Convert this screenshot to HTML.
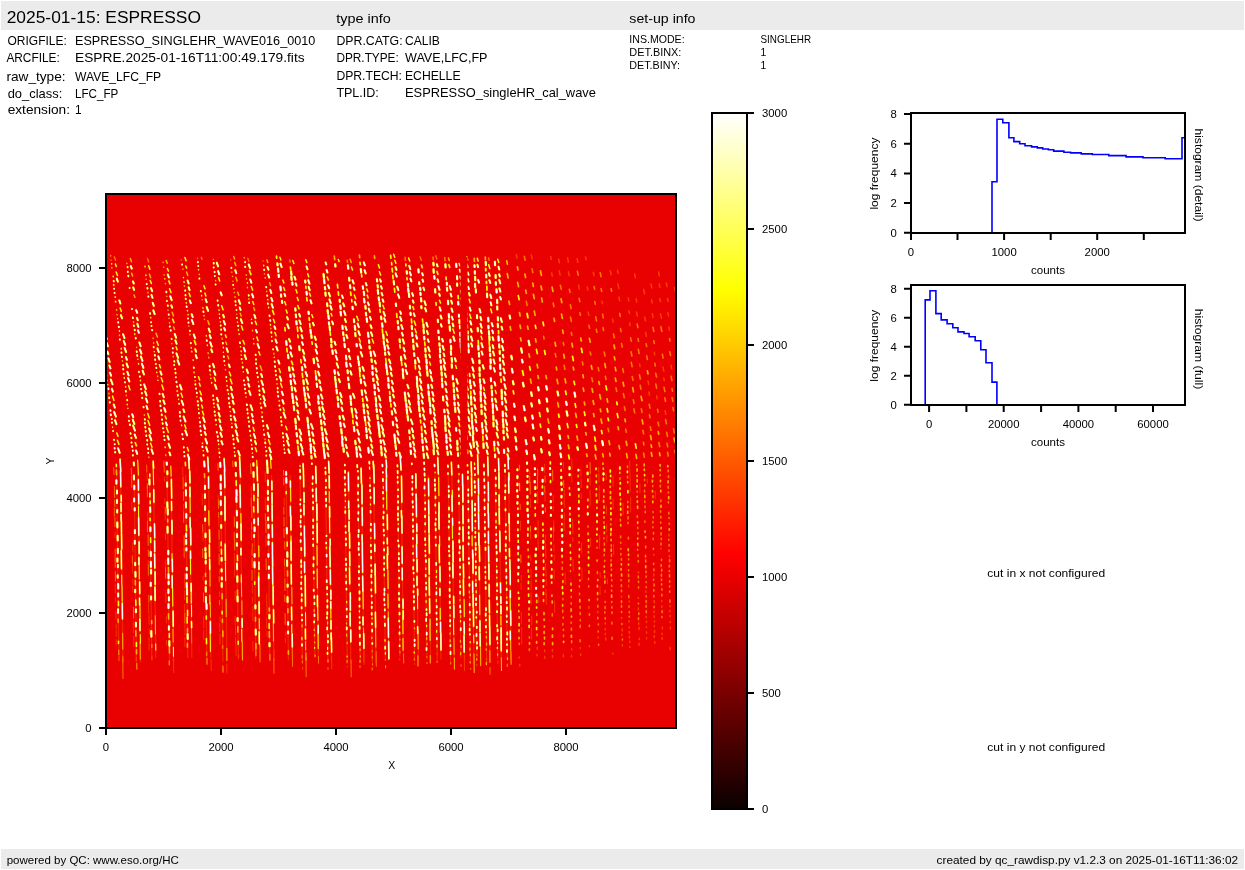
<!DOCTYPE html><html><head><meta charset="utf-8"><title>qc</title><style>html,body{margin:0;padding:0;background:#fff;width:1245px;height:870px;overflow:hidden}svg{display:block;will-change:transform}text{font-family:"Liberation Sans",sans-serif;fill:#000}</style></head><body><svg width="1245" height="870" viewBox="0 0 1245 870">
<defs><linearGradient id="hot" x1="0" y1="1" x2="0" y2="0"><stop offset="0" stop-color="rgb(11,0,0)"/><stop offset="0.365" stop-color="rgb(255,0,0)"/><stop offset="0.746" stop-color="rgb(255,255,0)"/><stop offset="1" stop-color="rgb(255,255,255)"/></linearGradient><clipPath id="clp"><rect x="106" y="194" width="570" height="534"/></clipPath></defs>
<rect x="1" y="1" width="1243" height="29" fill="#ebebeb"/>
<rect x="1" y="849" width="1243" height="20" fill="#ebebeb"/>
<g clip-path="url(#clp)">
<rect x="106" y="194" width="570" height="534" fill="#e90000"/>
<path d="M116.6 475L118.9 661.5M120.6 475L122.9 661.5M134.1 475L136.4 662.4M138.1 475L140.4 662.4M149.6 475L151.8 657.9M153.6 475L155.8 657.9M167.1 475L169.4 661.7M171.1 475L173.4 661.7M185.6 475L187.8 658.0M189.6 475L191.8 658.0M204.6 475L206.8 657.7M208.6 475L210.8 657.7M220.6 475L222.9 661.8M224.6 475L226.9 661.8M236.1 475L238.4 659.4M240.1 475L242.4 659.4M253.6 475L255.8 658.3M257.6 475L259.8 658.3M267.6 475L269.9 660.9M271.6 475L273.9 660.9M286.1 475L288.4 660.6M290.1 475L292.4 660.6M300.1 475L302.4 661.0M303.7 475L306.0 661.0M312.6 475L314.8 658.0M316.2 475L318.4 658.0M325.6 475L327.9 661.3M329.2 475L331.5 661.3M344.9 475L347.2 663.7M348.5 475L350.8 663.7M357.9 475L360.2 662.3M361.5 475L363.8 662.3M370.1 475L372.4 662.7M373.7 475L376.0 662.7M383.0 475L385.3 660.5M386.6 475L388.9 660.5M397.6 475L399.8 656.4M401.2 475L403.4 656.4M412.3 475L414.6 660.7M415.9 475L418.2 660.7M424.6 475L426.9 659.4M428.2 475L430.5 659.4M435.0 475L437.3 659.5M438.6 475L440.9 659.5M448.3 475L450.6 660.4M451.9 475L454.2 660.4M458.7 475L460.9 658.4M462.3 475L464.5 658.4M468.0 475L470.3 664.0M471.6 475L473.9 664.0M474.7 475L477.0 659.4M478.3 475L480.6 659.4M484.3 475L486.6 663.2M487.9 475L490.2 663.2M495.5 475L497.7 658.5M499.1 475L501.3 658.5M505.1 475L507.3 658.8M508.7 475L510.9 658.8" stroke="#ff5000" stroke-width="1.3" fill="none" opacity="0.45"/>
<path d="M277.4 263.4l0.2 1.9M278.0 268.5l0.4 3.3M278.6 274.7l0.2 2.2M280.4 286.6l0.4 3.7M281.0 294.5l0.2 2.2M282.0 300.9l0.2 2.0M286.2 341.2l0.4 3.7M288.0 354.8l0.4 3.3M289.1 367.2l0.4 3.5M290.3 374.6l0.3 2.4M290.7 380.6l0.4 3.9M291.7 387.0l0.4 3.4M292.2 393.7l0.5 4.7M293.1 400.2l0.3 3.0M293.8 406.3l0.4 3.8M295.2 418.9l0.5 4.5M295.8 425.7l0.4 3.3M296.6 433.1l0.4 3.3M297.4 440.5l0.3 2.8M298.6 451.4l0.3 3.8M291.1 271.4l0.4 3.6M291.3 276.7l0.4 3.1M292.3 282.5l0.2 2.1M295.3 308.4l0.2 2.2M295.8 314.5l0.3 2.6M296.3 321.2l0.3 3.1M299.2 346.3l0.4 3.9M302.0 367.1l0.4 3.2M303.4 380.3l0.4 3.9M303.9 387.6l0.4 3.3M304.6 392.9l0.4 3.2M305.4 398.1l0.3 3.0M305.9 404.1l0.4 3.4M307.4 417.8l0.5 4.6M308.0 424.2l0.5 4.2M308.8 431.1l0.5 4.3M309.8 438.5l0.3 2.8M310.6 444.3l0.3 2.5M310.7 448.3l0.4 4.6M311.4 455.9l0.2 2.6M305.2 280.6l0.2 1.9M306.5 291.9l0.3 2.7M308.5 311.7l0.3 2.3M310.4 329.7l0.4 3.5M311.3 335.0l0.3 3.0M313.6 358.9l0.5 4.3M316.0 376.0l0.4 3.7M316.7 383.5l0.4 3.5M318.2 396.0l0.3 2.8M318.3 401.2l0.3 2.5M319.4 407.2l0.3 2.8M319.9 413.0l0.4 3.9M321.0 420.2l0.4 3.9M321.6 427.2l0.3 2.9M322.4 432.6l0.4 3.3M322.7 437.5l0.4 3.8M323.2 443.6l0.4 3.4M323.8 448.8l0.5 4.8M324.5 454.4l0.3 3.7M323.5 274.1l0.4 3.7M324.1 279.6l0.4 3.7M324.9 287.0l0.3 2.3M325.4 292.6l0.3 3.1M327.1 303.4l0.3 2.8M327.6 310.2l0.4 3.4M328.4 315.4l0.4 3.4M328.9 322.4l0.3 2.3M329.6 326.7l0.4 3.7M331.1 338.8l0.4 3.6M331.3 344.8l0.3 2.3M332.4 350.3l0.4 3.5M334.5 370.4l0.4 3.3M335.0 376.9l0.5 4.0M335.7 382.5l0.5 4.7M336.5 389.6l0.4 3.9M337.6 396.9l0.4 3.3M338.0 403.4l0.4 3.4M339.6 416.2l0.3 2.7M340.3 422.6l0.4 3.8M341.2 429.2l0.5 4.4M342.1 436.3l0.4 3.6M342.1 441.1l0.6 5.0M343.5 448.3l0.3 3.5M335.2 264.2l0.3 2.3M339.6 299.7l0.2 2.2M340.3 305.5l0.4 3.3M340.6 311.7l0.4 3.8M342.4 325.9l0.3 3.0M343.1 332.2l0.3 2.8M343.9 337.6l0.3 3.0M344.5 343.9l0.4 3.3M346.0 355.8l0.4 3.7M346.2 362.5l0.5 4.1M347.5 370.3l0.3 2.8M348.1 377.6l0.3 2.6M348.8 383.7l0.5 4.4M350.4 396.0l0.4 3.7M350.8 401.4l0.4 3.6M351.6 408.3l0.4 3.9M353.9 426.9l0.5 4.3M355.2 440.9l0.4 3.3M356.3 447.1l0.3 3.0M356.7 452.1l0.4 4.6M347.9 265.3l0.4 3.3M349.1 277.8l0.3 2.8M350.0 285.2l0.3 2.9M352.5 306.9l0.3 2.2M353.9 319.4l0.3 2.7M354.8 325.8l0.5 4.1M355.2 333.0l0.4 3.2M356.6 344.1l0.2 2.2M357.9 356.6l0.3 2.6M358.6 361.0l0.5 4.3M359.6 367.8l0.4 3.5M360.7 379.3l0.4 3.8M361.7 390.3l0.5 4.6M363.4 404.0l0.3 3.0M363.8 409.3l0.5 4.2M364.7 416.7l0.4 3.8M366.1 427.9l0.5 4.1M366.6 434.8l0.4 3.3M368.3 447.9l0.5 4.8M360.8 269.0l0.4 3.6M362.8 286.3l0.3 2.4M363.8 291.7l0.4 3.5M364.1 298.8l0.4 3.7M365.3 305.8l0.3 2.8M365.9 312.9l0.3 2.5M366.7 318.4l0.4 3.4M368.0 332.7l0.5 4.1M369.0 340.3l0.3 2.6M369.5 346.3l0.2 2.2M370.6 351.7l0.5 4.4M371.5 359.4l0.3 2.5M372.3 365.8l0.3 3.0M372.4 372.0l0.3 2.7M373.2 378.6l0.3 2.4M374.3 384.6l0.4 3.8M374.7 391.8l0.3 2.9M375.7 397.6l0.4 4.0M376.0 403.5l0.4 3.2M376.6 409.1l0.3 2.9M377.3 415.0l0.5 4.0M378.2 422.0l0.5 4.4M378.8 427.4l0.5 4.0M379.3 432.2l0.5 4.7M380.6 440.3l0.3 2.5M381.0 446.2l0.4 3.7M381.5 451.9l0.3 3.4M376.9 279.2l0.3 2.2M377.6 285.0l0.3 2.4M377.8 290.1l0.4 3.7M378.7 297.3l0.3 3.1M379.6 302.6l0.4 3.7M381.1 316.6l0.3 2.5M382.1 323.4l0.4 3.4M383.2 334.7l0.5 4.3M383.7 341.2l0.4 3.5M384.6 346.0l0.4 4.0M385.0 352.5l0.3 2.3M386.1 363.9l0.5 4.5M386.9 370.1l0.5 4.4M388.1 377.9l0.4 3.4M388.4 384.1l0.4 3.9M389.9 396.7l0.5 4.7M391.8 411.2l0.4 3.2M392.8 421.9l0.4 3.2M394.4 434.5l0.4 3.8M394.9 439.6l0.4 3.6M395.5 444.9l0.5 4.3M396.2 452.7l0.3 3.0M393.7 281.0l0.4 3.5M395.9 303.5l0.2 2.4M397.7 321.0l0.2 2.4M398.3 326.8l0.2 2.3M399.6 339.3l0.3 2.9M401.0 356.9l0.4 3.8M402.7 369.2l0.3 2.8M402.9 373.6l0.5 4.5M404.8 392.6l0.3 2.8M405.3 396.7l0.5 4.8M406.2 403.3l0.4 4.1M406.7 409.0l0.5 4.8M407.6 415.9l0.5 4.6M409.2 430.3l0.3 2.9M410.2 443.2l0.4 3.4M410.7 450.5l0.3 3.4M406.7 271.3l0.2 2.3M407.9 283.9l0.2 2.5M408.2 288.5l0.3 3.4M408.9 293.6l0.3 3.4M409.9 305.9l0.2 2.6M410.5 312.9l0.2 2.1M411.7 325.7l0.3 3.4M412.1 332.8l0.3 3.2M413.0 339.5l0.3 2.8M413.4 345.4l0.4 4.0M414.1 353.2l0.3 2.8M415.1 360.2l0.3 3.4M416.8 376.9l0.4 4.4M417.0 382.7l0.4 4.7M417.8 388.6l0.3 3.5M418.3 395.1l0.4 4.0M418.5 401.2l0.4 4.0M419.1 407.1l0.4 4.1M419.9 413.8l0.3 2.8M421.8 433.5l0.3 3.5M422.3 439.4l0.3 3.5M422.9 446.6l0.3 4.0M423.7 453.8l0.3 4.1M418.4 269.4l0.3 3.0M419.2 282.3l0.2 1.9M420.2 287.8l0.2 2.2M420.4 292.9l0.2 2.1M421.0 298.1l0.3 3.3M421.3 306.1l0.2 2.0M423.4 324.3l0.3 3.7M423.6 329.9l0.3 3.4M424.2 336.8l0.2 2.7M425.3 348.4l0.3 3.2M425.6 354.6l0.2 2.5M426.3 359.3l0.4 4.4M426.6 365.9l0.3 3.5M427.2 371.3l0.4 4.4M428.1 384.8l0.3 3.7M428.5 391.3l0.4 4.3M429.3 397.5l0.3 3.8M430.0 402.6l0.3 3.7M430.2 408.9l0.4 4.6M431.5 421.2l0.2 2.8M431.8 427.4l0.3 4.0M432.3 432.5l0.4 4.8M433.0 438.3l0.4 4.4M433.5 443.3l0.4 4.9M433.6 449.7l0.3 4.6M433.4 262.9l0.2 2.5M433.5 269.2l0.3 3.6M434.3 276.1l0.2 2.6M435.1 289.2l0.2 3.3M437.8 319.7l0.2 2.3M438.3 330.6l0.2 2.3M438.9 337.0l0.2 2.4M439.4 343.4l0.2 2.3M439.9 348.3l0.3 4.0M439.9 354.9l0.2 2.6M440.6 360.3l0.2 2.7M441.1 366.4l0.3 3.5M441.6 372.3l0.2 3.3M441.9 378.3l0.2 3.2M442.2 383.5l0.3 3.7M443.0 396.5l0.3 3.9M444.3 409.7l0.2 2.6M445.0 415.9l0.3 3.6M445.1 420.5l0.3 4.4M445.4 426.9l0.3 4.2M446.2 434.5l0.3 3.9M446.4 440.2l0.2 2.5M446.8 446.4l0.2 2.7M447.6 451.7l0.2 3.2M445.4 264.2l0.2 3.2M446.8 282.7l0.1 2.1M447.0 287.8l0.2 2.8M448.0 300.7l0.2 3.5M448.8 314.1l0.2 3.6M448.8 320.0l0.2 3.1M449.7 326.4l0.3 4.2M450.4 339.9l0.2 2.4M451.0 345.7l0.2 3.4M450.9 351.2l0.2 3.4M451.7 358.1l0.3 3.9M451.7 364.3l0.2 3.4M452.7 375.9l0.2 3.5M453.5 383.1l0.2 3.7M453.8 389.4l0.2 2.7M454.2 394.9l0.3 4.6M454.5 402.6l0.2 2.6M455.1 407.6l0.3 4.3M456.1 428.1l0.2 2.6M457.2 440.9l0.3 3.9M457.4 447.3l0.2 2.9M458.0 453.3l0.1 2.7M456.2 263.9l0.2 3.0M457.0 276.2l0.2 2.9M457.1 283.5l0.1 2.3M458.2 301.9l0.2 2.6M458.9 314.7l0.1 2.1M459.4 319.9l0.2 3.4M459.9 325.6l0.2 2.7M460.2 332.7l0.2 3.3M460.3 338.8l0.2 3.3M460.7 343.8l0.2 4.1M461.3 349.3l0.2 3.3M461.8 356.3l0.2 3.3M462.2 362.8l0.3 4.4M462.3 369.2l0.2 3.5M462.9 374.9l0.3 4.4M462.9 381.7l0.2 3.3M463.4 387.5l0.2 3.1M463.7 392.3l0.3 4.3M463.9 397.8l0.2 3.3M464.3 403.4l0.2 3.3M465.0 410.1l0.2 3.3M465.4 417.0l0.2 4.0M465.9 429.6l0.2 4.1M466.5 436.3l0.2 3.0M467.2 450.3l0.1 2.8M464.2 264.6l0.1 2.2M464.6 275.8l0.1 2.1M465.6 299.4l0.1 2.6M465.8 304.8l0.2 3.5M466.3 312.7l0.1 2.2M467.7 331.4l0.1 2.1M467.9 336.1l0.2 3.6M468.3 343.8l0.2 3.2M468.5 349.4l0.2 3.0M470.0 380.3l0.2 3.2M470.7 385.4l0.2 2.9M471.0 396.3l0.2 3.1M471.2 401.1l0.2 3.6M471.8 408.3l0.2 3.1M471.7 414.3l0.2 3.8M472.0 420.1l0.2 4.0M472.5 425.7l0.2 3.2M473.1 430.6l0.2 3.7M472.9 435.9l0.3 4.7M473.6 442.2l0.3 4.8M474.5 265.2l0.1 1.8M474.8 271.3l0.1 2.3M475.1 276.9l0.2 3.3M475.0 283.7l0.2 3.4M475.8 289.3l0.2 3.2M477.0 315.3l0.1 2.8M477.7 328.1l0.2 3.2M478.3 345.5l0.2 4.1M478.9 352.8l0.2 3.8M479.4 360.4l0.1 2.8M479.5 367.6l0.2 3.3M479.6 373.3l0.1 2.8M479.9 379.2l0.2 3.6M480.6 384.9l0.2 4.2M480.6 391.4l0.2 4.6M480.7 397.5l0.2 3.9M481.4 404.5l0.1 2.6M481.5 410.2l0.2 4.0M482.0 423.1l0.2 4.0M482.7 429.4l0.2 4.0M483.4 443.4l0.2 4.5M485.7 261.9l0.2 3.3M485.7 268.6l0.1 2.1M486.2 274.8l0.1 2.6M486.4 281.5l0.1 1.9M487.0 293.6l0.2 3.5M488.2 317.9l0.2 3.5M488.4 325.8l0.1 2.7M488.9 331.0l0.2 3.6M489.3 336.3l0.2 3.8M489.7 347.1l0.2 4.2M490.2 353.7l0.1 2.5M490.5 359.4l0.2 3.7M490.4 365.6l0.2 3.1M490.9 378.2l0.1 2.9M491.5 385.7l0.1 2.8M491.9 390.9l0.2 4.5M492.1 398.6l0.1 2.9M492.7 403.8l0.2 4.3M492.9 410.1l0.2 3.2M493.3 415.5l0.2 4.7M493.4 422.6l0.2 3.8M494.2 441.8l0.2 3.9M495.1 454.5l0.1 2.7M494.9 261.8l0.2 3.5M495.6 275.1l0.1 2.9M495.8 282.2l0.1 2.6M496.5 289.4l0.2 3.1M497.1 299.9l0.2 3.3M497.2 306.5l0.1 2.9M497.8 317.2l0.2 3.2M497.8 323.8l0.2 3.3M498.5 336.4l0.2 4.3M499.2 344.3l0.2 3.3M499.7 350.9l0.1 2.9M499.9 358.1l0.1 2.6M500.1 364.6l0.2 4.4M500.4 372.7l0.1 2.6M501.6 389.8l0.2 4.6M501.7 395.5l0.2 3.8M502.2 401.8l0.1 2.6M502.7 411.6l0.2 4.8M502.9 419.2l0.2 3.1M503.3 423.8l0.2 3.8M503.4 430.3l0.2 3.0M503.9 437.0l0.1 2.5M504.1 449.7l0.1 3.2M509.6 315.5l0.6 3.0M511.3 355.8l0.7 3.6M511.9 368.9l0.7 3.7M512.9 381.2l0.6 3.2M514.0 403.8l0.6 3.0M514.4 416.6l0.7 3.5M515.0 428.4l0.7 3.6M515.4 437.1l0.9 4.3M516.0 446.6l0.6 3.0M517.4 469.4l0.0 0.8M517.4 476.1l0.0 2.0M517.4 483.6l0.0 1.7M517.1 490.2l0.0 1.2M517.7 495.8l0.0 1.4M517.4 502.3l0.0 1.3M518.0 514.5l0.0 1.5M518.0 521.6l0.0 1.4M518.0 535.0l0.0 1.4M518.3 546.6l0.0 2.1M518.5 559.4l0.0 1.1M518.5 566.9l0.0 1.1M518.2 573.4l0.0 1.1M519.0 597.8l0.0 1.1M521.1 348.3l0.9 4.3M522.0 359.7l0.6 2.8M522.5 370.8l0.9 4.4M522.9 382.7l0.8 3.8M523.8 406.1l0.8 4.2M525.0 417.5l0.7 3.6M525.7 440.0l0.8 4.2M526.4 450.6l0.6 3.4M527.0 462.5l0.0 1.3M527.4 469.7l0.0 1.4M527.5 476.0l0.0 0.8M527.4 481.3l0.0 1.5M527.3 488.8l0.0 1.2M527.4 496.1l0.0 1.7M527.6 502.4l0.0 1.7M527.5 508.9l0.0 2.0M528.1 514.7l0.0 2.1M528.1 520.8l0.0 1.9M527.9 541.9l0.0 0.9M528.6 563.5l0.0 1.6M529.2 601.3l0.0 1.1M527.1 313.5l0.8 4.2M528.6 340.9l0.9 4.4M531.2 392.4l0.7 3.6M531.3 403.2l0.7 3.3M532.2 415.5l0.6 3.2M532.6 424.6l0.8 3.9M533.3 437.5l0.6 2.9M534.0 455.1l0.8 4.3M534.9 468.3l0.0 0.9M534.9 473.9l0.0 1.0M534.7 481.1l0.0 1.4M535.3 486.9l0.0 2.1M535.4 494.2l0.0 1.8M535.2 501.0l0.0 1.2M535.5 528.2l0.0 1.1M535.7 535.0l0.0 2.1M536.0 548.6l0.0 1.2M535.6 554.5l0.0 1.7M536.0 561.3l0.0 1.4M536.1 567.3l0.0 1.9M536.1 574.5l0.0 1.4M536.1 587.7l0.0 1.1M536.3 594.7l0.0 1.5M538.1 387.2l0.6 3.2M539.0 400.1l0.6 3.2M541.0 437.0l0.5 2.7M541.1 449.1l0.7 3.4M542.3 468.0l0.1 2.1M542.6 479.8l0.0 2.0M542.4 492.7l0.0 1.5M542.7 505.2l0.0 1.2M542.9 511.6l0.0 1.5M543.3 540.9l0.0 1.9M543.1 546.7l0.0 2.0M543.4 580.0l0.0 1.2M546.2 386.0l0.7 3.6M546.6 398.6l0.6 3.0M547.2 408.6l0.6 2.9M548.2 429.1l0.7 3.5M548.9 440.2l0.6 3.2M549.2 452.2l0.6 2.9M550.1 468.1l0.0 0.8M550.2 474.0l0.0 1.2M550.7 493.7l0.0 1.0M550.8 501.1l0.0 1.0M551.0 507.3l0.0 1.0M550.9 514.8l0.0 0.9M551.1 528.6l0.0 0.8M551.1 542.7l0.0 1.0M551.3 561.4l0.0 1.4M551.5 575.6l0.0 2.1M557.5 391.6l0.8 3.9M558.6 414.4l0.5 2.7M559.1 425.7l0.7 3.4M559.5 435.3l0.7 3.7M559.8 445.0l0.7 3.7M560.5 453.6l0.7 3.6M560.9 463.5l0.0 0.8M561.3 476.8l0.0 1.3M561.4 482.6l0.0 2.2M561.8 489.1l0.0 1.1M561.5 495.8l0.0 1.7M562.0 509.8l0.0 1.2M561.8 515.6l0.0 2.0M561.8 529.3l0.0 1.3M562.2 535.0l0.0 1.4M562.3 541.8l0.0 1.2M562.0 548.8l0.0 1.9M566.1 401.8l0.6 3.1M566.6 411.4l0.9 4.3M569.5 467.1l0.1 2.1M569.6 474.1l0.0 1.2M569.9 507.8l0.0 1.0M570.0 519.0l0.0 2.0M574.5 392.6l0.8 4.1M577.4 447.2l0.5 2.7M578.4 469.7l0.0 0.8M578.3 482.8l0.0 1.2M578.7 488.9l0.0 1.0M578.7 508.2l0.0 1.1M585.0 422.8l0.5 2.6M586.1 443.8l0.8 4.1M587.6 472.6l0.0 1.7M587.4 486.3l0.0 1.2M587.8 513.2l0.0 1.4M593.8 425.8l0.9 4.3M595.1 445.7l0.8 4.2M596.9 500.4l0.0 2.0M597.1 514.4l0.0 1.0M602.2 441.0l0.8 4.2M603.5 473.2l0.0 1.4M619.9 467.1l0.0 2.0" stroke="#ff6000" stroke-width="2.7" stroke-linecap="round" fill="none" opacity="0.45"/>
<path d="M116.4 480.2l0.0 3.6M117.0 490.6l0.0 3.0M117.0 500.1l0.0 2.9M117.2 510.1l0.0 2.3M117.3 522.4l0.1 5.1M117.6 535.7l0.1 4.8M117.8 548.7l0.1 4.5M117.4 558.4l0.0 3.3M117.9 564.9l0.0 2.3M117.7 575.3l0.0 2.4M118.2 583.9l0.1 4.6M118.2 593.4l0.0 3.0M118.1 609.2l0.0 3.7M133.8 462.6l0.2 2.8M133.9 475.4l0.1 4.0M134.3 485.7l0.0 3.6M134.2 498.5l0.0 2.9M134.7 508.2l0.0 2.2M134.9 530.1l0.0 3.1M134.8 540.8l0.0 3.0M135.2 562.7l0.0 2.5M135.4 571.9l0.1 4.8M135.2 589.7l0.0 2.5M135.9 609.3l0.0 3.0M135.9 622.7l0.0 3.9M149.4 479.3l0.1 5.1M150.2 507.3l0.1 4.8M150.4 527.3l0.0 4.0M150.7 551.8l0.1 4.5M150.8 561.7l0.1 5.3M151.1 569.8l0.0 3.8M150.7 582.7l0.0 3.2M151.1 596.4l0.0 3.1M151.3 631.0l0.1 5.8M166.7 462.5l0.1 2.3M167.3 471.2l0.1 3.0M167.1 482.4l0.1 4.4M167.3 502.3l0.1 5.5M167.7 508.9l0.1 5.6M167.5 526.8l0.1 5.9M168.3 550.8l0.0 3.5M168.2 558.6l0.1 5.4M168.5 574.0l0.1 4.6M168.6 581.4l0.0 2.8M168.4 589.5l0.0 3.6M168.9 597.2l0.0 3.4M168.5 604.1l0.0 4.0M168.9 626.2l0.0 3.5M169.3 641.0l0.1 4.9M185.8 483.3l0.0 2.5M185.9 490.2l0.1 5.4M185.9 502.6l0.1 4.8M186.3 513.9l0.0 3.8M186.2 533.6l0.0 3.2M186.2 539.9l0.0 4.1M186.4 548.3l0.0 2.1M186.7 567.7l0.0 2.3M186.6 574.3l0.1 4.3M186.7 583.1l0.1 4.7M187.0 589.1l0.1 5.7M187.6 634.0l0.1 5.0M204.2 461.6l0.3 4.8M205.0 485.7l0.0 3.4M205.0 494.3l0.0 3.6M205.1 506.2l0.0 3.7M205.2 518.4l0.0 2.5M205.5 533.5l0.0 3.7M205.4 548.0l0.0 2.8M205.6 552.9l0.1 5.5M205.7 561.0l0.0 2.6M205.8 581.2l0.0 2.5M205.7 587.0l0.1 4.8M205.9 597.0l0.1 5.9M206.5 603.9l0.1 5.1M220.2 462.7l0.2 4.3M220.7 475.4l0.1 4.9M220.6 483.9l0.1 5.1M220.9 492.0l0.0 2.8M220.7 500.9l0.1 4.3M221.3 512.0l0.0 2.2M221.2 525.1l0.0 2.8M221.6 557.8l0.0 2.9M221.6 569.3l0.0 2.2M221.8 577.4l0.0 2.1M221.7 583.1l0.0 3.9M235.6 462.4l0.2 3.6M235.8 473.0l0.1 2.9M236.5 490.1l0.1 5.9M236.4 496.9l0.1 5.1M236.8 510.8l0.1 4.6M237.0 522.3l0.1 5.3M237.0 533.9l0.0 3.3M236.9 543.2l0.0 2.6M237.0 563.6l0.1 5.7M237.3 576.3l0.1 5.4M237.5 596.2l0.1 5.3M237.6 618.1l0.0 3.0M253.4 463.2l0.1 2.4M253.5 472.1l0.1 4.8M253.9 484.3l0.1 5.7M254.2 519.4l0.0 3.8M254.6 527.3l0.0 3.9M254.1 534.9l0.0 2.2M254.6 554.0l0.0 2.8M254.5 561.9l0.1 5.7M255.4 605.2l0.0 3.4M255.7 629.6l0.1 5.1M267.0 460.6l0.3 5.5M267.4 467.2l0.2 5.8M267.9 480.4l0.1 4.8M267.9 490.9l0.0 3.0M268.0 497.5l0.0 2.4M267.8 505.8l0.1 5.2M268.1 517.5l0.0 2.8M268.4 524.8l0.0 3.2M268.6 534.4l0.0 3.8M268.5 541.4l0.0 3.2M268.4 554.0l0.0 2.8M268.9 566.5l0.0 2.2M268.8 574.7l0.0 3.6M269.4 614.8l0.0 3.6M269.5 643.0l0.0 3.3M286.1 471.9l0.1 2.8M286.3 477.9l0.1 4.9M286.8 528.1l0.1 5.4M287.3 552.2l0.1 4.7M287.1 560.3l0.1 5.8M287.6 584.6l0.0 2.2M287.5 597.1l0.1 5.0M288.1 622.0l0.0 2.7M288.1 631.4l0.0 2.0" stroke="#ff6000" stroke-width="2.6" stroke-linecap="round" fill="none" opacity="0.45"/>
<path d="M105.4 335.4l1.4 3.8M106.6 342.7l1.3 3.6M107.3 351.5l1.0 2.7M108.4 358.3l1.3 3.7M109.4 365.5l1.1 2.9M110.0 372.7l1.1 3.1M110.8 379.5l1.8 4.8M111.9 388.8l1.0 2.8M113.7 404.4l1.2 3.3M114.1 411.8l1.8 4.9M115.0 420.1l1.5 4.1M118.1 448.2l1.6 4.7M116.8 278.6l1.1 3.0M119.3 300.4l1.1 3.1M120.9 315.1l1.2 3.2M123.1 334.2l1.4 3.9M123.8 341.0l1.4 3.9M124.6 347.9l1.5 4.2M125.9 357.1l1.0 2.7M126.6 363.5l1.4 3.8M127.3 371.8l1.3 3.5M128.1 378.0l1.3 3.5M132.2 414.2l1.1 3.0M132.8 419.6l1.6 4.4M133.1 425.5l1.9 5.2M134.7 434.5l1.3 3.5M135.3 442.7l1.1 3.0M136.0 450.4l1.2 3.5M130.8 266.1l1.0 2.6M133.0 281.4l0.8 2.2M133.2 287.4l0.9 2.6M136.2 310.1l1.0 2.7M137.0 317.9l0.8 2.3M137.3 323.8l1.1 3.1M138.0 330.3l0.9 2.5M139.3 342.4l1.4 3.8M140.0 349.6l1.5 4.1M140.9 356.4l1.6 4.5M141.9 363.7l1.5 4.2M142.6 370.7l1.4 3.8M144.1 384.3l1.8 4.9M145.1 391.4l1.5 4.0M145.9 398.4l1.5 4.1M146.5 406.0l1.1 3.1M149.1 428.4l1.8 4.9M149.5 435.2l1.9 5.1M151.5 449.3l1.6 4.5M151.1 288.1l1.1 3.1M151.5 295.0l1.0 2.8M152.7 302.8l1.1 3.1M153.3 310.3l1.4 3.8M157.4 348.3l1.4 3.8M158.3 356.3l1.1 3.2M160.4 371.5l1.2 3.2M162.6 393.9l1.2 3.4M163.4 400.4l1.3 3.5M164.2 408.0l1.4 3.8M165.9 422.4l1.0 2.9M167.5 436.1l1.3 3.4M168.6 443.7l1.5 4.2M169.4 452.4l1.0 2.9M167.8 274.5l1.1 3.0M168.9 280.9l1.0 2.8M170.2 296.2l1.5 4.0M171.3 305.3l0.9 2.4M172.7 319.2l1.2 3.4M174.7 333.9l1.4 3.9M175.4 340.4l1.2 3.4M176.4 353.3l1.7 4.6M177.6 360.1l1.7 4.6M180.0 384.9l1.7 4.7M181.7 400.7l1.6 4.5M183.4 409.3l1.0 2.8M183.6 416.5l1.9 5.1M185.3 430.4l1.8 4.9M187.8 454.6l1.5 4.6M187.6 280.5l1.1 3.0M188.6 287.3l1.0 2.8M189.8 300.5l1.0 2.7M191.7 314.2l1.1 2.9M191.9 320.0l1.5 4.1M193.8 334.5l1.3 3.7M194.4 340.7l1.4 3.9M195.2 349.2l0.9 2.6M195.7 355.1l1.1 3.1M200.6 397.8l1.1 3.1M203.1 417.3l1.7 4.7M203.9 425.3l1.3 3.6M204.7 431.9l1.1 3.0M205.4 438.8l1.7 4.8M206.1 447.1l1.6 4.6M205.6 299.2l1.1 3.0M206.7 307.0l1.4 3.9M208.7 328.6l1.3 3.5M209.7 335.2l1.1 3.0M210.2 342.2l1.6 4.5M211.2 349.3l1.1 2.9M212.9 363.9l1.3 3.5M214.0 371.1l1.4 3.8M215.0 384.7l1.5 4.1M216.9 397.8l1.3 3.6M217.5 404.4l1.7 4.8M218.5 412.9l1.3 3.6M219.2 419.2l1.1 3.0M219.9 425.6l1.7 4.7M220.4 432.8l1.5 4.1M221.4 441.1l1.2 3.3M216.8 262.7l1.3 3.7M218.1 271.1l1.2 3.2M220.6 292.3l1.1 3.0M223.1 314.9l0.9 2.4M223.8 321.0l1.3 3.6M224.2 328.0l0.9 2.5M226.6 348.3l1.3 3.7M228.8 364.5l1.0 2.6M230.7 386.8l1.2 3.3M231.5 393.7l1.5 4.2M232.6 400.8l1.1 3.1M233.2 409.0l1.3 3.5M234.0 416.4l1.6 4.3M235.4 424.0l1.3 3.7M235.7 430.5l1.8 5.1M237.0 437.9l1.3 3.6M238.2 451.0l1.6 4.6M235.2 270.2l1.1 2.9M238.8 300.1l1.4 3.7M239.7 307.5l0.9 2.4M240.8 319.1l1.5 4.0M243.8 347.8l1.3 3.7M244.7 355.1l1.4 4.0M246.7 369.4l1.3 3.7M247.3 377.3l1.1 3.1M248.3 383.8l1.1 2.9M249.1 390.9l1.5 4.0M250.6 405.2l1.8 5.0M251.7 413.9l1.0 2.8M252.5 419.8l1.2 3.4M253.8 434.0l1.5 4.2M255.0 441.1l1.1 3.1M248.7 264.4l1.3 3.6M249.5 270.7l1.4 3.8M250.2 279.5l1.2 3.2M252.1 294.1l1.2 3.3M254.3 314.9l1.2 3.3M256.0 330.0l0.9 2.4M257.6 344.0l1.5 4.0M261.1 374.0l1.1 3.1M261.4 380.7l1.6 4.4M262.8 388.3l1.5 4.1M263.2 395.9l1.6 4.4M264.0 402.1l1.5 4.1M266.9 425.1l1.3 3.6M267.7 432.8l1.6 4.3M269.2 447.6l1.6 4.7M270.0 454.7l1.4 4.3M267.5 267.0l1.0 2.7M268.1 274.6l1.1 3.0M270.2 289.8l1.2 3.3M271.3 298.0l1.2 3.2M271.6 304.1l1.3 3.7M272.6 310.6l1.3 3.7M274.4 326.3l1.0 2.7M275.5 339.5l1.2 3.3M276.3 346.7l1.4 3.8M278.2 360.4l1.2 3.3M279.7 376.4l1.6 4.5M281.8 391.7l1.2 3.4M282.4 400.1l1.3 3.6M283.6 412.7l1.9 5.1M286.3 434.0l1.9 5.1M287.1 440.7l1.8 4.9M288.3 449.3l1.3 3.7M280.4 263.6l1.3 3.5M284.5 293.9l0.8 2.3M287.1 317.0l0.9 2.5M287.3 324.3l1.5 4.0M289.1 339.0l1.0 2.7M290.2 345.7l1.0 2.8M290.5 352.3l1.6 4.3M291.5 361.2l1.2 3.2M292.3 367.5l1.0 2.7M293.2 373.7l1.1 3.0M293.8 379.4l1.6 4.4M294.5 387.8l1.3 3.5M295.8 396.3l1.2 3.4M296.5 402.5l1.3 3.5M297.3 410.4l1.1 3.0M297.8 416.1l1.3 3.6M299.4 429.4l1.8 4.9M299.8 436.2l1.6 4.5M300.6 443.9l1.8 4.9M301.9 450.3l1.5 4.3M294.4 276.7l1.1 3.0M295.7 283.3l0.9 2.3M299.2 314.0l0.9 2.6M299.4 320.4l1.3 3.6M300.3 327.3l1.5 4.1M301.5 335.1l1.1 3.1M302.0 342.2l1.0 2.7M302.7 349.8l1.5 4.1M303.6 356.4l1.6 4.4M304.4 364.2l1.2 3.2M305.6 371.9l1.6 4.3M306.2 379.2l1.7 4.8M307.1 387.1l1.0 2.8M307.6 393.6l1.5 4.2M308.8 401.7l1.1 3.1M309.4 409.4l1.5 4.2M311.1 424.0l1.7 4.8M312.1 432.3l1.3 3.6M312.9 439.6l1.5 4.0M313.5 446.9l1.6 4.5M314.4 453.4l1.2 3.7M306.5 266.5l1.0 2.8M308.2 280.1l1.3 3.6M308.6 286.8l1.2 3.4M310.4 300.1l1.2 3.3M312.9 322.8l0.9 2.6M314.7 336.6l1.2 3.3M315.6 343.9l1.2 3.3M315.7 349.6l1.5 4.1M316.6 357.7l1.3 3.5M317.8 364.0l1.1 3.1M318.1 371.6l1.4 4.0M319.2 380.2l1.0 2.9M320.1 386.6l1.4 3.9M321.0 394.5l1.5 4.1M321.7 401.7l1.0 2.8M322.3 407.1l1.8 4.8M323.0 414.1l1.8 4.9M323.9 421.8l1.1 2.9M324.8 429.1l1.9 5.2M326.0 437.4l1.7 4.7M326.8 445.0l1.5 4.3M327.5 453.1l1.1 3.2M325.6 262.5l0.7 2.0M326.6 269.9l0.9 2.6M328.0 285.2l1.2 3.2M328.8 292.9l1.3 3.5M329.4 299.3l1.4 3.8M330.3 305.6l1.5 4.1M332.1 321.5l1.0 2.8M334.5 341.7l1.1 3.1M335.3 350.1l1.1 2.9M335.8 355.8l1.5 4.2M336.7 363.2l1.6 4.5M337.8 372.2l1.1 2.9M338.8 379.0l1.2 3.2M340.1 392.9l1.5 4.2M340.4 399.2l1.7 4.7M341.5 407.6l1.2 3.3M342.7 415.7l1.5 4.0M343.7 423.6l1.2 3.3M345.2 437.2l1.1 3.0M345.7 444.8l1.2 3.3M347.0 452.5l1.3 3.9M342.0 295.5l0.9 2.5M343.2 303.3l1.1 3.0M344.0 311.1l1.5 4.0M344.9 319.0l1.1 3.1M345.4 326.5l1.2 3.4M346.3 334.9l1.2 3.2M348.3 348.9l0.9 2.5M349.2 356.1l1.1 3.1M350.0 363.7l0.9 2.6M350.4 371.2l1.2 3.4M353.0 393.7l1.5 4.2M355.1 408.9l1.4 3.9M355.9 415.5l1.1 3.0M356.3 422.3l1.1 3.0M357.3 429.7l1.8 5.0M358.4 438.3l1.5 4.2M359.1 446.4l1.4 4.0M360.0 454.0l1.0 3.0M352.5 280.2l1.2 3.3M353.7 287.5l0.9 2.4M354.8 301.8l1.1 3.0M357.6 323.6l1.3 3.6M358.4 331.2l1.5 4.0M359.8 344.1l1.5 4.0M360.7 352.0l1.6 4.5M362.5 367.0l1.4 3.8M363.2 375.4l1.1 3.0M364.3 381.7l1.4 4.0M364.8 390.3l1.1 3.0M365.9 396.5l1.5 4.1M366.8 404.7l1.1 3.0M367.4 411.0l1.0 2.9M368.1 416.3l1.6 4.3M368.4 422.5l1.5 4.2M369.1 429.0l1.6 4.5M370.0 437.1l1.6 4.4M371.2 444.6l1.2 3.2M371.3 450.2l1.7 4.9M363.8 262.3l1.1 3.0M364.5 270.1l1.2 3.3M365.8 283.1l0.8 2.3M367.9 302.5l1.0 2.7M368.7 308.6l1.2 3.3M369.9 316.9l1.0 2.8M370.5 325.2l1.1 3.0M371.0 332.3l1.3 3.7M373.6 351.4l1.7 4.6M374.9 360.8l1.0 2.7M375.5 368.2l1.3 3.5M376.1 374.7l1.8 4.9M377.0 381.6l1.2 3.4M377.9 388.1l1.1 2.9M378.7 395.8l1.6 4.5M379.6 403.9l1.2 3.4M379.9 409.8l1.3 3.7M381.3 417.9l1.2 3.3M381.3 425.1l1.9 5.2M382.6 431.9l1.6 4.5M383.2 440.2l1.5 4.3M384.6 447.8l1.4 3.9M384.7 453.9l1.2 3.7M380.0 279.3l0.9 2.4M381.0 286.2l0.9 2.5M381.6 293.0l0.9 2.4M382.6 299.4l0.9 2.5M383.5 311.8l1.5 4.0M384.2 318.2l1.3 3.7M386.7 339.5l1.0 2.8M387.3 345.2l1.3 3.5M388.3 351.8l1.1 2.9M389.0 359.4l1.4 3.9M390.0 366.0l1.4 4.0M390.8 372.8l1.2 3.2M391.7 380.7l1.1 3.1M391.8 387.1l1.7 4.6M393.0 394.7l1.0 2.8M394.1 402.5l1.3 3.5M394.2 408.5l1.6 4.5M395.6 417.4l1.3 3.5M396.5 424.5l1.1 3.2M397.2 431.1l1.3 3.7M397.5 438.2l1.8 4.8M399.3 452.6l1.6 4.9M395.5 267.1l1.0 2.8M395.6 273.3l1.2 3.4M397.2 286.7l1.2 3.5M398.0 294.4l1.3 3.6M400.2 311.5l0.8 2.3M400.1 317.0l1.4 3.9M401.3 325.0l1.4 4.0M401.9 332.8l1.0 2.9M402.7 339.3l1.5 4.3M403.5 347.8l1.3 3.6M404.2 354.8l1.4 3.9M405.0 363.5l1.1 3.0M405.7 369.9l1.5 4.2M407.4 384.8l1.2 3.4M408.0 393.1l1.2 3.4M408.7 400.5l1.4 4.1M409.3 407.0l1.8 5.2M410.9 419.5l1.7 4.7M411.8 428.3l1.3 3.8M412.7 435.0l1.2 3.4M413.0 441.8l1.1 3.2M413.7 447.3l1.5 4.4M414.4 453.8l1.1 3.4M409.2 265.8l1.2 3.4M409.8 272.1l1.1 3.2M410.4 278.6l1.0 2.8M412.1 293.1l1.0 2.8M412.8 300.4l0.8 2.3M412.9 306.7l0.9 2.7M413.8 313.4l0.9 2.7M416.0 335.3l1.1 3.3M416.5 343.4l1.1 3.1M417.7 357.7l1.6 4.5M418.9 365.8l1.1 3.2M419.2 371.6l1.3 3.9M419.9 378.7l1.4 4.2M420.3 385.6l1.6 4.7M421.3 393.3l1.5 4.4M421.7 400.6l1.1 3.1M422.5 407.7l1.4 4.1M423.1 414.6l1.7 5.0M423.8 423.5l1.3 3.7M424.9 430.7l1.0 2.8M425.1 438.0l1.4 4.1M426.4 446.3l1.1 3.3M426.8 453.3l1.5 4.7M421.4 265.1l0.8 2.5M422.2 273.2l0.7 2.2M422.5 279.6l0.7 2.1M423.4 287.6l0.9 2.6M424.5 301.2l1.3 3.9M425.1 308.1l1.1 3.3M426.4 322.8l1.3 3.9M426.9 330.9l1.1 3.3M427.8 339.3l0.9 2.5M428.1 346.9l1.5 4.4M429.2 354.7l0.9 2.6M429.9 370.0l1.2 3.4M430.8 376.2l1.6 4.8M431.3 384.8l1.0 3.1M432.2 391.9l1.3 3.8M432.7 398.5l1.0 2.9M432.7 405.0l1.7 5.0M433.8 412.2l1.2 3.5M434.2 417.8l1.5 4.6M434.7 424.7l1.0 3.0M435.3 431.8l1.5 4.3M436.2 438.7l1.1 3.2M436.5 444.2l1.4 4.3M437.2 450.7l1.2 3.7M436.9 264.2l0.7 2.2M437.0 271.5l0.9 2.8M437.5 279.3l0.9 2.7M438.4 286.2l1.2 3.7M439.1 293.6l0.7 2.3M439.6 307.2l1.1 3.4M440.6 315.6l1.0 3.0M440.9 324.2l0.8 2.4M442.1 338.9l0.9 2.7M442.5 345.8l1.4 4.2M443.6 353.5l0.9 2.7M443.5 359.0l1.5 4.7M443.8 365.4l1.5 4.5M444.9 373.5l1.2 3.6M445.3 381.7l1.0 3.0M445.6 388.9l1.1 3.4M446.2 395.7l1.2 3.8M446.5 402.0l1.3 3.9M447.2 409.4l1.4 4.2M447.9 416.0l1.7 5.2M448.5 423.0l1.2 3.7M448.7 430.3l1.7 5.2M449.6 437.9l1.0 3.1M450.1 444.8l1.0 2.9M450.3 451.3l1.0 3.2M448.9 264.8l0.8 2.6M449.7 286.0l1.2 3.8M450.6 293.7l0.9 2.8M451.2 300.7l0.9 3.0M451.5 308.5l1.1 3.3M451.8 316.7l1.0 3.0M452.6 323.5l0.9 2.9M453.3 336.6l1.4 4.3M454.9 358.2l1.0 3.2M456.3 379.0l1.5 4.7M456.6 388.1l1.0 3.2M457.5 394.9l0.9 2.9M457.9 402.6l0.9 3.0M457.9 407.6l1.6 5.0M458.5 416.5l1.0 3.2M458.9 423.1l1.0 3.3M459.4 430.0l1.4 4.4M460.2 438.3l1.1 3.4M460.8 446.4l1.3 4.2M461.2 453.0l1.0 3.4M459.7 269.6l0.7 2.3M460.3 276.6l0.7 2.2M460.7 283.1l0.7 2.4M460.8 290.8l0.9 3.1M461.3 298.5l0.7 2.4M461.4 305.3l1.2 4.0M462.4 313.8l0.8 2.6M463.0 321.1l0.8 2.6M462.7 326.7l1.3 4.1M463.9 343.1l0.9 3.0M464.8 356.4l1.2 3.8M465.5 364.1l0.8 2.7M465.5 371.7l1.2 3.8M466.1 377.9l1.2 3.9M466.8 386.4l1.1 3.5M466.9 393.1l1.5 4.9M467.0 401.5l1.5 4.8M468.1 409.3l1.3 4.2M468.1 416.9l1.3 4.3M468.8 425.2l1.1 3.6M469.2 431.3l1.3 4.1M469.9 443.5l1.5 4.8M470.3 451.2l1.4 4.8M467.0 264.8l0.7 2.4M467.8 272.5l0.7 2.3M467.8 278.9l0.8 2.7M468.2 286.8l0.7 2.3M468.9 293.0l0.8 2.6M469.7 307.5l1.0 3.2M470.3 321.2l1.0 3.4M470.9 329.0l0.9 2.9M471.1 336.4l1.3 4.3M471.2 343.4l1.0 3.3M472.1 358.7l1.3 4.3M472.3 367.1l1.3 4.2M473.1 374.1l1.1 3.5M473.6 381.9l1.2 3.9M473.7 390.5l1.1 3.7M474.1 397.3l1.0 3.4M474.5 405.0l1.2 4.0M474.7 412.6l1.5 4.9M475.4 419.6l0.9 2.9M476.0 428.0l0.9 2.9M476.5 441.7l1.4 4.6M477.0 448.0l1.5 5.0M477.4 264.8l0.7 2.3M478.2 279.9l0.8 2.8M479.5 309.0l1.0 3.5M480.4 316.9l1.0 3.3M480.5 323.7l1.2 4.0M480.8 330.3l0.9 3.0M481.4 343.1l1.3 4.2M481.6 351.4l1.0 3.2M482.7 365.1l1.1 3.6M483.4 379.1l1.2 3.9M484.0 392.9l1.5 5.1M484.5 400.3l1.1 3.8M484.5 406.4l1.1 3.7M484.6 413.4l1.4 4.6M485.0 420.1l1.4 4.6M485.5 426.6l1.5 5.1M486.0 435.1l1.2 4.0M486.4 442.8l1.5 5.2M486.7 450.5l1.1 3.7M488.9 273.4l0.8 2.6M489.4 280.2l0.9 2.8M490.3 294.7l1.0 3.4M490.6 302.3l0.9 3.1M491.7 323.1l1.0 3.2M492.3 330.4l0.8 2.8M492.6 337.2l0.9 3.1M492.6 345.2l0.9 3.1M493.0 351.4l1.2 4.1M493.5 359.5l1.2 4.2M493.8 368.0l1.1 3.7M494.4 382.0l1.0 3.5M495.2 398.7l1.0 3.4M495.8 405.1l1.5 4.8M496.1 420.1l1.3 4.4M496.5 426.3l1.2 4.1M496.6 432.9l1.4 4.8M497.7 442.1l0.9 3.1M497.4 448.1l1.5 5.2M498.5 266.7l0.8 2.8M499.2 274.3l0.6 2.2M499.3 280.0l1.0 3.4M499.4 288.4l1.0 3.2M500.2 297.0l0.7 2.5M500.8 318.2l1.1 3.8M501.5 326.7l0.9 2.9M501.9 338.6l1.1 3.7M502.0 345.9l1.4 4.5M502.7 354.8l0.8 2.7M502.8 360.7l1.2 4.1M503.4 368.6l1.4 4.8M503.6 377.0l1.0 3.3M504.4 384.1l1.4 4.7M504.7 392.0l0.9 2.9M504.8 397.9l1.4 4.7M505.4 406.1l1.2 3.9M505.6 413.1l1.0 3.3M505.6 419.8l1.5 5.2M506.6 427.7l0.9 3.1M506.9 433.5l1.2 4.2M507.7 448.4l0.9 3.1M507.4 454.2l1.4 4.8" stroke="#ff6000" stroke-width="2.5" stroke-linecap="round" fill="none" opacity="0.45"/>
<path d="M104.1 354.0l0.0 0.3M105.2 361.9l0.1 0.7M105.9 366.4l0.1 0.8M106.0 371.1l0.1 0.8M108.4 388.4l0.1 0.7M109.2 397.4l0.1 0.8M109.8 402.1l0.0 0.4M110.4 410.2l0.1 0.6M110.8 414.4l0.1 0.9M111.8 418.9l0.0 0.2M112.0 422.5l0.0 0.3M113.1 430.8l0.0 0.2M114.0 439.6l0.0 0.3M114.7 444.1l0.0 0.2M114.6 448.0l0.1 0.5M115.1 451.9l0.1 0.6M113.7 280.9l0.1 0.5M113.7 284.7l0.1 0.5M114.1 288.6l0.0 0.2M114.6 292.8l0.0 0.2M115.6 301.5l0.0 0.4M118.2 322.1l0.1 0.5M118.8 326.7l0.1 0.5M119.9 339.3l0.0 0.4M121.4 352.4l0.1 0.5M121.9 356.6l0.0 0.4M123.1 365.1l0.1 0.6M123.2 369.0l0.1 0.5M123.7 373.6l0.0 0.4M125.0 382.1l0.0 0.3M125.8 390.9l0.1 0.8M127.2 399.8l0.1 0.6M128.8 416.2l0.1 0.5M129.0 420.6l0.1 0.4M129.9 424.4l0.1 0.7M130.5 433.1l0.1 0.7M131.4 437.7l0.1 0.5M131.5 442.3l0.0 0.4M132.1 446.2l0.1 0.7M132.8 450.5l0.0 0.3M132.9 455.1l0.0 0.5M127.6 266.9l0.0 0.4M127.8 271.7l0.0 0.4M128.3 275.7l0.1 0.6M129.6 287.8l0.0 0.3M132.0 308.9l0.0 0.2M132.8 317.5l0.1 0.7M133.8 325.4l0.1 0.7M134.7 329.7l0.1 0.6M135.7 337.8l0.1 0.7M136.7 351.3l0.1 0.7M137.2 355.2l0.1 0.8M138.9 371.7l0.1 0.5M139.9 376.5l0.0 0.2M140.7 384.8l0.0 0.3M141.1 389.0l0.0 0.3M141.9 393.0l0.0 0.4M142.2 397.7l0.1 0.5M143.5 406.9l0.1 0.5M144.8 419.1l0.1 0.6M144.8 422.8l0.1 0.8M145.3 426.8l0.1 0.9M145.7 430.9l0.1 0.7M146.3 435.4l0.1 0.6M147.2 440.0l0.1 0.6M147.2 444.3l0.0 0.3M148.1 448.3l0.1 0.8M148.3 452.7l0.0 0.3M146.7 283.8l0.0 0.4M147.4 287.9l0.1 0.6M148.4 296.3l0.1 0.4M150.0 313.2l0.1 0.7M151.1 322.1l0.0 0.2M151.5 325.8l0.0 0.2M152.1 329.9l0.1 0.5M153.6 346.8l0.1 0.5M154.8 354.9l0.1 0.7M155.1 359.4l0.1 0.6M155.9 363.8l0.0 0.2M156.3 367.6l0.1 0.5M159.5 393.7l0.1 0.5M160.1 401.0l0.1 0.6M160.4 405.5l0.1 0.7M161.1 410.2l0.1 0.8M161.7 414.5l0.1 0.8M162.0 419.3l0.1 0.6M162.6 423.2l0.1 0.7M163.1 428.2l0.0 0.2M163.7 432.0l0.0 0.3M164.2 435.9l0.0 0.3M164.5 439.6l0.1 0.5M166.3 291.7l0.1 0.6M166.9 300.8l0.0 0.2M167.8 305.4l0.1 0.5M168.7 314.5l0.0 0.2M169.8 326.3l0.0 0.4M170.7 330.2l0.1 0.5M171.6 338.8l0.0 0.3M172.8 348.1l0.0 0.3M172.8 352.4l0.0 0.3M174.3 361.1l0.1 0.6M174.2 364.9l0.0 0.2M175.2 368.9l0.0 0.3M175.5 372.6l0.1 0.7M175.9 377.1l0.0 0.2M176.4 381.6l0.1 0.8M177.1 386.3l0.1 0.5M177.2 390.8l0.0 0.4M177.8 394.8l0.1 0.9M179.1 403.6l0.0 0.2M179.8 412.0l0.1 0.8M180.0 416.0l0.1 0.6M180.5 420.4l0.0 0.3M182.3 433.9l0.1 0.7M182.9 438.7l0.1 0.5M183.8 447.2l0.0 0.4M184.1 451.9l0.0 0.3M184.5 455.8l0.0 0.6M182.1 264.4l0.0 0.3M185.2 290.3l0.0 0.4M185.5 295.0l0.0 0.4M185.7 298.6l0.1 0.6M186.6 306.5l0.1 0.5M188.0 318.4l0.0 0.2M188.5 322.3l0.0 0.4M189.9 330.6l0.0 0.4M190.8 342.9l0.0 0.4M193.8 367.4l0.1 0.6M194.9 376.9l0.0 0.2M195.4 384.2l0.0 0.3M196.0 388.3l0.0 0.4M196.8 392.6l0.1 0.6M197.7 401.1l0.1 0.6M198.1 404.8l0.1 0.8M198.9 413.0l0.0 0.4M200.0 422.0l0.1 0.6M200.3 426.1l0.0 0.3M200.6 430.5l0.1 0.9M201.3 434.7l0.0 0.3M202.5 443.1l0.0 0.3M202.4 446.5l0.1 0.7M203.5 455.0l0.1 0.7M197.9 262.0l0.0 0.3M198.3 265.8l0.0 0.2M199.4 278.4l0.0 0.3M200.8 290.9l0.1 0.5M203.4 311.4l0.1 0.7M206.7 340.2l0.1 0.7M209.6 365.8l0.1 0.7M209.9 370.0l0.1 0.7M213.1 395.5l0.0 0.3M213.5 399.6l0.0 0.3M213.8 403.4l0.0 0.2M214.6 411.4l0.1 0.6M215.2 415.1l0.1 0.6M215.7 419.7l0.1 0.7M216.8 431.8l0.1 0.9M217.7 436.2l0.1 0.8M218.2 440.4l0.1 0.5M219.4 452.4l0.1 0.7M213.7 263.0l0.1 0.6M213.7 267.3l0.0 0.3M214.6 271.8l0.0 0.4M214.8 275.9l0.0 0.2M215.6 284.3l0.0 0.3M217.6 300.4l0.0 0.4M218.2 305.0l0.1 0.6M220.7 325.4l0.0 0.3M221.1 329.4l0.0 0.4M221.2 334.1l0.1 0.5M222.8 343.0l0.1 0.5M223.8 356.4l0.1 0.6M224.3 360.8l0.0 0.3M226.3 376.9l0.0 0.4M227.6 389.9l0.1 0.5M228.7 397.9l0.1 0.8M229.2 402.8l0.1 0.7M229.7 406.6l0.1 0.5M230.7 415.6l0.0 0.3M231.0 419.2l0.1 0.7M231.9 427.0l0.0 0.4M232.8 435.5l0.1 0.5M233.5 439.1l0.0 0.4M233.6 443.7l0.1 0.6M234.5 447.8l0.0 0.2M235.0 455.5l0.0 0.5M231.4 267.7l0.0 0.4M233.2 284.8l0.0 0.2M235.4 301.2l0.1 0.6M235.7 305.1l0.0 0.2M236.5 309.9l0.0 0.2M236.9 317.8l0.0 0.2M238.2 325.6l0.0 0.4M239.9 342.4l0.1 0.7M241.6 358.9l0.0 0.3M242.7 367.0l0.1 0.5M243.9 380.3l0.0 0.3M244.6 384.6l0.1 0.5M245.0 388.7l0.1 0.5M245.6 392.9l0.0 0.3M246.8 404.4l0.1 0.8M247.3 409.2l0.1 0.8M247.7 413.2l0.0 0.3M248.3 417.5l0.0 0.4M249.0 421.5l0.0 0.3M249.1 426.0l0.1 0.6M249.9 430.7l0.1 0.5M251.0 439.9l0.1 0.7M252.0 448.4l0.1 0.7M252.7 456.7l0.0 0.5M245.1 262.0l0.0 0.3M245.1 266.6l0.1 0.5M248.7 295.1l0.1 0.6M249.2 302.5l0.0 0.4M251.8 322.8l0.1 0.5M255.6 354.6l0.1 0.5M256.0 359.2l0.0 0.4M256.0 363.2l0.1 0.8M256.7 367.9l0.1 0.7M257.1 372.7l0.0 0.3M257.8 376.9l0.1 0.5M258.9 386.0l0.1 0.5M259.4 390.3l0.1 0.6M259.5 394.3l0.1 0.8M260.5 403.3l0.0 0.2M261.3 407.5l0.1 0.5M262.1 416.7l0.1 0.5M262.8 420.7l0.1 0.7M263.4 425.7l0.0 0.3M264.2 434.3l0.1 0.8M265.2 442.5l0.1 0.8M266.4 451.0l0.0 0.4M266.3 455.5l0.0 0.3M264.2 269.6l0.0 0.4M266.2 286.9l0.1 0.5M267.1 295.3l0.1 0.5M267.8 303.3l0.1 0.6M269.5 315.5l0.1 0.6M270.2 320.1l0.1 0.7M271.3 332.2l0.1 0.6M272.0 340.9l0.0 0.2M273.1 349.2l0.0 0.2M274.7 361.4l0.1 0.7M275.0 366.1l0.1 0.8M275.6 370.6l0.1 0.7M276.0 375.0l0.0 0.3M276.8 379.1l0.0 0.3M277.6 388.0l0.1 0.5M277.7 391.6l0.1 0.7M278.2 395.9l0.1 0.8M279.2 400.8l0.0 0.3M279.4 405.4l0.0 0.3M280.3 409.4l0.1 0.5M280.9 417.1l0.0 0.4M281.3 421.2l0.1 0.6M281.7 424.9l0.0 0.4M282.8 433.1l0.1 0.5M283.2 436.9l0.1 0.7M283.8 444.9l0.1 0.6M284.7 452.7l0.0 0.4" stroke="#ff6000" stroke-width="2.4" stroke-linecap="round" fill="none" opacity="0.45"/>
<path d="M300.0 469.7l0.1 2.4M300.3 476.4l0.0 2.3M300.5 499.3l0.0 0.8M300.3 503.9l0.0 0.7M300.7 509.7l0.0 1.6M300.8 515.6l0.0 1.9M300.5 520.7l0.0 2.0M300.7 525.6l0.0 1.2M301.0 533.2l0.0 1.9M300.6 540.1l0.0 1.8M301.3 547.8l0.0 2.3M301.2 560.2l0.0 2.5M301.3 565.0l0.0 2.1M301.5 576.5l0.0 0.9M301.2 582.3l0.0 1.9M301.3 588.1l0.0 1.0M301.8 594.0l0.0 1.9M301.6 599.1l0.0 2.2M301.6 607.1l0.0 1.3M302.0 614.6l0.0 0.8M302.1 619.7l0.0 0.7M302.0 644.0l0.0 1.8M311.9 463.3l0.0 0.8M312.7 476.4l0.0 2.3M312.5 483.3l0.0 0.8M312.6 489.3l0.0 1.6M312.9 495.3l0.0 1.4M313.2 501.9l0.0 1.2M313.0 507.2l0.0 2.2M313.2 519.4l0.0 1.5M313.2 525.6l0.0 2.2M313.1 531.8l0.0 1.7M313.2 538.6l0.0 0.6M313.2 544.3l0.0 1.9M313.6 557.0l0.0 2.3M313.4 564.0l0.0 2.3M313.7 571.4l0.0 1.7M313.7 589.6l0.0 1.3M314.4 596.0l0.0 2.0M314.5 602.7l0.0 1.5M314.5 614.3l0.0 1.9M314.2 621.3l0.0 1.2M325.4 467.5l0.0 0.8M325.5 471.7l0.1 2.5M326.0 479.7l0.0 1.5M325.9 487.1l0.0 0.8M325.8 491.8l0.0 2.4M326.1 498.6l0.0 2.4M326.2 504.8l0.0 1.8M326.5 535.5l0.0 0.7M326.2 542.7l0.0 0.7M326.4 547.2l0.0 1.4M326.6 554.5l0.0 2.1M326.5 566.5l0.0 0.7M326.7 580.2l0.0 2.0M327.1 586.8l0.0 2.1M327.2 593.9l0.0 0.6M327.4 600.0l0.0 1.7M327.4 605.6l0.0 2.1M327.3 612.0l0.0 2.4M327.0 617.2l0.0 1.2M327.2 627.3l0.0 2.1M327.9 635.1l0.0 1.8M327.9 640.7l0.0 1.9M327.5 652.7l0.0 1.3M344.8 464.7l0.0 0.8M345.0 470.7l0.1 2.3M344.7 476.8l0.0 1.8M345.2 483.6l0.0 1.1M345.0 489.2l0.0 1.9M345.4 494.4l0.0 1.2M345.3 511.0l0.0 1.9M345.5 525.8l0.0 0.9M345.7 532.0l0.0 1.0M345.9 538.4l0.0 1.3M346.0 543.5l0.0 2.0M345.8 558.5l0.0 1.5M346.2 563.7l0.0 1.5M346.0 568.4l0.0 2.0M346.2 581.5l0.0 2.1M346.5 588.6l0.0 1.0M346.7 608.6l0.0 1.1M346.8 615.9l0.0 1.3M346.7 627.3l0.0 2.1M357.2 464.8l0.1 2.5M357.9 470.9l0.0 0.7M358.3 477.2l0.0 1.7M358.2 484.7l0.0 1.7M358.0 492.2l0.0 1.9M358.1 499.4l0.0 0.9M358.5 505.2l0.0 1.6M358.4 512.0l0.0 1.7M358.2 518.4l0.0 2.0M358.7 529.9l0.0 2.1M358.4 534.7l0.0 2.3M358.8 542.7l0.0 2.1M358.6 547.7l0.0 2.3M359.1 554.1l0.0 0.7M359.1 566.1l0.0 0.7M358.9 570.8l0.0 1.6M359.0 577.9l0.0 1.2M359.1 584.4l0.0 0.9M359.5 591.2l0.0 2.4M359.5 598.0l0.0 2.0M359.5 605.5l0.0 1.2M359.5 617.0l0.0 0.7M359.7 622.0l0.0 1.1M359.6 626.8l0.0 2.1M359.8 634.7l0.0 2.2M359.9 642.6l0.0 2.2M369.3 461.6l0.1 2.1M370.0 485.2l0.0 0.9M370.1 489.8l0.0 1.4M370.6 497.1l0.0 0.9M370.6 510.8l0.0 1.9M370.9 523.6l0.0 1.6M370.7 529.2l0.0 1.7M370.8 544.9l0.0 1.0M371.1 550.6l0.0 1.7M371.2 556.6l0.0 1.9M371.1 565.1l0.0 0.7M371.6 570.0l0.0 2.1M371.3 574.8l0.0 2.4M371.6 582.0l0.0 1.0M371.3 589.2l0.0 1.3M371.6 595.5l0.0 1.0M371.8 602.1l0.0 1.2M371.7 606.5l0.0 1.6M371.7 612.9l0.0 1.9M372.0 623.3l0.0 1.0M372.2 629.5l0.0 2.1M372.3 643.0l0.0 0.9M382.4 464.6l0.1 1.9M382.9 472.0l0.0 0.7M382.9 478.8l0.0 2.4M383.0 491.8l0.0 1.5M383.4 498.2l0.0 0.8M383.7 511.8l0.0 1.1M383.3 516.5l0.0 2.1M383.4 523.9l0.0 1.3M383.7 529.5l0.0 1.7M384.1 534.9l0.0 0.6M383.7 542.2l0.0 1.3M384.1 549.0l0.0 1.6M384.1 556.7l0.0 1.8M384.2 563.0l0.0 0.9M384.1 568.7l0.0 1.3M384.5 588.5l0.0 2.3M384.4 593.0l0.0 2.2M384.3 598.7l0.0 1.7M384.6 604.3l0.0 0.9M384.8 609.2l0.0 1.4M384.6 616.1l0.0 1.5M384.9 623.5l0.0 2.5M385.0 639.6l0.0 1.4M385.2 646.5l0.0 2.3M397.4 465.2l0.1 1.4M397.6 470.8l0.1 2.5M397.6 476.9l0.0 0.9M397.7 481.5l0.0 1.3M398.1 489.3l0.0 0.9M398.0 495.9l0.0 1.0M398.1 501.2l0.0 1.5M398.0 506.9l0.0 2.5M398.0 513.3l0.0 2.5M398.0 518.5l0.0 1.6M398.2 528.3l0.0 2.4M398.1 540.4l0.0 0.8M398.7 545.2l0.0 1.5M398.8 553.0l0.0 1.4M398.9 557.8l0.0 1.5M398.8 562.9l0.0 2.2M398.9 570.4l0.0 0.7M399.2 577.5l0.0 0.9M399.2 584.5l0.0 2.4M398.9 592.7l0.0 1.6M399.2 598.2l0.0 1.8M399.2 604.7l0.0 2.2M399.5 612.7l0.0 1.8M399.2 620.5l0.0 1.0M399.5 632.4l0.0 1.6M399.6 645.3l0.0 0.9M411.8 463.3l0.1 1.0M412.4 475.9l0.0 2.4M412.4 481.7l0.0 0.7M412.3 488.2l0.0 1.5M412.5 493.7l0.0 1.4M412.6 501.0l0.0 1.7M413.0 506.3l0.0 1.2M412.7 513.6l0.0 1.5M413.0 519.2l0.0 1.4M412.9 525.6l0.0 1.5M413.3 530.0l0.0 2.0M412.9 537.8l0.0 1.1M413.0 553.0l0.0 0.7M413.6 559.7l0.0 1.0M413.2 566.9l0.0 2.3M413.6 572.7l0.0 0.7M413.9 585.4l0.0 1.4M413.5 591.1l0.0 1.2M414.1 595.9l0.0 1.8M413.9 600.9l0.0 1.6M414.2 607.3l0.0 2.1M414.4 620.9l0.0 1.0M414.6 639.6l0.0 1.3M414.6 644.1l0.0 2.0M424.1 462.3l0.1 1.9M424.4 468.3l0.1 1.9M424.5 473.3l0.1 2.3M424.9 478.8l0.0 2.3M424.5 486.4l0.0 2.3M424.9 495.0l0.0 0.7M425.2 502.4l0.0 1.0M425.2 508.3l0.0 1.5M425.1 515.5l0.0 1.8M425.2 523.0l0.0 1.4M425.1 538.2l0.0 2.1M425.4 544.3l0.0 0.7M425.3 550.7l0.0 0.6M425.5 555.1l0.0 1.1M426.0 560.1l0.0 2.0M425.7 574.8l0.0 1.6M426.1 582.6l0.0 1.0M426.3 586.9l0.0 2.5M426.5 609.0l0.0 1.2M426.6 613.2l0.0 2.2M426.2 618.6l0.0 2.4M426.7 632.5l0.0 2.3M426.5 647.8l0.0 2.3M434.5 464.5l0.1 2.0M434.8 479.4l0.0 1.6M434.9 484.0l0.0 1.8M435.2 488.3l0.0 2.4M435.5 496.4l0.0 1.9M435.3 504.3l0.0 1.4M435.8 518.8l0.0 0.9M435.4 523.1l0.0 2.4M435.7 528.4l0.0 2.2M435.6 536.7l0.0 1.0M435.9 544.5l0.0 1.3M436.2 562.8l0.0 2.2M436.3 582.6l0.0 1.4M436.4 592.0l0.0 2.4M436.7 605.9l0.0 1.6M436.5 612.6l0.0 1.1M436.7 618.6l0.0 1.2M436.8 623.7l0.0 1.2M436.8 637.9l0.0 1.4M447.9 465.3l0.1 1.8M448.0 473.2l0.0 0.9M448.7 486.2l0.0 0.7M448.8 490.4l0.0 1.3M448.8 495.0l0.0 2.2M449.0 507.4l0.0 2.2M449.1 514.5l0.0 2.4M449.2 520.8l0.0 1.2M448.7 526.3l0.0 1.4M449.2 537.5l0.0 2.2M449.1 545.7l0.0 1.3M449.0 550.6l0.0 0.9M449.4 555.1l0.0 1.1M449.3 562.5l0.0 1.8M449.7 567.4l0.0 2.4M449.7 581.9l0.0 0.9M449.6 588.8l0.0 2.1M449.7 595.0l0.0 2.1M449.7 601.5l0.0 1.8M450.1 607.1l0.0 1.0M450.2 619.9l0.0 1.7M450.2 625.3l0.0 0.8M450.4 645.1l0.0 1.1M450.5 651.7l0.0 2.5M458.4 465.3l0.1 2.2M458.5 480.4l0.0 1.5M458.7 488.2l0.0 1.5M458.9 495.4l0.0 0.9M459.1 502.7l0.0 1.3M459.3 522.2l0.0 0.6M459.6 527.4l0.0 2.1M459.2 533.3l0.0 0.9M459.3 540.1l0.0 2.4M459.9 546.2l0.0 2.5M459.4 552.0l0.0 1.3M460.0 558.5l0.0 2.2M460.1 566.7l0.0 1.1M460.1 573.9l0.0 0.8M460.3 585.7l0.0 1.5M460.1 591.6l0.0 2.1M460.2 605.5l0.0 2.1M460.5 610.7l0.0 1.9M460.7 628.1l0.0 2.2M467.5 464.9l0.0 0.9M467.9 471.3l0.0 1.6M467.8 476.6l0.0 2.3M468.3 489.3l0.0 1.2M468.3 494.1l0.0 1.7M468.4 500.7l0.0 1.6M468.3 508.5l0.0 1.1M468.5 519.5l0.0 2.1M468.8 526.7l0.0 1.4M468.6 532.0l0.0 1.8M468.9 536.8l0.0 1.6M468.6 543.3l0.0 1.3M468.8 558.0l0.0 1.0M469.0 562.3l0.0 1.5M469.3 577.0l0.0 0.8M469.4 584.2l0.0 1.7M469.7 603.9l0.0 1.4M469.8 611.5l0.0 1.2M469.9 619.0l0.0 0.8M469.6 628.7l0.0 1.9M469.9 634.0l0.0 0.6M474.7 467.8l0.0 1.3M475.0 474.2l0.0 0.9M474.6 481.1l0.0 1.6M475.0 485.5l0.0 2.4M474.9 491.6l0.0 0.8M475.1 503.6l0.0 1.6M474.9 508.2l0.0 2.4M475.2 514.4l0.0 1.1M475.4 520.8l0.0 0.7M475.4 531.8l0.0 1.4M475.2 536.7l0.0 0.8M475.7 542.9l0.0 2.5M475.7 547.6l0.0 2.5M475.8 561.1l0.0 0.8M475.7 566.6l0.0 1.3M475.9 572.0l0.0 2.4M475.9 583.6l0.0 2.5M476.1 598.2l0.0 1.9M476.0 603.5l0.0 1.7M476.7 611.6l0.0 1.1M476.3 617.0l0.0 0.7M476.8 626.6l0.0 1.5M476.5 633.8l0.0 2.4M477.0 642.1l0.0 1.6M477.0 647.1l0.0 1.6M483.8 464.4l0.1 2.2M484.1 472.2l0.0 2.5M484.3 479.1l0.0 2.0M484.5 485.9l0.0 2.1M484.6 492.1l0.0 0.8M484.5 499.4l0.0 1.4M484.6 506.8l0.0 2.4M484.8 513.8l0.0 1.5M484.8 521.7l0.0 0.8M485.0 527.3l0.0 1.8M484.8 534.1l0.0 2.3M485.4 541.5l0.0 1.0M485.5 547.6l0.0 2.4M485.3 566.9l0.0 0.9M485.4 571.7l0.0 0.7M485.5 576.5l0.0 2.1M485.6 581.8l0.0 1.4M485.7 587.1l0.0 1.8M486.0 608.1l0.0 2.2M485.7 613.4l0.0 2.4M486.1 619.5l0.0 0.9M485.9 625.9l0.0 1.5M495.2 469.7l0.0 1.5M495.8 477.3l0.0 1.6M495.7 484.6l0.0 1.7M495.9 492.7l0.0 1.5M495.8 500.2l0.0 1.1M496.0 513.2l0.0 1.9M496.1 526.8l0.0 1.1M496.3 534.0l0.0 1.1M496.4 540.2l0.0 0.7M496.4 545.7l0.0 2.3M496.7 551.7l0.0 2.0M496.8 558.8l0.0 2.3M496.8 570.3l0.0 2.3M497.1 583.3l0.0 2.4M497.1 590.4l0.0 0.7M496.8 597.0l0.0 2.3M497.4 603.5l0.0 1.2M497.0 611.1l0.0 1.1M497.1 624.9l0.0 1.6M497.6 629.3l0.0 2.0M497.2 637.1l0.0 2.3M504.9 464.7l0.0 1.6M505.0 469.5l0.1 2.4M505.4 485.1l0.0 1.2M505.3 490.3l0.0 2.2M505.1 496.8l0.0 2.4M505.5 509.0l0.0 1.6M505.9 524.0l0.0 1.6M505.6 531.3l0.0 0.7M506.0 536.7l0.0 2.1M505.7 544.2l0.0 2.3M505.8 549.5l0.0 1.5M505.9 556.7l0.0 2.0M506.3 562.6l0.0 1.1M506.3 569.2l0.0 2.2M506.4 576.3l0.0 2.0M506.7 588.7l0.0 1.5M506.7 601.7l0.0 1.5M507.0 607.3l0.0 2.5M506.7 615.4l0.0 1.3M506.8 621.3l0.0 0.8M507.3 632.2l0.0 2.4M506.9 638.5l0.0 1.2M507.0 644.2l0.0 0.7M507.0 650.0l0.0 2.0" stroke="#ff6000" stroke-width="2.3" stroke-linecap="round" fill="none" opacity="0.45"/>
<path d="M120.1 459.0l0.7 12.4M120.5 470.6l0.3 16.3M121.2 495.2l0.1 6.1M121.0 502.9l0.1 8.8M121.1 514.4l0.1 6.8M121.4 520.9l0.1 11.5M121.5 532.7l0.2 16.5M121.3 550.1l0.2 19.0M122.3 602.9l0.2 16.0M138.4 479.4l0.1 10.9M138.6 493.7l0.1 10.4M138.6 517.3l0.2 18.1M139.1 541.6l0.1 12.2M138.9 557.3l0.1 7.8M139.6 581.7l0.1 12.1M139.5 598.1l0.1 7.0M139.9 618.7l0.1 12.0M153.2 461.1l0.4 7.1M153.7 489.6l0.2 12.8M154.5 523.8l0.2 14.1M154.6 540.4l0.1 11.4M154.6 553.8l0.2 14.4M155.0 571.5l0.2 13.3M155.0 586.8l0.2 13.8M171.4 479.2l0.1 7.8M171.5 485.8l0.2 12.5M171.5 501.4l0.1 9.0M171.9 520.2l0.2 13.8M172.3 559.1l0.2 12.7M172.2 575.6l0.1 12.3M173.1 611.1l0.2 15.3M188.6 457.8l0.7 11.1M189.7 470.8l0.3 12.3M189.9 486.9l0.1 9.9M190.1 517.6l0.1 9.9M190.6 527.8l0.2 17.3M190.5 551.1l0.1 7.6M191.1 583.2l0.1 8.4M191.2 592.1l0.1 11.0M191.5 621.5l0.1 6.3M207.7 457.0l0.8 14.8M208.5 476.7l0.1 11.6M209.5 529.8l0.2 13.0M209.4 544.7l0.1 12.2M209.6 559.1l0.1 10.4M210.4 621.3l0.1 12.1M224.1 458.5l0.7 12.6M224.5 469.6l0.3 18.2M224.9 496.5l0.1 8.0M224.9 503.4l0.2 17.3M225.2 544.0l0.2 16.8M239.5 456.9l1.0 20.0M240.0 485.0l0.1 8.0M240.2 488.9l0.2 18.7M241.0 523.7l0.2 16.7M240.9 548.2l0.1 6.7M242.1 618.5l0.1 8.9M257.1 466.8l0.4 14.3M257.9 483.6l0.2 13.1M257.7 498.4l0.2 14.2M258.2 517.9l0.1 7.1M258.9 562.1l0.1 7.5M258.6 576.7l0.2 19.5M259.1 601.6l0.1 12.2M259.2 631.6l0.1 12.3M271.8 480.9l0.1 9.1M272.0 492.8l0.1 10.9M272.1 504.4l0.2 16.7M272.3 524.6l0.2 12.9M272.4 542.6l0.1 9.8M272.4 552.1l0.2 14.8M272.5 566.8l0.2 17.7M273.1 585.7l0.2 19.1M273.5 609.5l0.2 13.4M290.4 480.9l0.1 6.5M290.4 506.2l0.1 10.1M290.8 515.7l0.2 14.6M291.0 541.0l0.2 19.6M291.2 564.4l0.2 19.8M291.5 606.9l0.2 13.2M292.2 633.7l0.2 13.3M303.1 463.6l0.3 6.9M303.4 468.5l0.3 18.5M304.0 492.5l0.1 10.2M303.9 504.4l0.1 10.7M304.4 526.0l0.1 12.5M304.5 536.9l0.2 19.3M304.5 561.7l0.1 10.9M305.2 575.5l0.1 11.7M305.3 587.1l0.2 19.1M305.4 628.9l0.1 10.3M315.7 466.2l0.5 17.2M316.2 488.3l0.2 13.4M316.8 503.8l0.2 17.0M317.1 522.9l0.2 19.8M317.4 595.6l0.1 11.2M318.2 625.3l0.1 8.0M328.6 461.2l0.6 12.1M329.2 475.6l0.2 12.7M329.5 506.4l0.1 11.0M329.5 517.0l0.2 15.8M330.1 538.9l0.1 6.9M329.8 546.5l0.1 7.8M330.0 553.3l0.2 13.7M330.3 569.4l0.2 15.0M330.8 590.1l0.1 9.1M330.7 601.4l0.1 6.9M330.9 620.3l0.1 8.8M331.1 632.8l0.1 7.2M331.4 637.2l0.2 15.1M348.4 472.2l0.2 18.9M348.6 500.9l0.1 7.3M349.1 509.9l0.1 9.3M349.0 521.5l0.1 10.2M349.5 532.8l0.2 15.5M349.6 551.8l0.2 14.1M349.5 567.7l0.2 16.4M350.3 592.8l0.1 6.7M350.3 600.1l0.1 10.4M350.1 612.8l0.2 13.1M350.7 629.7l0.1 12.4M361.1 468.0l0.4 15.9M361.9 484.2l0.2 19.8M362.2 507.3l0.2 18.2M362.1 534.7l0.1 6.2M362.3 541.2l0.1 12.3M362.4 552.6l0.2 19.8M362.6 576.1l0.2 15.1M363.0 616.8l0.1 8.1M363.7 633.4l0.2 15.2M373.2 461.3l0.4 7.4M373.7 464.6l0.6 18.5M374.1 487.5l0.2 16.2M374.5 523.4l0.2 15.4M374.7 544.3l0.1 7.2M375.1 563.9l0.1 11.8M375.3 576.0l0.2 16.9M375.4 612.1l0.2 15.4M386.2 460.1l0.4 7.6M386.2 468.3l0.3 9.3M386.4 478.7l0.1 12.4M387.3 514.5l0.2 15.1M387.3 537.9l0.1 6.1M387.6 547.1l0.1 7.9M387.3 553.5l0.2 15.6M388.3 617.9l0.2 19.7M388.6 641.3l0.2 17.8M400.2 455.4l0.9 14.8M401.5 476.0l0.1 9.8M401.6 483.0l0.2 19.6M401.4 510.5l0.1 7.4M401.8 515.3l0.2 18.0M402.0 546.5l0.2 17.1M402.2 567.9l0.1 12.2M403.0 599.1l0.1 9.3M403.1 610.6l0.1 8.7M415.8 473.7l0.2 14.6M416.1 494.0l0.1 6.6M416.3 497.3l0.2 19.4M416.7 523.8l0.1 8.0M416.7 534.2l0.1 9.9M416.5 544.8l0.2 12.7M417.0 559.2l0.2 12.7M417.0 576.2l0.1 9.3M417.6 589.0l0.1 6.2M417.6 626.8l0.1 6.7M428.5 478.6l0.2 17.4M428.6 500.0l0.2 14.5M428.8 515.6l0.2 17.5M429.2 534.6l0.2 19.0M429.1 558.6l0.2 15.9M429.2 577.0l0.2 18.4M429.5 598.6l0.2 14.7M437.7 457.4l0.7 16.9M439.0 502.5l0.1 10.8M438.9 511.8l0.2 17.4M439.2 544.6l0.2 18.1M439.9 566.3l0.2 15.4M439.9 588.6l0.1 7.0M440.2 608.4l0.1 11.1M440.5 622.0l0.1 10.5M440.8 632.6l0.2 17.7M451.4 462.3l0.4 12.7M452.3 490.3l0.1 6.8M452.0 495.1l0.2 16.4M452.5 518.2l0.1 7.4M452.9 540.9l0.1 9.5M453.0 551.0l0.1 11.4M452.8 563.3l0.2 14.5M453.6 596.2l0.1 7.6M453.7 605.0l0.2 12.9M462.5 474.2l0.1 11.7M462.7 483.8l0.2 18.5M462.9 505.5l0.2 18.2M463.0 526.4l0.2 15.1M463.1 545.6l0.2 15.0M463.4 563.8l0.2 14.3M463.4 578.9l0.2 16.7M464.1 621.7l0.2 12.8M464.0 635.2l0.2 17.1M471.2 461.8l0.4 14.5M471.5 477.3l0.2 18.6M472.1 500.4l0.2 14.0M472.2 514.3l0.2 16.7M472.1 535.9l0.1 9.7M472.6 550.0l0.1 8.1M472.9 553.6l0.2 19.8M472.6 581.2l0.1 11.5M473.1 594.0l0.2 13.7M473.4 608.6l0.2 17.9M477.6 454.6l0.6 19.7M478.4 478.8l0.2 15.5M478.4 495.6l0.2 16.1M478.5 512.4l0.2 17.0M478.8 532.7l0.2 12.7M479.4 545.4l0.2 16.1M479.2 566.5l0.2 13.5M479.9 620.6l0.1 11.2M480.1 633.2l0.2 13.0M487.7 456.8l0.5 19.0M488.3 482.0l0.1 8.8M488.4 491.6l0.1 9.4M488.1 503.3l0.1 10.2M488.4 512.7l0.2 14.5M488.4 531.4l0.1 12.4M488.5 545.9l0.2 16.0M488.8 563.7l0.2 15.7M489.1 584.3l0.2 12.5M489.3 599.9l0.2 13.2M489.5 615.0l0.1 12.5M489.7 626.3l0.2 18.4M498.5 458.4l0.4 12.8M498.9 472.0l0.2 16.4M499.1 494.8l0.1 11.5M499.2 507.8l0.2 16.5M499.7 531.1l0.1 6.6M499.8 535.7l0.2 16.0M500.5 582.7l0.1 10.0M500.8 596.5l0.1 7.0M500.9 605.7l0.1 8.2M501.1 627.4l0.1 8.0M501.1 632.4l0.2 18.7M508.1 458.4l0.3 10.7M508.9 472.8l0.1 7.4M508.6 477.3l0.2 16.0M509.0 513.4l0.1 9.9M509.3 521.6l0.2 19.5M509.4 548.5l0.1 8.2M509.8 559.4l0.1 9.8M510.1 569.6l0.2 15.2M510.3 590.6l0.1 6.8M510.6 610.3l0.2 15.3M510.3 631.0l0.1 9.0" stroke="#ff6000" stroke-width="2.1" stroke-linecap="round" fill="none" opacity="0.45"/>
<path d="M519.2 657.1l0.0 1.0M519.7 664.5l0.0 1.2M516.3 254.4l0.7 3.7M537.3 647.3l0.0 2.0M537.0 654.5l0.0 1.2M531.3 255.0l0.8 3.9M544.6 650.1l0.0 1.5M544.7 656.5l0.0 1.7M552.4 649.4l0.0 1.5M552.5 655.6l0.0 2.0M550.7 256.4l0.6 2.9M551.7 273.1l0.6 3.0M563.4 654.8l0.0 2.0M558.7 259.1l0.7 3.6M559.3 271.1l0.8 4.0M571.6 648.6l0.0 1.3M571.5 655.6l0.0 1.2M567.5 257.7l0.9 4.3M568.4 271.8l0.8 3.8M580.3 647.7l0.0 0.9M580.6 653.9l0.0 1.5M577.1 258.8l0.7 3.5M578.5 285.1l0.8 3.9M588.9 606.4l0.0 2.2M589.4 645.8l0.0 0.9M585.5 256.9l0.6 2.8M587.3 287.1l0.6 2.9M588.1 312.0l0.7 3.3M597.8 611.3l0.0 1.4M598.1 636.9l0.0 1.1M593.3 272.2l0.7 3.4M605.1 590.5l0.0 1.8M605.3 622.7l0.0 1.2M605.3 628.5l0.0 1.5M605.3 633.6l0.0 1.1M605.7 638.0l0.0 2.1M602.0 301.1l0.5 2.6M612.8 653.2l0.0 0.9M610.3 270.8l0.8 3.8M612.5 319.1l0.6 2.8M621.4 596.0l0.0 1.3M621.6 617.6l0.0 0.9M622.2 628.9l0.0 2.0M621.9 634.3l0.0 1.3M622.3 644.7l0.0 1.4M617.5 270.3l0.6 2.9M617.9 284.1l0.9 4.3M618.9 297.0l0.8 3.8M628.6 585.3l0.0 1.8M629.2 601.0l0.0 0.9M629.1 620.8l0.0 1.2M629.1 626.8l0.0 0.9M629.2 631.6l0.0 1.7M629.4 636.3l0.0 1.6M629.8 641.3l0.0 1.2M629.8 646.6l0.0 1.0M628.2 297.9l0.6 2.9M628.9 310.8l0.5 2.6M629.6 323.0l0.5 2.5M638.4 571.7l0.0 1.4M638.3 597.4l0.0 1.0M638.3 608.1l0.0 1.7M638.7 622.7l0.0 1.7M639.1 627.3l0.0 2.1M639.3 638.2l0.0 1.6M639.0 643.2l0.0 2.0M634.6 273.9l0.8 3.8M636.1 298.8l0.6 3.1M636.5 311.9l0.8 4.1M639.6 363.9l0.5 2.7M645.8 591.1l0.0 1.2M646.2 616.3l0.0 1.5M646.5 621.3l0.0 1.3M646.4 626.8l0.0 0.8M646.5 632.1l0.0 1.2M646.6 637.8l0.0 1.0M643.7 289.5l0.9 4.3M644.7 317.1l0.7 3.7M645.6 332.6l0.7 3.6M648.0 380.9l0.7 3.5M648.9 392.0l0.6 3.0M653.7 554.2l0.0 1.1M653.8 574.1l0.0 2.0M654.2 600.6l0.0 1.8M654.0 611.0l0.0 1.7M654.2 615.7l0.0 1.7M654.5 621.1l0.0 0.8M654.2 625.4l0.0 1.3M654.5 630.4l0.0 2.2M654.2 635.5l0.0 2.1M654.8 641.5l0.0 1.7M651.0 284.0l0.8 4.0M651.6 299.7l0.6 3.2M652.3 313.7l0.7 3.7M654.2 352.2l0.5 2.7M656.6 395.7l0.6 3.0M660.9 548.2l0.0 0.8M661.7 600.5l0.0 0.9M661.8 605.9l0.0 1.7M662.4 627.1l0.0 1.9M662.0 633.3l0.0 1.3M662.1 637.6l0.0 1.9M658.6 272.1l0.7 3.7M659.2 283.9l0.7 3.5M659.9 298.8l0.6 2.8M660.5 313.8l0.9 4.4M663.0 367.1l0.8 4.0M663.8 378.1l0.5 2.6M665.1 410.8l0.7 3.6M668.9 534.3l0.0 1.6M669.4 555.2l0.0 2.0M670.0 605.7l0.0 1.1M669.8 610.4l0.0 1.2M670.1 615.4l0.0 1.4M670.3 621.6l0.0 1.0M670.4 627.1l0.0 1.8M670.2 647.8l0.0 1.6M666.3 283.0l0.7 3.4M667.5 298.5l0.6 3.1M667.9 312.7l0.6 3.1M668.8 326.9l0.6 3.1M671.0 365.3l0.7 3.4M675.6 462.9l0.0 1.3M676.4 529.3l0.0 2.2M676.5 534.9l0.0 2.0M677.0 564.6l0.0 1.0M677.5 580.2l0.0 1.6M677.1 585.0l0.0 1.1M677.2 589.2l0.0 1.8M677.2 594.0l0.0 2.0M677.7 605.3l0.0 0.9M677.6 611.1l0.0 1.2M677.5 627.7l0.0 1.1M678.1 632.6l0.0 1.6M677.7 637.7l0.0 1.8M677.8 642.4l0.0 2.0M674.5 287.6l0.5 2.7M675.6 299.5l0.8 4.2M677.2 330.1l0.6 3.2" stroke="#ff3c00" stroke-width="1.5" stroke-linecap="round" fill="none"/>
<path d="M119.0 656.7l0.0 3.5M136.4 657.5l0.0 3.0M151.9 656.2l0.0 3.6M238.5 655.3l0.0 2.0" stroke="#ff3c00" stroke-width="1.4" stroke-linecap="round" fill="none"/>
<path d="M302.6 667.2l0.0 2.2M347.3 666.2l0.0 0.7M399.8 658.7l0.0 1.3M414.6 663.5l0.0 0.8M437.1 653.3l0.0 1.4M476.8 664.4l0.0 1.0M486.5 658.1l0.0 1.8M497.9 660.8l0.0 2.4" stroke="#ff3c00" stroke-width="1.1" stroke-linecap="round" fill="none"/>
<path d="M173.5 653.7l0.2 18.8M211.1 659.3l0.1 11.3M226.8 664.1l0.1 9.1M274.0 650.2l0.1 8.9M331.6 656.4l0.2 12.5M363.9 651.2l0.2 13.1M464.3 655.4l0.2 15.2" stroke="#ff3c00" stroke-width="0.9" stroke-linecap="round" fill="none"/>
<path d="M115.1 531.8l0.1 6.0M115.2 583.9l0.1 9.3M115.3 597.8l0.0 4.0M115.9 611.7l0.1 7.6M116.2 623.8l0.1 4.9M116.2 630.2l0.1 6.1M116.2 639.6l0.1 5.1M131.9 502.2l0.1 6.8M132.7 543.1l0.1 8.3M132.5 563.4l0.1 10.0M132.9 579.4l0.1 4.8M132.8 586.2l0.1 5.8M133.3 621.6l0.1 11.2M133.7 636.1l0.1 10.5M147.1 473.5l0.1 6.7M147.8 511.9l0.1 8.0M148.1 560.1l0.1 4.3M148.5 603.8l0.1 9.7M149.0 615.2l0.1 9.0M149.3 628.9l0.1 5.1M149.0 637.4l0.1 4.7M149.0 643.6l0.1 6.4M164.4 477.0l0.1 4.3M164.7 498.7l0.1 5.1M165.0 513.2l0.1 6.9M165.4 533.2l0.1 6.7M165.7 559.8l0.1 6.7M165.8 592.9l0.1 9.6M166.3 616.2l0.1 6.9M166.4 640.2l0.1 5.1M182.7 467.5l0.3 8.8M183.6 504.2l0.1 7.0M184.5 573.4l0.1 6.3M184.7 579.2l0.1 9.3M184.6 590.6l0.1 9.2M184.4 604.4l0.1 7.1M184.9 624.7l0.1 10.1M184.9 637.4l0.1 9.4M202.2 493.8l0.1 11.4M202.9 532.6l0.1 8.5M203.1 576.0l0.1 4.2M203.6 616.5l0.1 11.2M203.7 630.0l0.1 9.5M218.2 495.4l0.1 4.5M218.8 517.2l0.1 9.4M219.1 540.9l0.1 10.9M219.5 569.1l0.1 5.2M219.4 591.8l0.1 4.7M220.0 616.7l0.1 4.7M219.8 623.1l0.1 8.7M220.0 634.1l0.1 10.1M234.6 553.4l0.1 10.1M234.6 564.7l0.1 12.0M235.1 591.2l0.1 8.8M235.1 616.4l0.1 8.6M235.5 626.7l0.1 8.3M235.4 637.4l0.1 6.5M236.0 644.4l0.1 11.3M251.2 486.5l0.1 9.6M251.6 531.4l0.1 8.6M252.3 583.5l0.1 9.7M252.5 597.2l0.1 5.7M252.8 606.5l0.1 4.2M252.8 612.0l0.1 8.9M252.9 641.3l0.1 9.3M265.1 471.9l0.2 9.6M265.3 498.1l0.1 11.6M265.9 536.0l0.1 10.2M266.6 593.9l0.1 8.9M266.9 603.2l0.1 11.7M266.7 617.9l0.1 10.2M267.1 631.7l0.1 5.0M284.1 498.4l0.1 7.4M284.7 566.3l0.1 10.2M285.8 631.7l0.1 4.3M285.3 638.1l0.1 4.5M520.5 521.1l0.1 9.0M521.2 575.4l0.1 5.0M521.0 582.9l0.1 6.6M521.3 612.0l0.1 11.9M521.6 627.5l0.1 7.4M521.7 636.4l0.1 7.4M529.6 470.3l0.1 4.4M530.4 498.2l0.1 9.2M530.6 530.6l0.1 8.0M530.8 555.3l0.1 5.4M531.0 569.3l0.1 8.5M531.1 580.0l0.1 9.9M531.1 592.7l0.1 11.1M531.7 616.0l0.1 9.2M531.4 627.9l0.1 11.2M537.7 491.9l0.1 11.7M538.0 520.3l0.1 6.0M538.0 527.7l0.1 9.2M538.1 539.7l0.1 9.5M538.7 596.4l0.1 6.4M544.5 464.4l0.2 8.3M545.0 492.5l0.1 8.8M545.4 535.5l0.1 4.4M545.5 543.2l0.1 4.8M545.8 548.9l0.1 9.6M545.6 563.9l0.0 4.0M546.0 568.8l0.1 7.7M546.1 579.0l0.1 6.2M545.9 589.1l0.1 5.7M546.2 594.4l0.1 9.9M553.2 495.2l0.1 7.0M553.2 506.3l0.1 4.6M553.7 520.4l0.1 4.5M553.5 528.9l0.1 11.8M553.9 544.9l0.1 6.1M554.2 555.3l0.1 4.9M554.1 569.2l0.1 9.3M554.6 601.3l0.1 11.1M563.3 462.1l0.2 6.0M564.2 489.6l0.1 7.2M564.3 498.1l0.1 9.6M564.3 512.9l0.1 7.2M564.1 521.8l0.1 8.7M565.1 572.8l0.1 11.5M571.8 459.5l0.3 10.0M571.8 473.6l0.1 8.2M572.6 519.5l0.1 5.4M572.9 524.6l0.1 8.7M572.8 537.4l0.1 4.2M573.1 559.5l0.1 11.4M580.9 469.0l0.1 6.9M581.1 478.8l0.1 8.8M581.2 493.2l0.1 5.2M581.5 543.1l0.1 10.0M581.9 568.6l0.1 11.4M590.0 476.6l0.1 8.5M590.1 490.1l0.0 4.1M590.1 494.1l0.1 11.4M590.6 538.4l0.1 7.9M598.6 467.3l0.1 4.5M598.9 473.1l0.1 8.9M599.2 485.8l0.1 5.2M599.2 492.4l0.1 7.8M599.7 535.3l0.1 4.7M599.4 538.4l0.1 10.3M600.1 572.8l0.1 4.4M600.0 586.3l0.1 8.3M606.1 473.4l0.1 6.1M606.4 506.9l0.1 7.0M606.6 524.7l0.1 7.4M606.8 535.6l0.1 6.5M607.4 579.0l0.1 4.5M613.0 476.3l0.1 10.4M613.0 499.2l0.1 9.4M613.6 544.3l0.1 10.1M623.0 503.2l0.1 11.9M629.5 461.2l0.2 5.2M629.8 467.9l0.1 5.1M630.0 474.0l0.1 5.3M630.1 479.8l0.1 12.0M630.6 497.4l0.1 6.2M630.6 504.9l0.1 7.1M639.9 484.0l0.1 8.7M647.3 479.0l0.1 4.3M655.2 491.2l0.1 7.4" stroke="#ff3c00" stroke-width="0.8" stroke-linecap="round" fill="none"/>
<path d="M289.8 260.1l0.2 1.9M347.2 260.2l0.3 2.3M405.1 257.2l0.3 3.2M433.1 257.1l0.2 2.5M444.8 257.5l0.2 3.3M519.3 643.4l0.0 1.1M529.4 636.9l0.0 1.2M529.4 648.7l0.0 1.7M524.3 256.4l0.8 3.8M526.3 301.4l0.8 4.0M536.8 613.5l0.0 1.9M537.0 634.0l0.0 1.8M532.1 268.8l0.7 3.7M543.6 336.4l0.5 2.6M552.3 613.8l0.0 2.1M553.2 303.0l0.7 3.7M555.2 353.5l0.7 3.4M562.4 561.9l0.0 1.0M562.2 567.3l0.0 2.1M562.9 598.5l0.0 1.3M562.7 610.1l0.0 2.2M563.2 617.0l0.0 1.2M562.8 623.6l0.0 1.5M563.4 629.3l0.0 1.1M563.5 635.1l0.0 1.5M560.4 285.4l0.8 3.8M563.3 342.6l0.5 2.5M564.1 365.3l0.8 4.0M570.4 570.6l0.0 1.0M571.2 596.2l0.0 1.4M571.2 602.7l0.0 1.6M571.2 622.0l0.0 1.2M571.4 628.1l0.0 2.1M571.6 640.8l0.0 2.0M569.4 289.3l0.6 3.1M570.3 304.7l0.8 4.0M570.5 317.1l0.9 4.4M571.3 332.5l0.5 2.7M579.1 541.7l0.0 1.3M579.4 585.8l0.0 1.3M579.5 593.3l0.0 1.3M580.1 606.2l0.0 2.1M580.2 612.6l0.0 1.9M580.3 619.8l0.0 0.9M580.2 625.4l0.0 2.0M580.1 639.9l0.0 1.8M577.4 271.3l0.8 3.9M579.1 298.2l0.7 3.5M579.9 312.7l0.5 2.6M582.4 361.9l0.6 3.1M588.0 525.9l0.0 1.4M588.5 578.3l0.0 1.3M588.7 585.9l0.0 1.0M589.4 613.7l0.0 1.5M589.3 625.4l0.0 1.0M588.9 325.2l0.6 2.9M590.2 352.0l0.6 2.9M591.8 377.9l0.8 3.8M597.0 547.3l0.0 1.0M597.4 571.7l0.0 1.9M597.5 598.6l0.0 1.5M597.8 605.3l0.0 1.9M597.8 617.2l0.0 1.6M598.4 624.1l0.0 0.9M598.2 631.1l0.0 0.8M598.6 644.2l0.0 1.0M594.1 286.6l0.5 2.5M594.8 301.6l0.5 2.5M595.7 316.9l0.8 4.0M596.3 329.3l0.6 3.0M598.2 367.6l0.6 3.2M604.0 521.8l0.0 1.7M603.9 537.8l0.0 1.0M604.4 543.1l0.0 2.2M604.2 554.3l0.0 1.4M604.7 560.3l0.0 1.3M604.7 575.8l0.0 2.1M605.2 601.6l0.0 0.9M605.1 606.6l0.0 2.0M604.8 611.8l0.0 1.3M605.2 617.6l0.0 1.6M600.2 272.7l0.8 3.9M601.1 288.5l0.6 2.8M602.6 314.2l0.7 3.6M603.0 327.6l0.6 2.9M604.2 352.1l0.8 3.9M605.4 376.3l0.6 3.2M608.0 428.3l0.7 3.3M610.8 523.7l0.0 1.3M611.3 544.7l0.0 1.9M611.4 554.3l0.0 2.1M611.1 559.7l0.0 1.3M611.5 569.0l0.0 1.2M611.8 579.5l0.0 1.2M611.7 585.4l0.0 1.0M611.6 590.0l0.0 1.3M611.7 601.5l0.0 0.9M611.9 606.8l0.0 1.3M612.0 611.9l0.0 1.6M611.9 622.4l0.0 1.5M612.1 637.4l0.0 2.0M611.1 288.5l0.5 2.7M613.5 334.0l0.7 3.6M616.0 387.8l0.7 3.6M620.0 477.8l0.0 1.7M620.6 498.8l0.0 1.2M620.4 519.2l0.0 1.9M620.6 536.0l0.0 1.7M620.7 542.3l0.0 0.9M620.9 548.2l0.0 1.0M620.9 553.6l0.0 1.3M621.4 558.5l0.0 1.8M621.1 579.5l0.0 1.2M621.4 584.7l0.0 2.1M621.5 590.1l0.0 1.6M621.5 600.7l0.0 2.0M621.5 605.6l0.0 1.6M621.6 611.6l0.0 0.9M621.9 623.5l0.0 0.9M622.4 639.1l0.0 1.0M619.7 313.5l0.6 2.9M620.5 328.6l0.6 3.1M621.5 343.6l0.7 3.4M622.7 368.5l0.8 4.0M623.4 393.6l0.8 4.1M624.4 406.8l0.7 3.6M625.7 429.1l0.6 3.1M627.5 466.0l0.0 1.6M627.5 476.3l0.0 1.8M627.8 501.2l0.0 1.5M628.1 516.8l0.0 2.1M628.0 522.2l0.0 1.4M628.4 537.2l0.0 1.8M628.6 558.9l0.0 0.9M628.6 569.7l0.0 1.1M628.6 574.4l0.0 2.1M628.9 579.9l0.0 1.9M628.8 595.6l0.0 2.2M629.0 606.1l0.0 1.2M629.3 611.9l0.0 0.8M629.3 616.4l0.0 0.9M630.6 337.8l0.7 3.3M631.1 351.9l0.8 4.1M631.3 362.4l0.8 4.2M632.2 376.5l0.8 3.8M633.3 399.7l0.7 3.7M633.9 408.9l0.8 3.9M636.6 464.6l0.0 1.0M637.2 491.2l0.0 0.9M637.3 515.8l0.0 1.7M637.7 527.3l0.0 1.1M638.0 532.6l0.0 1.5M637.7 549.4l0.0 0.9M638.0 554.9l0.0 1.7M638.3 560.5l0.0 1.6M638.3 576.1l0.0 1.9M638.5 581.2l0.0 1.3M638.5 586.9l0.0 1.2M638.4 603.2l0.0 0.8M638.8 612.9l0.0 1.5M638.5 617.8l0.0 1.8M637.2 324.1l0.7 3.6M638.0 338.6l0.5 2.5M638.3 349.4l0.8 4.1M639.5 374.9l0.8 4.1M640.2 385.4l0.7 3.7M641.3 408.7l0.7 3.7M642.9 430.4l0.7 3.4M643.4 442.3l0.5 2.7M643.6 453.0l0.8 4.3M644.6 479.4l0.0 1.2M644.5 490.4l0.0 1.6M644.8 501.1l0.0 1.3M645.0 506.1l0.0 1.7M645.3 511.4l0.0 1.3M644.9 521.0l0.0 1.3M645.7 546.0l0.0 2.0M645.5 555.4l0.0 1.8M645.7 560.0l0.0 1.9M646.0 571.1l0.0 1.7M646.1 576.1l0.0 1.2M646.1 581.7l0.0 0.9M646.2 586.6l0.0 1.0M646.2 595.8l0.0 1.1M646.2 600.5l0.0 2.0M646.1 605.2l0.0 2.1M646.3 610.8l0.0 2.0M646.1 343.7l0.5 2.7M646.7 355.9l0.7 3.6M649.2 404.4l0.8 3.8M649.5 414.9l0.5 2.7M650.3 426.8l0.7 3.5M652.7 485.5l0.0 1.1M653.0 495.8l0.0 1.8M653.0 511.5l0.0 0.9M653.3 516.8l0.0 1.3M652.9 521.6l0.0 1.4M652.9 526.7l0.0 1.1M653.5 532.6l0.0 1.3M653.2 538.2l0.0 1.4M653.4 548.3l0.0 1.2M653.6 563.4l0.0 1.0M653.9 569.0l0.0 1.8M653.6 579.2l0.0 1.1M654.1 584.1l0.0 1.8M653.8 589.5l0.0 1.7M653.9 595.5l0.0 1.5M654.1 606.3l0.0 1.4M653.0 327.4l0.8 4.0M653.8 340.8l0.5 2.7M654.8 363.3l0.5 2.6M655.7 373.2l0.8 3.8M655.8 384.1l0.8 4.0M657.5 409.3l0.6 2.9M658.0 422.2l0.7 3.6M658.9 442.5l0.8 4.2M660.2 474.5l0.0 1.3M660.3 485.4l0.0 1.7M660.9 500.1l0.0 1.3M660.5 510.9l0.0 1.4M660.9 516.3l0.0 1.6M660.7 522.1l0.0 1.1M661.1 532.8l0.0 2.2M661.3 538.2l0.0 1.4M661.0 543.1l0.0 1.8M661.5 559.4l0.0 1.0M661.2 564.6l0.0 1.8M661.7 569.2l0.0 2.0M661.4 574.2l0.0 2.0M661.5 579.0l0.0 1.6M661.6 583.8l0.0 1.3M661.9 588.7l0.0 1.5M661.8 594.3l0.0 1.6M662.1 610.8l0.0 1.9M661.9 616.5l0.0 1.1M660.9 326.9l0.9 4.4M662.4 354.4l0.7 3.6M664.0 387.2l0.9 4.3M664.8 397.7l0.7 3.6M665.6 419.6l0.8 4.0M666.7 432.4l0.8 4.1M667.0 443.3l0.7 3.5M667.6 452.3l0.7 3.7M668.2 470.0l0.0 1.8M668.5 475.8l0.0 1.6M668.2 486.2l0.0 2.0M668.4 492.0l0.0 0.9M668.4 501.7l0.0 1.2M668.8 512.3l0.0 1.7M669.1 517.5l0.0 1.0M669.2 523.3l0.0 1.0M668.8 539.2l0.0 1.1M669.1 544.5l0.0 1.4M669.0 550.1l0.0 1.1M669.6 559.8l0.0 1.9M669.3 565.2l0.0 1.8M669.3 570.6l0.0 1.0M669.5 574.8l0.0 2.2M669.6 580.9l0.0 1.4M669.6 586.0l0.0 0.9M669.7 591.1l0.0 1.1M669.9 600.1l0.0 2.1M669.5 338.5l0.5 2.5M669.8 351.9l0.7 3.5M671.1 376.4l0.8 4.0M672.0 388.6l0.5 2.5M672.1 397.6l0.7 3.5M673.0 407.6l0.6 3.1M673.5 428.7l0.8 4.2M675.9 467.3l0.0 2.0M675.7 472.1l0.0 1.5M675.9 482.4l0.0 1.6M676.3 498.1l0.0 1.7M676.4 502.8l0.0 1.6M676.3 508.5l0.0 1.7M676.3 514.0l0.0 1.4M676.7 518.7l0.0 1.9M676.4 524.3l0.0 1.7M676.7 540.6l0.0 2.1M676.7 546.9l0.0 1.2M677.1 552.8l0.0 1.1M676.7 558.5l0.0 1.3M677.2 569.7l0.0 1.0M677.1 575.0l0.0 1.5M677.7 599.6l0.0 2.2M677.5 342.7l0.6 3.1" stroke="#ff7800" stroke-width="1.6" stroke-linecap="round" fill="none"/>
<path d="M118.7 650.3l0.1 4.2M136.7 663.4l0.1 5.7M151.8 644.5l0.0 2.9M169.3 661.0l0.0 3.8M206.6 652.2l0.0 3.3M206.9 658.4l0.1 5.6M222.6 645.7l0.0 2.5M222.9 666.2l0.1 5.8M255.8 650.1l0.1 5.3M269.8 654.6l0.1 5.5" stroke="#ff7800" stroke-width="1.5" stroke-linecap="round" fill="none"/>
<path d="M114.3 256.8l1.2 3.4M147.5 258.7l1.2 3.3M201.3 257.3l0.8 2.1M247.8 258.3l1.1 3.1M420.2 257.0l1.1 3.3M435.7 255.8l1.1 3.3M488.5 257.8l0.7 2.5" stroke="#ff7800" stroke-width="1.4" stroke-linecap="round" fill="none"/>
<path d="M111.0 259.8l0.1 0.5M181.3 259.7l0.0 0.2M197.5 258.2l0.1 0.5M230.8 259.8l0.0 0.4M263.0 260.7l0.0 0.3" stroke="#ff7800" stroke-width="1.3" stroke-linecap="round" fill="none"/>
<path d="M302.1 655.5l0.0 2.5M302.4 661.0l0.0 1.9M328.0 667.9l0.0 1.2M360.0 665.8l0.0 1.6M372.2 650.5l0.0 1.4M372.3 656.2l0.0 2.1M372.5 663.5l0.0 1.6M372.2 667.8l0.0 2.1M385.4 659.5l0.0 0.8M385.6 665.5l0.0 2.4M399.9 651.3l0.0 1.7M414.3 658.4l0.0 1.9M426.8 656.3l0.0 0.8M427.0 662.6l0.0 0.9M437.1 660.8l0.0 1.7M450.6 662.2l0.0 1.7M461.1 664.8l0.0 1.3M470.6 668.5l0.0 0.6M476.9 654.4l0.0 0.8M507.3 664.1l0.0 2.3" stroke="#ff7800" stroke-width="1.2" stroke-linecap="round" fill="none"/>
<path d="M122.8 656.1l0.1 6.3M122.8 659.0l0.2 19.5M191.5 626.8l0.2 16.2M259.9 644.1l0.2 18.0M273.8 658.8l0.2 14.4M292.3 646.7l0.2 19.6M306.0 657.3l0.2 19.4M318.4 656.5l0.1 6.7M351.0 660.0l0.2 16.8M376.1 651.6l0.2 14.7M403.6 654.2l0.1 8.9M490.0 667.5l0.1 6.7" stroke="#ff7800" stroke-width="1.0" stroke-linecap="round" fill="none"/>
<path d="M113.7 467.5l0.3 6.9M114.4 486.5l0.1 4.3M114.4 491.6l0.1 5.8M114.6 499.8l0.1 7.0M114.3 508.3l0.1 7.8M114.9 517.3l0.1 9.4M115.2 549.2l0.1 6.1M115.1 556.3l0.1 11.0M115.3 571.6l0.1 9.6M131.3 468.2l0.2 6.4M131.7 476.1l0.1 11.3M132.3 555.8l0.1 7.6M133.5 607.4l0.1 10.9M146.6 465.1l0.3 6.9M147.3 483.9l0.0 4.2M147.3 486.8l0.1 9.9M147.4 521.0l0.1 10.9M148.1 534.7l0.1 10.6M148.3 550.0l0.1 6.4M148.3 564.8l0.1 10.4M148.8 595.2l0.1 7.0M163.8 461.0l0.6 11.1M165.2 507.7l0.1 5.2M165.5 567.6l0.1 10.8M183.1 477.6l0.1 11.3M183.5 491.8l0.1 8.6M183.6 511.8l0.1 10.5M184.1 535.6l0.1 10.4M184.1 547.7l0.1 9.9M184.8 612.9l0.1 10.4M202.7 524.6l0.1 7.3M202.7 548.9l0.1 8.8M203.5 592.9l0.1 8.9M217.9 463.6l0.3 6.7M218.4 499.7l0.1 8.8M218.6 512.5l0.1 4.6M219.0 530.0l0.1 9.2M219.1 554.1l0.1 10.7M219.2 576.6l0.1 5.3M219.4 600.3l0.1 4.4M232.7 461.0l0.3 5.9M234.3 516.9l0.1 9.9M234.2 532.2l0.1 7.1M234.6 539.8l0.1 10.2M250.5 463.8l0.2 4.3M250.9 468.8l0.2 5.0M251.2 497.6l0.1 8.7M251.8 506.8l0.1 10.7M251.6 522.7l0.1 6.6M252.2 543.7l0.1 4.4M252.0 549.3l0.1 6.4M252.1 558.1l0.1 9.3M252.0 570.2l0.1 10.2M265.3 513.7l0.1 6.7M265.9 520.6l0.1 11.9M266.1 558.8l0.1 11.0M283.5 470.4l0.2 5.0M283.7 478.0l0.1 6.9M283.8 507.5l0.1 6.8M284.0 517.3l0.1 8.9M284.0 528.7l0.1 8.8M284.7 541.7l0.1 7.4M284.4 559.0l0.1 6.8M284.9 578.7l0.1 11.8M284.8 595.2l0.1 6.6M285.1 613.7l0.1 10.8M519.4 465.2l0.1 4.2M520.1 504.2l0.1 5.3M520.8 555.0l0.1 7.7M529.7 476.4l0.1 6.1M530.1 482.4l0.1 11.8M530.4 526.2l0.1 4.9M537.6 469.2l0.1 6.4M537.4 476.5l0.1 12.0M545.0 476.1l0.1 6.0M544.7 486.1l0.1 6.0M545.3 507.6l0.1 4.3M552.6 470.3l0.2 10.0M553.7 526.0l0.1 5.2M563.7 480.5l0.1 7.0M590.0 462.6l0.3 11.2" stroke="#ff7800" stroke-width="0.9" stroke-linecap="round" fill="none"/>
<path d="M334.3 256.2l0.4 3.4M359.4 255.2l0.3 2.4M374.4 255.8l0.3 2.7M463.4 258.5l0.2 3.4M474.2 258.3l0.2 3.2M485.3 257.2l0.1 2.4M506.7 260.8l0.7 3.3M507.3 273.7l0.8 4.1M508.9 301.2l0.7 3.3M510.1 326.6l0.7 3.6M518.9 604.4l0.0 1.1M518.8 610.7l0.0 1.0M519.2 616.8l0.0 1.3M519.0 629.8l0.0 1.7M519.0 637.4l0.0 1.2M517.4 266.8l0.6 3.2M517.6 282.3l0.9 4.3M519.5 312.7l0.6 3.2M520.0 325.2l0.6 3.2M520.5 337.8l0.6 3.1M528.1 549.1l0.0 1.3M528.5 556.1l0.0 1.5M528.2 569.9l0.0 2.0M529.0 608.0l0.0 1.7M528.9 613.8l0.0 1.0M529.2 619.6l0.0 1.6M529.5 642.6l0.0 1.5M524.9 274.1l0.7 3.4M525.7 290.2l0.6 3.1M527.5 326.2l0.6 3.0M528.9 353.8l0.7 3.3M530.4 379.1l0.8 4.1M536.0 580.4l0.0 1.0M536.7 600.4l0.0 2.1M536.7 621.0l0.0 1.4M536.6 641.5l0.0 1.6M532.7 283.0l0.7 3.5M533.4 294.4l0.9 4.3M534.3 311.2l0.8 4.1M535.5 338.9l0.6 3.1M537.1 364.4l0.7 3.5M537.9 375.7l0.5 2.7M543.2 534.6l0.0 1.8M543.5 599.6l0.0 1.7M544.0 612.6l0.0 1.8M544.1 619.2l0.0 1.0M544.4 626.1l0.0 0.9M544.1 631.5l0.0 1.8M544.5 637.2l0.0 1.6M544.1 642.8l0.0 1.7M540.5 270.9l0.9 4.4M541.0 286.0l0.8 3.8M541.6 298.1l0.7 3.7M545.9 375.7l0.6 3.0M547.9 418.8l0.9 4.4M551.9 595.0l0.0 1.2M552.2 601.0l0.0 1.9M552.6 628.2l0.0 1.2M552.4 635.2l0.0 2.0M552.6 642.6l0.0 2.0M552.1 287.1l0.8 4.2M554.0 318.4l0.6 2.9M555.0 342.4l0.7 3.7M556.2 367.1l0.5 2.7M557.0 379.3l0.9 4.3M557.7 402.7l0.9 4.3M562.6 574.2l0.0 0.8M562.9 580.7l0.0 1.8M562.6 604.6l0.0 1.5M563.6 641.3l0.0 1.1M561.1 298.9l0.7 3.7M561.5 314.2l0.8 4.1M562.6 330.2l0.6 3.1M563.7 354.3l0.7 3.7M565.0 378.8l0.8 4.2M568.0 435.6l0.5 2.6M568.3 445.2l0.7 3.5M569.4 487.7l0.0 1.2M569.9 513.3l0.0 1.5M570.3 544.5l0.0 1.6M570.7 557.5l0.0 2.0M570.5 564.5l0.0 1.0M571.0 583.0l0.0 1.9M571.1 608.9l0.0 2.1M571.5 616.0l0.0 0.9M571.4 635.3l0.0 1.9M571.9 343.4l0.7 3.6M573.2 367.2l0.6 2.8M575.6 413.3l0.8 4.0M576.9 436.2l0.8 4.0M578.2 475.4l0.0 1.3M578.8 495.1l0.0 1.8M578.9 515.0l0.0 1.2M579.0 528.4l0.0 0.9M579.1 534.6l0.0 1.6M579.2 555.0l0.0 1.9M579.3 574.0l0.0 1.3M579.9 580.0l0.0 0.8M579.8 599.7l0.0 2.0M580.7 338.1l0.6 2.9M582.9 374.9l0.5 2.7M583.2 388.2l0.6 3.0M584.3 402.2l0.5 2.6M585.7 432.5l0.5 2.5M586.6 454.0l0.5 2.5M587.1 465.4l0.0 1.8M587.9 499.2l0.0 1.5M588.1 533.0l0.0 1.4M588.6 545.6l0.0 1.9M588.4 551.6l0.0 1.1M588.9 571.2l0.0 2.0M589.1 599.5l0.0 1.0M589.4 338.3l0.8 3.9M591.3 365.5l0.7 3.7M592.0 388.7l0.7 3.5M593.1 400.7l0.7 3.7M593.5 413.6l0.6 3.1M595.2 454.9l0.8 4.1M596.3 475.0l0.0 1.6M596.3 493.9l0.0 2.0M596.9 507.3l0.0 1.0M597.1 540.6l0.0 1.1M597.1 560.2l0.0 0.8M597.8 579.5l0.0 1.0M597.4 585.3l0.0 1.6M597.6 592.5l0.0 2.0M598.8 381.5l0.6 2.8M599.7 394.5l0.9 4.4M600.3 409.0l0.5 2.6M601.0 419.0l0.9 4.3M602.7 453.9l0.6 2.9M602.9 463.1l0.0 1.1M603.3 468.1l0.0 1.2M603.8 489.7l0.0 2.1M603.8 496.1l0.0 1.2M603.6 500.4l0.0 1.8M604.1 506.0l0.0 1.9M604.0 516.9l0.0 1.2M604.3 532.2l0.0 1.3M604.4 549.0l0.0 1.9M604.3 566.1l0.0 0.8M604.4 570.9l0.0 1.5M604.9 581.1l0.0 1.9M604.8 363.7l0.8 4.0M607.0 398.8l0.7 3.4M609.0 440.9l0.7 3.7M609.7 453.3l0.5 2.7M610.2 486.3l0.0 1.0M610.5 491.7l0.0 1.8M610.4 496.6l0.0 2.1M610.9 502.5l0.0 0.9M611.0 518.8l0.0 0.9M610.8 533.2l0.0 2.1M611.1 539.3l0.0 1.1M611.2 549.2l0.0 2.0M611.2 564.1l0.0 1.9M611.3 574.5l0.0 1.3M611.6 595.1l0.0 2.1M614.0 345.1l0.7 3.5M614.3 356.8l0.6 3.1M615.2 367.3l0.7 3.5M615.3 378.1l0.7 3.3M618.0 426.9l0.5 2.7M619.0 445.7l0.6 3.1M619.8 472.3l0.0 0.9M620.8 513.9l0.0 1.5M620.7 524.5l0.0 1.3M621.4 563.8l0.0 1.0M621.1 568.7l0.0 1.3M621.6 574.0l0.0 1.9M623.1 382.4l0.7 3.7M624.9 419.0l0.5 2.7M626.1 441.4l0.8 4.0M626.5 453.5l0.8 4.3M627.7 481.5l0.0 1.2M627.8 506.3l0.0 1.2M627.7 511.4l0.0 1.9M628.2 548.8l0.0 1.8M628.5 554.2l0.0 1.1M628.5 564.0l0.0 0.9M632.7 387.7l0.8 4.1M635.9 454.3l0.8 4.2M637.1 468.9l0.0 2.1M637.1 475.3l0.0 1.2M637.2 479.7l0.0 2.1M637.1 496.3l0.0 0.8M637.4 500.8l0.0 1.5M637.6 506.2l0.0 2.0M637.7 521.9l0.0 1.4M637.7 538.0l0.0 0.8M637.8 543.3l0.0 2.2M641.1 396.4l0.9 4.3M642.1 419.9l0.8 4.0M644.2 464.2l0.0 1.5M644.3 469.2l0.0 1.1M645.0 484.9l0.0 0.9M644.8 495.4l0.0 2.0M645.0 531.1l0.0 1.0M645.5 536.7l0.0 1.1M645.7 565.8l0.0 1.8M647.4 370.8l0.6 3.0M650.5 435.5l0.8 4.1M651.1 444.8l0.5 2.5M651.3 452.7l0.7 3.5M652.8 475.0l0.0 1.9M652.4 480.3l0.0 1.6M652.5 490.7l0.0 1.1M652.8 501.1l0.0 1.5M658.2 431.6l0.5 2.5M659.5 452.8l0.5 2.8M660.1 464.5l0.0 1.4M660.2 469.7l0.0 0.9M660.5 480.4l0.0 1.2M660.8 490.3l0.0 1.4M661.0 505.4l0.0 1.8M661.2 527.5l0.0 1.1M667.8 465.7l0.0 1.0M668.1 480.8l0.0 1.9M668.7 496.6l0.0 2.0M669.3 528.9l0.0 1.0M674.0 438.1l0.8 3.8M675.0 450.7l0.7 3.5M675.7 477.6l0.0 2.1" stroke="#ffb000" stroke-width="1.7" stroke-linecap="round" fill="none"/>
<path d="M116.4 470.1l0.2 4.5M118.1 619.2l0.0 3.1M135.3 580.5l0.1 4.5M135.8 630.7l0.1 5.4M136.5 649.7l0.0 4.1M151.7 620.7l0.0 3.1M167.7 519.2l0.0 2.8M168.4 567.6l0.1 4.7M168.5 613.7l0.1 5.3M169.4 647.6l0.1 5.5M187.5 628.6l0.0 3.7M187.4 643.3l0.0 4.0M204.5 473.7l0.1 3.8M205.5 573.3l0.0 3.2M222.1 593.7l0.1 5.0M222.4 619.3l0.0 2.9M222.8 631.1l0.1 5.3M237.4 590.0l0.1 4.6M237.8 626.9l0.1 5.2M255.5 617.4l0.0 3.7M255.9 643.5l0.1 5.2M269.3 608.1l0.0 3.0M269.3 631.6l0.1 5.9M287.5 571.0l0.1 4.9M287.9 608.9l0.0 3.8M288.4 650.9l0.0 3.2" stroke="#ffb000" stroke-width="1.6" stroke-linecap="round" fill="none"/>
<path d="M104.3 321.3l0.9 2.5M130.3 258.5l1.2 3.2M131.6 273.3l1.0 2.8M134.0 294.9l0.9 2.4M149.4 274.3l1.2 3.3M156.0 333.3l1.4 3.8M166.2 260.4l1.0 2.8M172.2 312.3l1.3 3.6M173.6 327.0l0.9 2.4M186.6 272.0l1.2 3.4M207.8 320.8l1.4 3.8M225.8 341.9l0.9 2.5M227.7 355.9l1.0 2.9M233.7 256.4l0.9 2.5M234.7 262.5l1.1 3.1M235.8 277.2l1.3 3.7M237.6 292.1l1.2 3.2M240.2 313.3l1.0 2.8M253.8 307.8l0.9 2.6M260.2 365.7l1.7 4.7M266.9 260.0l0.9 2.4M269.6 282.8l1.0 2.7M350.1 259.2l1.2 3.3M448.5 258.0l0.8 2.5M466.8 256.7l1.0 3.3" stroke="#ffb000" stroke-width="1.5" stroke-linecap="round" fill="none"/>
<path d="M106.8 375.7l0.0 0.3M107.1 380.1l0.1 0.7M108.9 393.2l0.1 0.7M110.7 255.6l0.0 0.4M111.8 267.5l0.1 0.5M117.0 314.4l0.1 0.5M119.4 334.9l0.1 0.7M122.4 360.7l0.1 0.5M126.2 395.2l0.1 0.5M126.8 263.1l0.1 0.5M133.5 321.8l0.1 0.5M136.7 347.2l0.0 0.3M144.3 414.8l0.1 0.6M148.9 457.0l0.0 0.6M146.1 279.2l0.0 0.2M147.9 292.3l0.1 0.6M153.1 338.0l0.1 0.5M153.6 342.7l0.1 0.5M157.5 376.0l0.1 0.7M165.7 454.8l0.1 0.8M163.1 262.2l0.0 0.3M163.7 266.9l0.0 0.3M164.1 274.7l0.0 0.3M165.4 283.5l0.0 0.2M166.8 296.2l0.0 0.4M168.0 309.9l0.0 0.3M169.0 318.2l0.0 0.3M169.5 322.5l0.1 0.6M171.9 343.4l0.0 0.3M173.2 356.2l0.1 0.7M182.9 269.0l0.0 0.4M184.3 285.7l0.1 0.5M188.8 325.9l0.0 0.4M189.9 334.1l0.1 0.6M199.2 274.1l0.1 0.5M202.2 299.6l0.0 0.2M204.5 319.2l0.0 0.4M208.1 352.8l0.1 0.8M208.7 357.1l0.1 0.8M210.2 374.3l0.1 0.7M218.8 448.4l0.1 0.6M213.3 259.4l0.0 0.2M215.6 280.4l0.1 0.5M222.1 338.3l0.1 0.8M225.4 369.4l0.1 0.6M231.8 423.1l0.1 0.5M231.8 272.0l0.0 0.3M232.5 276.2l0.0 0.3M232.9 281.1l0.0 0.1M233.9 288.5l0.0 0.4M234.3 292.5l0.0 0.3M235.0 296.7l0.1 0.6M236.8 314.1l0.0 0.2M242.4 362.3l0.1 0.8M246.0 396.6l0.1 0.8M244.2 257.4l0.1 0.5M246.2 274.6l0.1 0.7M246.5 278.8l0.0 0.2M247.4 287.2l0.1 0.6M248.8 298.7l0.1 0.6M252.5 330.2l0.1 0.7M258.3 381.5l0.1 0.4M265.0 438.9l0.1 0.8M264.4 273.6l0.0 0.4M266.6 291.1l0.1 0.5M270.8 328.2l0.1 0.5M273.9 353.3l0.1 0.8" stroke="#ffb000" stroke-width="1.4" stroke-linecap="round" fill="none"/>
<path d="M302.1 624.8l0.0 2.1M314.2 609.5l0.0 2.1M314.3 629.1l0.0 1.5M314.5 634.6l0.0 1.5M314.6 642.0l0.0 0.8M315.1 655.2l0.0 1.1M327.6 621.9l0.0 2.2M328.0 659.8l0.0 2.1M346.5 622.8l0.0 1.3M346.6 634.1l0.0 2.1M347.2 642.3l0.0 1.2M347.1 660.9l0.0 1.0M360.1 648.9l0.0 1.6M360.4 655.9l0.0 1.2M360.0 660.5l0.0 1.8M371.8 637.1l0.0 1.5M399.9 639.2l0.0 0.8M414.5 627.9l0.0 0.8M426.6 637.3l0.0 2.2M427.0 643.5l0.0 1.3M450.1 632.9l0.0 1.3M450.1 639.9l0.0 1.7M460.0 599.3l0.0 1.4M460.6 615.3l0.0 2.1M460.4 640.7l0.0 1.2M461.1 645.9l0.0 1.3M460.6 652.5l0.0 2.2M469.3 591.1l0.0 1.8M469.7 596.8l0.0 0.9M469.7 624.0l0.0 1.5M469.9 648.2l0.0 1.8M470.3 654.2l0.0 1.5M470.2 661.9l0.0 0.9M476.7 659.0l0.0 1.0M486.4 636.3l0.0 1.7M486.6 642.9l0.0 2.2M486.2 648.9l0.0 1.2M486.4 662.4l0.0 2.3M497.6 654.0l0.0 1.2M507.5 657.8l0.0 1.7" stroke="#ffb000" stroke-width="1.3" stroke-linecap="round" fill="none"/>
<path d="M122.6 633.4l0.2 15.7M140.1 642.0l0.2 17.1M155.3 615.7l0.2 18.3M173.0 629.1l0.2 13.0M209.9 566.3l0.2 19.6M210.3 603.0l0.2 14.3M226.1 599.3l0.2 17.2M226.8 648.4l0.1 11.9M241.4 578.1l0.2 18.3M241.8 600.7l0.2 13.7M242.3 641.5l0.2 18.5M273.3 622.3l0.2 19.0M291.8 587.1l0.2 16.5M305.5 641.2l0.1 8.8M305.9 652.9l0.1 7.2M363.5 628.0l0.1 7.0M375.6 627.8l0.2 19.1M388.3 611.8l0.1 9.4M418.0 630.1l0.2 18.8M417.9 655.7l0.1 10.2M430.2 655.2l0.1 7.8M453.9 638.1l0.2 16.2M454.3 657.9l0.1 11.2M474.0 653.9l0.2 18.7M480.5 647.6l0.2 18.0M489.8 650.5l0.1 11.7M501.3 657.7l0.2 12.7M510.6 640.8l0.1 9.6M510.9 651.5l0.2 12.7" stroke="#ffb000" stroke-width="1.1" stroke-linecap="round" fill="none"/>
<path d="M519.6 483.2l0.1 7.3" stroke="#ffb000" stroke-width="1.0" stroke-linecap="round" fill="none"/>
<path d="M277.4 263.4l0.2 1.9M278.0 268.5l0.4 3.3M278.6 274.7l0.2 2.2M280.4 286.6l0.4 3.7M281.0 294.5l0.2 2.2M282.0 300.9l0.2 2.0M286.2 341.2l0.4 3.7M288.0 354.8l0.4 3.3M289.1 367.2l0.4 3.5M290.3 374.6l0.3 2.4M290.7 380.6l0.4 3.9M291.7 387.0l0.4 3.4M292.2 393.7l0.5 4.7M293.1 400.2l0.3 3.0M293.8 406.3l0.4 3.8M295.2 418.9l0.5 4.5M295.8 425.7l0.4 3.3M296.6 433.1l0.4 3.3M297.4 440.5l0.3 2.8M298.6 451.4l0.3 3.8M291.1 271.4l0.4 3.6M291.3 276.7l0.4 3.1M292.3 282.5l0.2 2.1M295.3 308.4l0.2 2.2M295.8 314.5l0.3 2.6M296.3 321.2l0.3 3.1M299.2 346.3l0.4 3.9M302.0 367.1l0.4 3.2M303.4 380.3l0.4 3.9M303.9 387.6l0.4 3.3M304.6 392.9l0.4 3.2M305.4 398.1l0.3 3.0M305.9 404.1l0.4 3.4M307.4 417.8l0.5 4.6M308.0 424.2l0.5 4.2M308.8 431.1l0.5 4.3M309.8 438.5l0.3 2.8M310.6 444.3l0.3 2.5M310.7 448.3l0.4 4.6M311.4 455.9l0.2 2.6M305.2 280.6l0.2 1.9M306.5 291.9l0.3 2.7M308.5 311.7l0.3 2.3M310.4 329.7l0.4 3.5M311.3 335.0l0.3 3.0M313.6 358.9l0.5 4.3M316.0 376.0l0.4 3.7M316.7 383.5l0.4 3.5M318.2 396.0l0.3 2.8M318.3 401.2l0.3 2.5M319.4 407.2l0.3 2.8M319.9 413.0l0.4 3.9M321.0 420.2l0.4 3.9M321.6 427.2l0.3 2.9M322.4 432.6l0.4 3.3M322.7 437.5l0.4 3.8M323.2 443.6l0.4 3.4M323.8 448.8l0.5 4.8M324.5 454.4l0.3 3.7M323.5 274.1l0.4 3.7M324.1 279.6l0.4 3.7M324.9 287.0l0.3 2.3M325.4 292.6l0.3 3.1M327.1 303.4l0.3 2.8M327.6 310.2l0.4 3.4M328.4 315.4l0.4 3.4M328.9 322.4l0.3 2.3M329.6 326.7l0.4 3.7M331.1 338.8l0.4 3.6M331.3 344.8l0.3 2.3M332.4 350.3l0.4 3.5M334.5 370.4l0.4 3.3M335.0 376.9l0.5 4.0M335.7 382.5l0.5 4.7M336.5 389.6l0.4 3.9M337.6 396.9l0.4 3.3M338.0 403.4l0.4 3.4M339.6 416.2l0.3 2.7M340.3 422.6l0.4 3.8M341.2 429.2l0.5 4.4M342.1 436.3l0.4 3.6M342.1 441.1l0.6 5.0M343.5 448.3l0.3 3.5M335.2 264.2l0.3 2.3M339.6 299.7l0.2 2.2M340.3 305.5l0.4 3.3M340.6 311.7l0.4 3.8M342.4 325.9l0.3 3.0M343.1 332.2l0.3 2.8M343.9 337.6l0.3 3.0M344.5 343.9l0.4 3.3M346.0 355.8l0.4 3.7M346.2 362.5l0.5 4.1M347.5 370.3l0.3 2.8M348.1 377.6l0.3 2.6M348.8 383.7l0.5 4.4M350.4 396.0l0.4 3.7M350.8 401.4l0.4 3.6M351.6 408.3l0.4 3.9M353.9 426.9l0.5 4.3M355.2 440.9l0.4 3.3M356.3 447.1l0.3 3.0M356.7 452.1l0.4 4.6M347.9 265.3l0.4 3.3M349.1 277.8l0.3 2.8M350.0 285.2l0.3 2.9M352.5 306.9l0.3 2.2M353.9 319.4l0.3 2.7M354.8 325.8l0.5 4.1M355.2 333.0l0.4 3.2M356.6 344.1l0.2 2.2M357.9 356.6l0.3 2.6M358.6 361.0l0.5 4.3M359.6 367.8l0.4 3.5M360.7 379.3l0.4 3.8M361.7 390.3l0.5 4.6M363.4 404.0l0.3 3.0M363.8 409.3l0.5 4.2M364.7 416.7l0.4 3.8M366.1 427.9l0.5 4.1M366.6 434.8l0.4 3.3M368.3 447.9l0.5 4.8M360.8 269.0l0.4 3.6M362.8 286.3l0.3 2.4M363.8 291.7l0.4 3.5M364.1 298.8l0.4 3.7M365.3 305.8l0.3 2.8M365.9 312.9l0.3 2.5M366.7 318.4l0.4 3.4M368.0 332.7l0.5 4.1M369.0 340.3l0.3 2.6M369.5 346.3l0.2 2.2M370.6 351.7l0.5 4.4M371.5 359.4l0.3 2.5M372.3 365.8l0.3 3.0M372.4 372.0l0.3 2.7M373.2 378.6l0.3 2.4M374.3 384.6l0.4 3.8M374.7 391.8l0.3 2.9M375.7 397.6l0.4 4.0M376.0 403.5l0.4 3.2M376.6 409.1l0.3 2.9M377.3 415.0l0.5 4.0M378.2 422.0l0.5 4.4M378.8 427.4l0.5 4.0M379.3 432.2l0.5 4.7M380.6 440.3l0.3 2.5M381.0 446.2l0.4 3.7M381.5 451.9l0.3 3.4M376.9 279.2l0.3 2.2M377.6 285.0l0.3 2.4M377.8 290.1l0.4 3.7M378.7 297.3l0.3 3.1M379.6 302.6l0.4 3.7M381.1 316.6l0.3 2.5M382.1 323.4l0.4 3.4M383.2 334.7l0.5 4.3M383.7 341.2l0.4 3.5M384.6 346.0l0.4 4.0M385.0 352.5l0.3 2.3M386.1 363.9l0.5 4.5M386.9 370.1l0.5 4.4M388.1 377.9l0.4 3.4M388.4 384.1l0.4 3.9M389.9 396.7l0.5 4.7M391.8 411.2l0.4 3.2M392.8 421.9l0.4 3.2M394.4 434.5l0.4 3.8M394.9 439.6l0.4 3.6M395.5 444.9l0.5 4.3M396.2 452.7l0.3 3.0M393.7 281.0l0.4 3.5M395.9 303.5l0.2 2.4M397.7 321.0l0.2 2.4M398.3 326.8l0.2 2.3M399.6 339.3l0.3 2.9M401.0 356.9l0.4 3.8M402.7 369.2l0.3 2.8M402.9 373.6l0.5 4.5M404.8 392.6l0.3 2.8M405.3 396.7l0.5 4.8M406.2 403.3l0.4 4.1M406.7 409.0l0.5 4.8M407.6 415.9l0.5 4.6M409.2 430.3l0.3 2.9M410.2 443.2l0.4 3.4M410.7 450.5l0.3 3.4M406.7 271.3l0.2 2.3M407.9 283.9l0.2 2.5M408.2 288.5l0.3 3.4M408.9 293.6l0.3 3.4M409.9 305.9l0.2 2.6M410.5 312.9l0.2 2.1M411.7 325.7l0.3 3.4M412.1 332.8l0.3 3.2M413.0 339.5l0.3 2.8M413.4 345.4l0.4 4.0M414.1 353.2l0.3 2.8M415.1 360.2l0.3 3.4M416.8 376.9l0.4 4.4M417.0 382.7l0.4 4.7M417.8 388.6l0.3 3.5M418.3 395.1l0.4 4.0M418.5 401.2l0.4 4.0M419.1 407.1l0.4 4.1M419.9 413.8l0.3 2.8M421.8 433.5l0.3 3.5M422.3 439.4l0.3 3.5M422.9 446.6l0.3 4.0M423.7 453.8l0.3 4.1M418.4 269.4l0.3 3.0M419.2 282.3l0.2 1.9M420.2 287.8l0.2 2.2M420.4 292.9l0.2 2.1M421.0 298.1l0.3 3.3M421.3 306.1l0.2 2.0M423.4 324.3l0.3 3.7M423.6 329.9l0.3 3.4M424.2 336.8l0.2 2.7M425.3 348.4l0.3 3.2M425.6 354.6l0.2 2.5M426.3 359.3l0.4 4.4M426.6 365.9l0.3 3.5M427.2 371.3l0.4 4.4M428.1 384.8l0.3 3.7M428.5 391.3l0.4 4.3M429.3 397.5l0.3 3.8M430.0 402.6l0.3 3.7M430.2 408.9l0.4 4.6M431.5 421.2l0.2 2.8M431.8 427.4l0.3 4.0M432.3 432.5l0.4 4.8M433.0 438.3l0.4 4.4M433.5 443.3l0.4 4.9M433.6 449.7l0.3 4.6M433.4 262.9l0.2 2.5M433.5 269.2l0.3 3.6M434.3 276.1l0.2 2.6M435.1 289.2l0.2 3.3M437.8 319.7l0.2 2.3M438.3 330.6l0.2 2.3M438.9 337.0l0.2 2.4M439.4 343.4l0.2 2.3M439.9 348.3l0.3 4.0M439.9 354.9l0.2 2.6M440.6 360.3l0.2 2.7M441.1 366.4l0.3 3.5M441.6 372.3l0.2 3.3M441.9 378.3l0.2 3.2M442.2 383.5l0.3 3.7M443.0 396.5l0.3 3.9M444.3 409.7l0.2 2.6M445.0 415.9l0.3 3.6M445.1 420.5l0.3 4.4M445.4 426.9l0.3 4.2M446.2 434.5l0.3 3.9M446.4 440.2l0.2 2.5M446.8 446.4l0.2 2.7M447.6 451.7l0.2 3.2M445.4 264.2l0.2 3.2M446.8 282.7l0.1 2.1M447.0 287.8l0.2 2.8M448.0 300.7l0.2 3.5M448.8 314.1l0.2 3.6M448.8 320.0l0.2 3.1M449.7 326.4l0.3 4.2M450.4 339.9l0.2 2.4M451.0 345.7l0.2 3.4M450.9 351.2l0.2 3.4M451.7 358.1l0.3 3.9M451.7 364.3l0.2 3.4M452.7 375.9l0.2 3.5M453.5 383.1l0.2 3.7M453.8 389.4l0.2 2.7M454.2 394.9l0.3 4.6M454.5 402.6l0.2 2.6M455.1 407.6l0.3 4.3M456.1 428.1l0.2 2.6M457.2 440.9l0.3 3.9M457.4 447.3l0.2 2.9M458.0 453.3l0.1 2.7M456.2 263.9l0.2 3.0M457.0 276.2l0.2 2.9M457.1 283.5l0.1 2.3M458.2 301.9l0.2 2.6M458.9 314.7l0.1 2.1M459.4 319.9l0.2 3.4M459.9 325.6l0.2 2.7M460.2 332.7l0.2 3.3M460.3 338.8l0.2 3.3M460.7 343.8l0.2 4.1M461.3 349.3l0.2 3.3M461.8 356.3l0.2 3.3M462.2 362.8l0.3 4.4M462.3 369.2l0.2 3.5M462.9 374.9l0.3 4.4M462.9 381.7l0.2 3.3M463.4 387.5l0.2 3.1M463.7 392.3l0.3 4.3M463.9 397.8l0.2 3.3M464.3 403.4l0.2 3.3M465.0 410.1l0.2 3.3M465.4 417.0l0.2 4.0M465.9 429.6l0.2 4.1M466.5 436.3l0.2 3.0M467.2 450.3l0.1 2.8M464.2 264.6l0.1 2.2M464.6 275.8l0.1 2.1M465.6 299.4l0.1 2.6M465.8 304.8l0.2 3.5M466.3 312.7l0.1 2.2M467.7 331.4l0.1 2.1M467.9 336.1l0.2 3.6M468.3 343.8l0.2 3.2M468.5 349.4l0.2 3.0M470.0 380.3l0.2 3.2M470.7 385.4l0.2 2.9M471.0 396.3l0.2 3.1M471.2 401.1l0.2 3.6M471.8 408.3l0.2 3.1M471.7 414.3l0.2 3.8M472.0 420.1l0.2 4.0M472.5 425.7l0.2 3.2M473.1 430.6l0.2 3.7M472.9 435.9l0.3 4.7M473.6 442.2l0.3 4.8M474.5 265.2l0.1 1.8M474.8 271.3l0.1 2.3M475.1 276.9l0.2 3.3M475.0 283.7l0.2 3.4M475.8 289.3l0.2 3.2M477.0 315.3l0.1 2.8M477.7 328.1l0.2 3.2M478.3 345.5l0.2 4.1M478.9 352.8l0.2 3.8M479.4 360.4l0.1 2.8M479.5 367.6l0.2 3.3M479.6 373.3l0.1 2.8M479.9 379.2l0.2 3.6M480.6 384.9l0.2 4.2M480.6 391.4l0.2 4.6M480.7 397.5l0.2 3.9M481.4 404.5l0.1 2.6M481.5 410.2l0.2 4.0M482.0 423.1l0.2 4.0M482.7 429.4l0.2 4.0M483.4 443.4l0.2 4.5M485.7 261.9l0.2 3.3M486.2 274.8l0.1 2.6M487.0 293.6l0.2 3.5M488.2 317.9l0.2 3.5M488.4 325.8l0.1 2.7M488.9 331.0l0.2 3.6M489.3 336.3l0.2 3.8M489.7 347.1l0.2 4.2M490.2 353.7l0.1 2.5M490.5 359.4l0.2 3.7M490.4 365.6l0.2 3.1M490.9 378.2l0.1 2.9M491.5 385.7l0.1 2.8M491.9 390.9l0.2 4.5M492.1 398.6l0.1 2.9M492.7 403.8l0.2 4.3M492.9 410.1l0.2 3.2M493.3 415.5l0.2 4.7M493.4 422.6l0.2 3.8M494.2 441.8l0.2 3.9M495.1 454.5l0.1 2.7M494.9 261.8l0.2 3.5M495.6 275.1l0.1 2.9M495.8 282.2l0.1 2.6M496.5 289.4l0.2 3.1M497.1 299.9l0.2 3.3M497.2 306.5l0.1 2.9M497.8 317.2l0.2 3.2M497.8 323.8l0.2 3.3M498.5 336.4l0.2 4.3M499.2 344.3l0.2 3.3M499.7 350.9l0.1 2.9M499.9 358.1l0.1 2.6M500.1 364.6l0.2 4.4M500.4 372.7l0.1 2.6M501.6 389.8l0.2 4.6M501.7 395.5l0.2 3.8M502.2 401.8l0.1 2.6M502.7 411.6l0.2 4.8M502.9 419.2l0.2 3.1M503.3 423.8l0.2 3.8M503.4 430.3l0.2 3.0M503.9 437.0l0.1 2.5M504.1 449.7l0.1 3.2M509.6 315.5l0.6 3.0M511.3 355.8l0.7 3.6M511.9 368.9l0.7 3.7M512.9 381.2l0.6 3.2M514.0 403.8l0.6 3.0M514.4 416.6l0.7 3.5M515.0 428.4l0.7 3.6M515.4 437.1l0.9 4.3M516.0 446.6l0.6 3.0M517.4 469.4l0.0 0.8M517.4 476.1l0.0 2.0M517.4 483.6l0.0 1.7M517.1 490.2l0.0 1.2M517.7 495.8l0.0 1.4M517.4 502.3l0.0 1.3M518.0 514.5l0.0 1.5M518.0 521.6l0.0 1.4M518.0 535.0l0.0 1.4M518.3 546.6l0.0 2.1M518.5 559.4l0.0 1.1M518.5 566.9l0.0 1.1M518.2 573.4l0.0 1.1M521.1 348.3l0.9 4.3M522.0 359.7l0.6 2.8M522.9 382.7l0.8 3.8M523.8 406.1l0.8 4.2M525.0 417.5l0.7 3.6M525.7 440.0l0.8 4.2M526.4 450.6l0.6 3.4M527.0 462.5l0.0 1.3M527.4 469.7l0.0 1.4M527.5 476.0l0.0 0.8M527.4 481.3l0.0 1.5M527.3 488.8l0.0 1.2M527.4 496.1l0.0 1.7M527.6 502.4l0.0 1.7M527.5 508.9l0.0 2.0M528.1 514.7l0.0 2.1M528.1 520.8l0.0 1.9M527.9 541.9l0.0 0.9M528.6 563.5l0.0 1.6M529.2 601.3l0.0 1.1M528.6 340.9l0.9 4.4M531.2 392.4l0.7 3.6M531.3 403.2l0.7 3.3M532.2 415.5l0.6 3.2M532.6 424.6l0.8 3.9M533.3 437.5l0.6 2.9M534.0 455.1l0.8 4.3M534.9 468.3l0.0 0.9M534.9 473.9l0.0 1.0M534.7 481.1l0.0 1.4M535.3 486.9l0.0 2.1M535.4 494.2l0.0 1.8M535.2 501.0l0.0 1.2M535.5 528.2l0.0 1.1M535.7 535.0l0.0 2.1M536.0 548.6l0.0 1.2M535.6 554.5l0.0 1.7M536.0 561.3l0.0 1.4M536.1 567.3l0.0 1.9M536.1 574.5l0.0 1.4M536.1 587.7l0.0 1.1M536.3 594.7l0.0 1.5M538.1 387.2l0.6 3.2M539.0 400.1l0.6 3.2M541.0 437.0l0.5 2.7M541.1 449.1l0.7 3.4M542.3 468.0l0.1 2.1M542.6 479.8l0.0 2.0M542.4 492.7l0.0 1.5M542.7 505.2l0.0 1.2M542.9 511.6l0.0 1.5M543.3 540.9l0.0 1.9M543.1 546.7l0.0 2.0M543.4 580.0l0.0 1.2M546.2 386.0l0.7 3.6M546.6 398.6l0.6 3.0M547.2 408.6l0.6 2.9M548.2 429.1l0.7 3.5M548.9 440.2l0.6 3.2M549.2 452.2l0.6 2.9M550.1 468.1l0.0 0.8M550.2 474.0l0.0 1.2M550.7 493.7l0.0 1.0M550.8 501.1l0.0 1.0M551.0 507.3l0.0 1.0M550.9 514.8l0.0 0.9M551.1 528.6l0.0 0.8M551.3 561.4l0.0 1.4M551.5 575.6l0.0 2.1M557.5 391.6l0.8 3.9M559.1 425.7l0.7 3.4M559.5 435.3l0.7 3.7M559.8 445.0l0.7 3.7M560.5 453.6l0.7 3.6M560.9 463.5l0.0 0.8M561.3 476.8l0.0 1.3M561.4 482.6l0.0 2.2M561.8 489.1l0.0 1.1M561.5 495.8l0.0 1.7M562.0 509.8l0.0 1.2M561.8 515.6l0.0 2.0M561.8 529.3l0.0 1.3M562.2 535.0l0.0 1.4M562.3 541.8l0.0 1.2M562.0 548.8l0.0 1.9M566.1 401.8l0.6 3.1M566.6 411.4l0.9 4.3M569.5 467.1l0.1 2.1M569.6 474.1l0.0 1.2M569.9 507.8l0.0 1.0M570.0 519.0l0.0 2.0M574.5 392.6l0.8 4.1M577.4 447.2l0.5 2.7M578.4 469.7l0.0 0.8M578.3 482.8l0.0 1.2M578.7 488.9l0.0 1.0M578.7 508.2l0.0 1.1M585.0 422.8l0.5 2.6M586.1 443.8l0.8 4.1M587.6 472.6l0.0 1.7M587.8 513.2l0.0 1.4M593.8 425.8l0.9 4.3M597.1 514.4l0.0 1.0M602.2 441.0l0.8 4.2M603.5 473.2l0.0 1.4" stroke="#ffff00" stroke-width="2.1" stroke-linecap="round" fill="none"/>
<path d="M116.4 480.2l0.0 3.6M117.0 490.6l0.0 3.0M117.0 500.1l0.0 2.9M117.2 510.1l0.0 2.3M117.3 522.4l0.1 5.1M117.6 535.7l0.1 4.8M117.8 548.7l0.1 4.5M117.4 558.4l0.0 3.3M117.9 564.9l0.0 2.3M117.7 575.3l0.0 2.4M118.2 583.9l0.1 4.6M118.2 593.4l0.0 3.0M118.1 609.2l0.0 3.7M133.8 462.6l0.2 2.8M133.9 475.4l0.1 4.0M134.3 485.7l0.0 3.6M134.2 498.5l0.0 2.9M134.7 508.2l0.0 2.2M134.9 530.1l0.0 3.1M134.8 540.8l0.0 3.0M135.2 562.7l0.0 2.5M135.4 571.9l0.1 4.8M135.2 589.7l0.0 2.5M135.9 609.3l0.0 3.0M135.9 622.7l0.0 3.9M149.4 479.3l0.1 5.1M150.2 507.3l0.1 4.8M150.4 527.3l0.0 4.0M150.7 551.8l0.1 4.5M150.8 561.7l0.1 5.3M151.1 569.8l0.0 3.8M150.7 582.7l0.0 3.2M151.1 596.4l0.0 3.1M151.3 631.0l0.1 5.8M166.7 462.5l0.1 2.3M167.3 471.2l0.1 3.0M167.1 482.4l0.1 4.4M167.3 502.3l0.1 5.5M167.7 508.9l0.1 5.6M167.5 526.8l0.1 5.9M168.3 550.8l0.0 3.5M168.2 558.6l0.1 5.4M168.5 574.0l0.1 4.6M168.6 581.4l0.0 2.8M168.4 589.5l0.0 3.6M168.9 597.2l0.0 3.4M168.5 604.1l0.0 4.0M168.9 626.2l0.0 3.5M169.3 641.0l0.1 4.9M185.8 483.3l0.0 2.5M185.9 490.2l0.1 5.4M185.9 502.6l0.1 4.8M186.3 513.9l0.0 3.8M186.2 533.6l0.0 3.2M186.2 539.9l0.0 4.1M186.4 548.3l0.0 2.1M186.7 567.7l0.0 2.3M186.6 574.3l0.1 4.3M186.7 583.1l0.1 4.7M187.0 589.1l0.1 5.7M187.6 634.0l0.1 5.0M204.2 461.6l0.3 4.8M205.0 485.7l0.0 3.4M205.0 494.3l0.0 3.6M205.1 506.2l0.0 3.7M205.2 518.4l0.0 2.5M205.5 533.5l0.0 3.7M205.4 548.0l0.0 2.8M205.6 552.9l0.1 5.5M205.7 561.0l0.0 2.6M205.8 581.2l0.0 2.5M205.7 587.0l0.1 4.8M205.9 597.0l0.1 5.9M206.5 603.9l0.1 5.1M220.2 462.7l0.2 4.3M220.7 475.4l0.1 4.9M220.6 483.9l0.1 5.1M220.9 492.0l0.0 2.8M220.7 500.9l0.1 4.3M221.3 512.0l0.0 2.2M221.2 525.1l0.0 2.8M221.6 557.8l0.0 2.9M221.6 569.3l0.0 2.2M221.8 577.4l0.0 2.1M221.7 583.1l0.0 3.9M235.6 462.4l0.2 3.6M235.8 473.0l0.1 2.9M236.5 490.1l0.1 5.9M236.4 496.9l0.1 5.1M236.8 510.8l0.1 4.6M237.0 522.3l0.1 5.3M237.0 533.9l0.0 3.3M236.9 543.2l0.0 2.6M237.0 563.6l0.1 5.7M237.3 576.3l0.1 5.4M237.5 596.2l0.1 5.3M237.6 618.1l0.0 3.0M253.4 463.2l0.1 2.4M253.5 472.1l0.1 4.8M253.9 484.3l0.1 5.7M254.2 519.4l0.0 3.8M254.6 527.3l0.0 3.9M254.1 534.9l0.0 2.2M254.6 554.0l0.0 2.8M254.5 561.9l0.1 5.7M255.4 605.2l0.0 3.4M255.7 629.6l0.1 5.1M267.0 460.6l0.3 5.5M267.4 467.2l0.2 5.8M267.9 480.4l0.1 4.8M267.9 490.9l0.0 3.0M268.0 497.5l0.0 2.4M267.8 505.8l0.1 5.2M268.1 517.5l0.0 2.8M268.4 524.8l0.0 3.2M268.6 534.4l0.0 3.8M268.5 541.4l0.0 3.2M268.4 554.0l0.0 2.8M268.9 566.5l0.0 2.2M268.8 574.7l0.0 3.6M269.4 614.8l0.0 3.6M269.5 643.0l0.0 3.3M286.1 471.9l0.1 2.8M286.3 477.9l0.1 4.9M286.8 528.1l0.1 5.4M287.3 552.2l0.1 4.7M287.1 560.3l0.1 5.8M287.6 584.6l0.0 2.2M287.5 597.1l0.1 5.0M288.1 622.0l0.0 2.7M288.1 631.4l0.0 2.0" stroke="#ffff00" stroke-width="2.0" stroke-linecap="round" fill="none"/>
<path d="M105.4 335.4l1.4 3.8M106.6 342.7l1.3 3.6M107.3 351.5l1.0 2.7M108.4 358.3l1.3 3.7M109.4 365.5l1.1 2.9M110.0 372.7l1.1 3.1M110.8 379.5l1.8 4.8M111.9 388.8l1.0 2.8M113.7 404.4l1.2 3.3M114.1 411.8l1.8 4.9M115.0 420.1l1.5 4.1M118.1 448.2l1.6 4.7M116.8 278.6l1.1 3.0M119.3 300.4l1.1 3.1M120.9 315.1l1.2 3.2M123.1 334.2l1.4 3.9M123.8 341.0l1.4 3.9M124.6 347.9l1.5 4.2M125.9 357.1l1.0 2.7M126.6 363.5l1.4 3.8M127.3 371.8l1.3 3.5M128.1 378.0l1.3 3.5M132.2 414.2l1.1 3.0M132.8 419.6l1.6 4.4M133.1 425.5l1.9 5.2M134.7 434.5l1.3 3.5M136.0 450.4l1.2 3.5M130.8 266.1l1.0 2.6M133.0 281.4l0.8 2.2M133.2 287.4l0.9 2.6M136.2 310.1l1.0 2.7M137.0 317.9l0.8 2.3M137.3 323.8l1.1 3.1M138.0 330.3l0.9 2.5M139.3 342.4l1.4 3.8M140.0 349.6l1.5 4.1M140.9 356.4l1.6 4.5M141.9 363.7l1.5 4.2M142.6 370.7l1.4 3.8M144.1 384.3l1.8 4.9M145.1 391.4l1.5 4.0M145.9 398.4l1.5 4.1M146.5 406.0l1.1 3.1M149.1 428.4l1.8 4.9M149.5 435.2l1.9 5.1M151.5 449.3l1.6 4.5M151.1 288.1l1.1 3.1M151.5 295.0l1.0 2.8M152.7 302.8l1.1 3.1M153.3 310.3l1.4 3.8M157.4 348.3l1.4 3.8M158.3 356.3l1.1 3.2M160.4 371.5l1.2 3.2M162.6 393.9l1.2 3.4M163.4 400.4l1.3 3.5M164.2 408.0l1.4 3.8M165.9 422.4l1.0 2.9M167.5 436.1l1.3 3.4M168.6 443.7l1.5 4.2M169.4 452.4l1.0 2.9M167.8 274.5l1.1 3.0M170.2 296.2l1.5 4.0M171.3 305.3l0.9 2.4M174.7 333.9l1.4 3.9M175.4 340.4l1.2 3.4M176.4 353.3l1.7 4.6M177.6 360.1l1.7 4.6M180.0 384.9l1.7 4.7M181.7 400.7l1.6 4.5M183.4 409.3l1.0 2.8M183.6 416.5l1.9 5.1M185.3 430.4l1.8 4.9M187.8 454.6l1.5 4.6M187.6 280.5l1.1 3.0M188.6 287.3l1.0 2.8M189.8 300.5l1.0 2.7M191.7 314.2l1.1 2.9M191.9 320.0l1.5 4.1M193.8 334.5l1.3 3.7M195.2 349.2l0.9 2.6M195.7 355.1l1.1 3.1M200.6 397.8l1.1 3.1M203.1 417.3l1.7 4.7M203.9 425.3l1.3 3.6M204.7 431.9l1.1 3.0M205.4 438.8l1.7 4.8M206.1 447.1l1.6 4.6M205.6 299.2l1.1 3.0M206.7 307.0l1.4 3.9M208.7 328.6l1.3 3.5M209.7 335.2l1.1 3.0M210.2 342.2l1.6 4.5M211.2 349.3l1.1 2.9M212.9 363.9l1.3 3.5M214.0 371.1l1.4 3.8M215.0 384.7l1.5 4.1M216.9 397.8l1.3 3.6M217.5 404.4l1.7 4.8M218.5 412.9l1.3 3.6M219.2 419.2l1.1 3.0M219.9 425.6l1.7 4.7M220.4 432.8l1.5 4.1M221.4 441.1l1.2 3.3M216.8 262.7l1.3 3.7M218.1 271.1l1.2 3.2M220.6 292.3l1.1 3.0M223.1 314.9l0.9 2.4M223.8 321.0l1.3 3.6M224.2 328.0l0.9 2.5M226.6 348.3l1.3 3.7M228.8 364.5l1.0 2.6M230.7 386.8l1.2 3.3M231.5 393.7l1.5 4.2M232.6 400.8l1.1 3.1M233.2 409.0l1.3 3.5M234.0 416.4l1.6 4.3M235.4 424.0l1.3 3.7M235.7 430.5l1.8 5.1M237.0 437.9l1.3 3.6M238.2 451.0l1.6 4.6M235.2 270.2l1.1 2.9M238.8 300.1l1.4 3.7M239.7 307.5l0.9 2.4M240.8 319.1l1.5 4.0M243.8 347.8l1.3 3.7M244.7 355.1l1.4 4.0M246.7 369.4l1.3 3.7M247.3 377.3l1.1 3.1M248.3 383.8l1.1 2.9M249.1 390.9l1.5 4.0M250.6 405.2l1.8 5.0M251.7 413.9l1.0 2.8M252.5 419.8l1.2 3.4M253.8 434.0l1.5 4.2M255.0 441.1l1.1 3.1M248.7 264.4l1.3 3.6M250.2 279.5l1.2 3.2M252.1 294.1l1.2 3.3M254.3 314.9l1.2 3.3M256.0 330.0l0.9 2.4M257.6 344.0l1.5 4.0M261.1 374.0l1.1 3.1M261.4 380.7l1.6 4.4M262.8 388.3l1.5 4.1M263.2 395.9l1.6 4.4M264.0 402.1l1.5 4.1M266.9 425.1l1.3 3.6M267.7 432.8l1.6 4.3M269.2 447.6l1.6 4.7M270.0 454.7l1.4 4.3M267.5 267.0l1.0 2.7M268.1 274.6l1.1 3.0M270.2 289.8l1.2 3.3M271.3 298.0l1.2 3.2M271.6 304.1l1.3 3.7M274.4 326.3l1.0 2.7M275.5 339.5l1.2 3.3M276.3 346.7l1.4 3.8M278.2 360.4l1.2 3.3M279.7 376.4l1.6 4.5M281.8 391.7l1.2 3.4M282.4 400.1l1.3 3.6M283.6 412.7l1.9 5.1M286.3 434.0l1.9 5.1M287.1 440.7l1.8 4.9M288.3 449.3l1.3 3.7M280.4 263.6l1.3 3.5M284.5 293.9l0.8 2.3M287.1 317.0l0.9 2.5M287.3 324.3l1.5 4.0M289.1 339.0l1.0 2.7M290.2 345.7l1.0 2.8M290.5 352.3l1.6 4.3M292.3 367.5l1.0 2.7M293.2 373.7l1.1 3.0M293.8 379.4l1.6 4.4M294.5 387.8l1.3 3.5M295.8 396.3l1.2 3.4M296.5 402.5l1.3 3.5M297.3 410.4l1.1 3.0M297.8 416.1l1.3 3.6M299.4 429.4l1.8 4.9M299.8 436.2l1.6 4.5M300.6 443.9l1.8 4.9M301.9 450.3l1.5 4.3M294.4 276.7l1.1 3.0M295.7 283.3l0.9 2.3M299.2 314.0l0.9 2.6M299.4 320.4l1.3 3.6M300.3 327.3l1.5 4.1M301.5 335.1l1.1 3.1M302.0 342.2l1.0 2.7M302.7 349.8l1.5 4.1M303.6 356.4l1.6 4.4M304.4 364.2l1.2 3.2M305.6 371.9l1.6 4.3M306.2 379.2l1.7 4.8M307.1 387.1l1.0 2.8M307.6 393.6l1.5 4.2M308.8 401.7l1.1 3.1M309.4 409.4l1.5 4.2M311.1 424.0l1.7 4.8M312.1 432.3l1.3 3.6M312.9 439.6l1.5 4.0M313.5 446.9l1.6 4.5M314.4 453.4l1.2 3.7M306.5 266.5l1.0 2.8M308.2 280.1l1.3 3.6M308.6 286.8l1.2 3.4M310.4 300.1l1.2 3.3M312.9 322.8l0.9 2.6M314.7 336.6l1.2 3.3M315.6 343.9l1.2 3.3M315.7 349.6l1.5 4.1M316.6 357.7l1.3 3.5M317.8 364.0l1.1 3.1M318.1 371.6l1.4 4.0M319.2 380.2l1.0 2.9M320.1 386.6l1.4 3.9M321.0 394.5l1.5 4.1M321.7 401.7l1.0 2.8M322.3 407.1l1.8 4.8M323.0 414.1l1.8 4.9M323.9 421.8l1.1 2.9M324.8 429.1l1.9 5.2M326.0 437.4l1.7 4.7M326.8 445.0l1.5 4.3M327.5 453.1l1.1 3.2M325.6 262.5l0.7 2.0M326.6 269.9l0.9 2.6M328.0 285.2l1.2 3.2M328.8 292.9l1.3 3.5M329.4 299.3l1.4 3.8M330.3 305.6l1.5 4.1M332.1 321.5l1.0 2.8M334.5 341.7l1.1 3.1M335.3 350.1l1.1 2.9M335.8 355.8l1.5 4.2M336.7 363.2l1.6 4.5M337.8 372.2l1.1 2.9M338.8 379.0l1.2 3.2M340.1 392.9l1.5 4.2M340.4 399.2l1.7 4.7M341.5 407.6l1.2 3.3M342.7 415.7l1.5 4.0M343.7 423.6l1.2 3.3M345.2 437.2l1.1 3.0M345.7 444.8l1.2 3.3M347.0 452.5l1.3 3.9M342.0 295.5l0.9 2.5M343.2 303.3l1.1 3.0M344.0 311.1l1.5 4.0M344.9 319.0l1.1 3.1M345.4 326.5l1.2 3.4M346.3 334.9l1.2 3.2M348.3 348.9l0.9 2.5M349.2 356.1l1.1 3.1M350.0 363.7l0.9 2.6M350.4 371.2l1.2 3.4M353.0 393.7l1.5 4.2M355.1 408.9l1.4 3.9M355.9 415.5l1.1 3.0M356.3 422.3l1.1 3.0M357.3 429.7l1.8 5.0M358.4 438.3l1.5 4.2M359.1 446.4l1.4 4.0M360.0 454.0l1.0 3.0M352.5 280.2l1.2 3.3M353.7 287.5l0.9 2.4M354.8 301.8l1.1 3.0M357.6 323.6l1.3 3.6M358.4 331.2l1.5 4.0M359.8 344.1l1.5 4.0M360.7 352.0l1.6 4.5M362.5 367.0l1.4 3.8M363.2 375.4l1.1 3.0M364.3 381.7l1.4 4.0M364.8 390.3l1.1 3.0M365.9 396.5l1.5 4.1M366.8 404.7l1.1 3.0M367.4 411.0l1.0 2.9M368.1 416.3l1.6 4.3M368.4 422.5l1.5 4.2M369.1 429.0l1.6 4.5M370.0 437.1l1.6 4.4M371.2 444.6l1.2 3.2M371.3 450.2l1.7 4.9M363.8 262.3l1.1 3.0M364.5 270.1l1.2 3.3M365.8 283.1l0.8 2.3M367.9 302.5l1.0 2.7M368.7 308.6l1.2 3.3M369.9 316.9l1.0 2.8M370.5 325.2l1.1 3.0M371.0 332.3l1.3 3.7M373.6 351.4l1.7 4.6M374.9 360.8l1.0 2.7M375.5 368.2l1.3 3.5M376.1 374.7l1.8 4.9M377.0 381.6l1.2 3.4M377.9 388.1l1.1 2.9M378.7 395.8l1.6 4.5M379.6 403.9l1.2 3.4M379.9 409.8l1.3 3.7M381.3 417.9l1.2 3.3M381.3 425.1l1.9 5.2M382.6 431.9l1.6 4.5M383.2 440.2l1.5 4.3M384.6 447.8l1.4 3.9M384.7 453.9l1.2 3.7M380.0 279.3l0.9 2.4M381.0 286.2l0.9 2.5M381.6 293.0l0.9 2.4M382.6 299.4l0.9 2.5M383.5 311.8l1.5 4.0M384.2 318.2l1.3 3.7M386.7 339.5l1.0 2.8M387.3 345.2l1.3 3.5M388.3 351.8l1.1 2.9M389.0 359.4l1.4 3.9M390.0 366.0l1.4 4.0M390.8 372.8l1.2 3.2M391.7 380.7l1.1 3.1M391.8 387.1l1.7 4.6M393.0 394.7l1.0 2.8M394.1 402.5l1.3 3.5M394.2 408.5l1.6 4.5M395.6 417.4l1.3 3.5M396.5 424.5l1.1 3.2M397.2 431.1l1.3 3.7M397.5 438.2l1.8 4.8M399.3 452.6l1.6 4.9M395.5 267.1l1.0 2.8M395.6 273.3l1.2 3.4M397.2 286.7l1.2 3.5M398.0 294.4l1.3 3.6M400.2 311.5l0.8 2.3M400.1 317.0l1.4 3.9M401.3 325.0l1.4 4.0M401.9 332.8l1.0 2.9M402.7 339.3l1.5 4.3M403.5 347.8l1.3 3.6M404.2 354.8l1.4 3.9M405.0 363.5l1.1 3.0M405.7 369.9l1.5 4.2M407.4 384.8l1.2 3.4M408.0 393.1l1.2 3.4M408.7 400.5l1.4 4.1M409.3 407.0l1.8 5.2M410.9 419.5l1.7 4.7M411.8 428.3l1.3 3.8M412.7 435.0l1.2 3.4M413.0 441.8l1.1 3.2M413.7 447.3l1.5 4.4M414.4 453.8l1.1 3.4M409.2 265.8l1.2 3.4M409.8 272.1l1.1 3.2M410.4 278.6l1.0 2.8M412.1 293.1l1.0 2.8M412.8 300.4l0.8 2.3M413.8 313.4l0.9 2.7M416.0 335.3l1.1 3.3M416.5 343.4l1.1 3.1M417.7 357.7l1.6 4.5M418.9 365.8l1.1 3.2M419.2 371.6l1.3 3.9M419.9 378.7l1.4 4.2M420.3 385.6l1.6 4.7M421.3 393.3l1.5 4.4M421.7 400.6l1.1 3.1M422.5 407.7l1.4 4.1M423.1 414.6l1.7 5.0M423.8 423.5l1.3 3.7M424.9 430.7l1.0 2.8M425.1 438.0l1.4 4.1M426.4 446.3l1.1 3.3M426.8 453.3l1.5 4.7M422.2 273.2l0.7 2.2M422.5 279.6l0.7 2.1M423.4 287.6l0.9 2.6M424.5 301.2l1.3 3.9M425.1 308.1l1.1 3.3M426.4 322.8l1.3 3.9M426.9 330.9l1.1 3.3M427.8 339.3l0.9 2.5M428.1 346.9l1.5 4.4M429.2 354.7l0.9 2.6M429.9 370.0l1.2 3.4M430.8 376.2l1.6 4.8M431.3 384.8l1.0 3.1M432.2 391.9l1.3 3.8M432.7 398.5l1.0 2.9M432.7 405.0l1.7 5.0M433.8 412.2l1.2 3.5M434.2 417.8l1.5 4.6M434.7 424.7l1.0 3.0M435.3 431.8l1.5 4.3M436.2 438.7l1.1 3.2M436.5 444.2l1.4 4.3M437.2 450.7l1.2 3.7M436.9 264.2l0.7 2.2M437.5 279.3l0.9 2.7M438.4 286.2l1.2 3.7M439.1 293.6l0.7 2.3M439.6 307.2l1.1 3.4M440.6 315.6l1.0 3.0M440.9 324.2l0.8 2.4M442.1 338.9l0.9 2.7M442.5 345.8l1.4 4.2M443.6 353.5l0.9 2.7M443.5 359.0l1.5 4.7M443.8 365.4l1.5 4.5M444.9 373.5l1.2 3.6M445.3 381.7l1.0 3.0M445.6 388.9l1.1 3.4M446.2 395.7l1.2 3.8M446.5 402.0l1.3 3.9M447.2 409.4l1.4 4.2M447.9 416.0l1.7 5.2M448.5 423.0l1.2 3.7M448.7 430.3l1.7 5.2M449.6 437.9l1.0 3.1M450.1 444.8l1.0 2.9M450.3 451.3l1.0 3.2M449.7 286.0l1.2 3.8M450.6 293.7l0.9 2.8M451.2 300.7l0.9 3.0M451.5 308.5l1.1 3.3M451.8 316.7l1.0 3.0M452.6 323.5l0.9 2.9M453.3 336.6l1.4 4.3M454.9 358.2l1.0 3.2M456.3 379.0l1.5 4.7M456.6 388.1l1.0 3.2M457.5 394.9l0.9 2.9M457.9 402.6l0.9 3.0M457.9 407.6l1.6 5.0M458.5 416.5l1.0 3.2M459.4 430.0l1.4 4.4M460.2 438.3l1.1 3.4M460.8 446.4l1.3 4.2M461.2 453.0l1.0 3.4M459.7 269.6l0.7 2.3M460.3 276.6l0.7 2.2M460.7 283.1l0.7 2.4M460.8 290.8l0.9 3.1M461.3 298.5l0.7 2.4M461.4 305.3l1.2 4.0M462.4 313.8l0.8 2.6M463.0 321.1l0.8 2.6M462.7 326.7l1.3 4.1M463.9 343.1l0.9 3.0M464.8 356.4l1.2 3.8M465.5 364.1l0.8 2.7M465.5 371.7l1.2 3.8M466.1 377.9l1.2 3.9M466.8 386.4l1.1 3.5M466.9 393.1l1.5 4.9M467.0 401.5l1.5 4.8M468.1 409.3l1.3 4.2M468.1 416.9l1.3 4.3M468.8 425.2l1.1 3.6M469.2 431.3l1.3 4.1M469.9 443.5l1.5 4.8M470.3 451.2l1.4 4.8M467.0 264.8l0.7 2.4M467.8 272.5l0.7 2.3M467.8 278.9l0.8 2.7M468.2 286.8l0.7 2.3M468.9 293.0l0.8 2.6M469.7 307.5l1.0 3.2M470.3 321.2l1.0 3.4M470.9 329.0l0.9 2.9M471.1 336.4l1.3 4.3M471.2 343.4l1.0 3.3M472.1 358.7l1.3 4.3M472.3 367.1l1.3 4.2M473.1 374.1l1.1 3.5M473.6 381.9l1.2 3.9M473.7 390.5l1.1 3.7M474.1 397.3l1.0 3.4M474.5 405.0l1.2 4.0M474.7 412.6l1.5 4.9M475.4 419.6l0.9 2.9M476.0 428.0l0.9 2.9M476.5 441.7l1.4 4.6M477.0 448.0l1.5 5.0M477.4 264.8l0.7 2.3M478.2 279.9l0.8 2.8M479.5 309.0l1.0 3.5M480.4 316.9l1.0 3.3M480.5 323.7l1.2 4.0M480.8 330.3l0.9 3.0M481.4 343.1l1.3 4.2M481.6 351.4l1.0 3.2M482.7 365.1l1.1 3.6M483.4 379.1l1.2 3.9M484.0 392.9l1.5 5.1M484.5 400.3l1.1 3.8M484.5 406.4l1.1 3.7M484.6 413.4l1.4 4.6M485.0 420.1l1.4 4.6M485.5 426.6l1.5 5.1M486.0 435.1l1.2 4.0M486.4 442.8l1.5 5.2M486.7 450.5l1.1 3.7M488.9 273.4l0.8 2.6M489.4 280.2l0.9 2.8M490.3 294.7l1.0 3.4M490.6 302.3l0.9 3.1M491.7 323.1l1.0 3.2M492.3 330.4l0.8 2.8M492.6 337.2l0.9 3.1M492.6 345.2l0.9 3.1M493.0 351.4l1.2 4.1M493.5 359.5l1.2 4.2M493.8 368.0l1.1 3.7M494.4 382.0l1.0 3.5M495.2 398.7l1.0 3.4M495.8 405.1l1.5 4.8M496.1 420.1l1.3 4.4M496.5 426.3l1.2 4.1M496.6 432.9l1.4 4.8M497.7 442.1l0.9 3.1M497.4 448.1l1.5 5.2M498.5 266.7l0.8 2.8M499.2 274.3l0.6 2.2M499.3 280.0l1.0 3.4M499.4 288.4l1.0 3.2M500.2 297.0l0.7 2.5M500.8 318.2l1.1 3.8M501.5 326.7l0.9 2.9M501.9 338.6l1.1 3.7M502.0 345.9l1.4 4.5M502.7 354.8l0.8 2.7M502.8 360.7l1.2 4.1M503.4 368.6l1.4 4.8M503.6 377.0l1.0 3.3M504.4 384.1l1.4 4.7M504.7 392.0l0.9 2.9M504.8 397.9l1.4 4.7M505.4 406.1l1.2 3.9M505.6 413.1l1.0 3.3M505.6 419.8l1.5 5.2M506.6 427.7l0.9 3.1M506.9 433.5l1.2 4.2M507.7 448.4l0.9 3.1M507.4 454.2l1.4 4.8" stroke="#ffff00" stroke-width="1.9" stroke-linecap="round" fill="none"/>
<path d="M104.1 354.0l0.0 0.3M105.2 361.9l0.1 0.7M105.9 366.4l0.1 0.8M106.0 371.1l0.1 0.8M108.4 388.4l0.1 0.7M109.2 397.4l0.1 0.8M109.8 402.1l0.0 0.4M110.4 410.2l0.1 0.6M110.8 414.4l0.1 0.9M111.8 418.9l0.0 0.2M112.0 422.5l0.0 0.3M113.1 430.8l0.0 0.2M114.0 439.6l0.0 0.3M114.7 444.1l0.0 0.2M114.6 448.0l0.1 0.5M115.1 451.9l0.1 0.6M113.7 280.9l0.1 0.5M114.1 288.6l0.0 0.2M114.6 292.8l0.0 0.2M118.2 322.1l0.1 0.5M118.8 326.7l0.1 0.5M119.9 339.3l0.0 0.4M121.4 352.4l0.1 0.5M121.9 356.6l0.0 0.4M123.1 365.1l0.1 0.6M123.2 369.0l0.1 0.5M123.7 373.6l0.0 0.4M125.0 382.1l0.0 0.3M125.8 390.9l0.1 0.8M127.2 399.8l0.1 0.6M128.8 416.2l0.1 0.5M129.0 420.6l0.1 0.4M129.9 424.4l0.1 0.7M130.5 433.1l0.1 0.7M131.4 437.7l0.1 0.5M131.5 442.3l0.0 0.4M132.1 446.2l0.1 0.7M132.8 450.5l0.0 0.3M132.9 455.1l0.0 0.5M127.6 266.9l0.0 0.4M127.8 271.7l0.0 0.4M128.3 275.7l0.1 0.6M129.6 287.8l0.0 0.3M132.0 308.9l0.0 0.2M132.8 317.5l0.1 0.7M133.8 325.4l0.1 0.7M134.7 329.7l0.1 0.6M135.7 337.8l0.1 0.7M136.7 351.3l0.1 0.7M137.2 355.2l0.1 0.8M138.9 371.7l0.1 0.5M139.9 376.5l0.0 0.2M140.7 384.8l0.0 0.3M141.1 389.0l0.0 0.3M141.9 393.0l0.0 0.4M142.2 397.7l0.1 0.5M143.5 406.9l0.1 0.5M144.8 419.1l0.1 0.6M144.8 422.8l0.1 0.8M145.3 426.8l0.1 0.9M145.7 430.9l0.1 0.7M146.3 435.4l0.1 0.6M147.2 440.0l0.1 0.6M147.2 444.3l0.0 0.3M148.1 448.3l0.1 0.8M148.3 452.7l0.0 0.3M146.7 283.8l0.0 0.4M147.4 287.9l0.1 0.6M148.4 296.3l0.1 0.4M150.0 313.2l0.1 0.7M151.1 322.1l0.0 0.2M151.5 325.8l0.0 0.2M152.1 329.9l0.1 0.5M153.6 346.8l0.1 0.5M154.8 354.9l0.1 0.7M155.1 359.4l0.1 0.6M155.9 363.8l0.0 0.2M156.3 367.6l0.1 0.5M159.5 393.7l0.1 0.5M160.1 401.0l0.1 0.6M160.4 405.5l0.1 0.7M161.1 410.2l0.1 0.8M161.7 414.5l0.1 0.8M162.0 419.3l0.1 0.6M162.6 423.2l0.1 0.7M163.1 428.2l0.0 0.2M163.7 432.0l0.0 0.3M164.2 435.9l0.0 0.3M164.5 439.6l0.1 0.5M166.3 291.7l0.1 0.6M166.9 300.8l0.0 0.2M167.8 305.4l0.1 0.5M168.7 314.5l0.0 0.2M169.8 326.3l0.0 0.4M170.7 330.2l0.1 0.5M171.6 338.8l0.0 0.3M172.8 348.1l0.0 0.3M172.8 352.4l0.0 0.3M174.3 361.1l0.1 0.6M174.2 364.9l0.0 0.2M175.2 368.9l0.0 0.3M175.5 372.6l0.1 0.7M175.9 377.1l0.0 0.2M176.4 381.6l0.1 0.8M177.1 386.3l0.1 0.5M177.8 394.8l0.1 0.9M179.1 403.6l0.0 0.2M179.8 412.0l0.1 0.8M180.0 416.0l0.1 0.6M180.5 420.4l0.0 0.3M182.3 433.9l0.1 0.7M182.9 438.7l0.1 0.5M183.8 447.2l0.0 0.4M184.1 451.9l0.0 0.3M184.5 455.8l0.0 0.6M182.1 264.4l0.0 0.3M185.2 290.3l0.0 0.4M185.5 295.0l0.0 0.4M185.7 298.6l0.1 0.6M186.6 306.5l0.1 0.5M188.0 318.4l0.0 0.2M188.5 322.3l0.0 0.4M189.9 330.6l0.0 0.4M190.8 342.9l0.0 0.4M193.8 367.4l0.1 0.6M194.9 376.9l0.0 0.2M195.4 384.2l0.0 0.3M196.0 388.3l0.0 0.4M196.8 392.6l0.1 0.6M197.7 401.1l0.1 0.6M198.1 404.8l0.1 0.8M198.9 413.0l0.0 0.4M200.0 422.0l0.1 0.6M200.3 426.1l0.0 0.3M200.6 430.5l0.1 0.9M201.3 434.7l0.0 0.3M202.4 446.5l0.1 0.7M203.5 455.0l0.1 0.7M197.9 262.0l0.0 0.3M198.3 265.8l0.0 0.2M199.4 278.4l0.0 0.3M200.8 290.9l0.1 0.5M203.4 311.4l0.1 0.7M206.7 340.2l0.1 0.7M209.6 365.8l0.1 0.7M209.9 370.0l0.1 0.7M213.1 395.5l0.0 0.3M213.5 399.6l0.0 0.3M213.8 403.4l0.0 0.2M214.6 411.4l0.1 0.6M215.2 415.1l0.1 0.6M215.7 419.7l0.1 0.7M216.8 431.8l0.1 0.9M217.7 436.2l0.1 0.8M218.2 440.4l0.1 0.5M219.4 452.4l0.1 0.7M213.7 263.0l0.1 0.6M213.7 267.3l0.0 0.3M214.6 271.8l0.0 0.4M214.8 275.9l0.0 0.2M215.6 284.3l0.0 0.3M217.6 300.4l0.0 0.4M218.2 305.0l0.1 0.6M220.7 325.4l0.0 0.3M221.1 329.4l0.0 0.4M221.2 334.1l0.1 0.5M222.8 343.0l0.1 0.5M223.8 356.4l0.1 0.6M224.3 360.8l0.0 0.3M226.3 376.9l0.0 0.4M227.6 389.9l0.1 0.5M228.7 397.9l0.1 0.8M229.2 402.8l0.1 0.7M229.7 406.6l0.1 0.5M230.7 415.6l0.0 0.3M231.0 419.2l0.1 0.7M231.9 427.0l0.0 0.4M232.8 435.5l0.1 0.5M233.5 439.1l0.0 0.4M233.6 443.7l0.1 0.6M234.5 447.8l0.0 0.2M235.0 455.5l0.0 0.5M231.4 267.7l0.0 0.4M233.2 284.8l0.0 0.2M235.4 301.2l0.1 0.6M235.7 305.1l0.0 0.2M236.5 309.9l0.0 0.2M236.9 317.8l0.0 0.2M238.2 325.6l0.0 0.4M239.9 342.4l0.1 0.7M241.6 358.9l0.0 0.3M242.7 367.0l0.1 0.5M243.9 380.3l0.0 0.3M244.6 384.6l0.1 0.5M245.0 388.7l0.1 0.5M245.6 392.9l0.0 0.3M246.8 404.4l0.1 0.8M247.3 409.2l0.1 0.8M247.7 413.2l0.0 0.3M248.3 417.5l0.0 0.4M249.0 421.5l0.0 0.3M249.1 426.0l0.1 0.6M249.9 430.7l0.1 0.5M251.0 439.9l0.1 0.7M252.0 448.4l0.1 0.7M252.7 456.7l0.0 0.5M245.1 262.0l0.0 0.3M245.1 266.6l0.1 0.5M248.7 295.1l0.1 0.6M249.2 302.5l0.0 0.4M251.8 322.8l0.1 0.5M255.6 354.6l0.1 0.5M256.0 359.2l0.0 0.4M256.0 363.2l0.1 0.8M256.7 367.9l0.1 0.7M257.1 372.7l0.0 0.3M257.8 376.9l0.1 0.5M258.9 386.0l0.1 0.5M259.4 390.3l0.1 0.6M259.5 394.3l0.1 0.8M261.3 407.5l0.1 0.5M262.1 416.7l0.1 0.5M262.8 420.7l0.1 0.7M263.4 425.7l0.0 0.3M264.2 434.3l0.1 0.8M265.2 442.5l0.1 0.8M266.4 451.0l0.0 0.4M266.3 455.5l0.0 0.3M264.2 269.6l0.0 0.4M266.2 286.9l0.1 0.5M267.1 295.3l0.1 0.5M267.8 303.3l0.1 0.6M269.5 315.5l0.1 0.6M270.2 320.1l0.1 0.7M271.3 332.2l0.1 0.6M272.0 340.9l0.0 0.2M273.1 349.2l0.0 0.2M274.7 361.4l0.1 0.7M275.0 366.1l0.1 0.8M275.6 370.6l0.1 0.7M276.0 375.0l0.0 0.3M276.8 379.1l0.0 0.3M277.6 388.0l0.1 0.5M277.7 391.6l0.1 0.7M278.2 395.9l0.1 0.8M279.4 405.4l0.0 0.3M280.3 409.4l0.1 0.5M280.9 417.1l0.0 0.4M281.3 421.2l0.1 0.6M281.7 424.9l0.0 0.4M282.8 433.1l0.1 0.5M283.2 436.9l0.1 0.7M283.8 444.9l0.1 0.6M284.7 452.7l0.0 0.4" stroke="#ffff00" stroke-width="1.8" stroke-linecap="round" fill="none"/>
<path d="M276.5 256.2l0.2 2.0M284.8 327.6l0.4 3.2M286.8 348.3l0.4 3.6M297.9 446.2l0.3 3.3M300.0 469.7l0.1 2.4M300.3 476.4l0.0 2.3M300.5 499.3l0.0 0.8M300.3 503.9l0.0 0.7M300.7 509.7l0.0 1.6M300.8 515.6l0.0 1.9M300.5 520.7l0.0 2.0M300.7 525.6l0.0 1.2M301.0 533.2l0.0 1.9M300.6 540.1l0.0 1.8M301.3 547.8l0.0 2.3M301.2 560.2l0.0 2.5M301.3 565.0l0.0 2.1M301.5 576.5l0.0 0.9M301.2 582.3l0.0 1.9M301.3 588.1l0.0 1.0M301.8 594.0l0.0 1.9M301.6 599.1l0.0 2.2M301.6 607.1l0.0 1.3M302.0 614.6l0.0 0.8M302.1 619.7l0.0 0.7M302.0 644.0l0.0 1.8M290.4 267.0l0.3 2.4M297.3 327.1l0.5 4.2M297.8 335.0l0.3 2.6M300.8 359.5l0.4 3.5M302.2 373.3l0.5 4.2M311.9 463.3l0.0 0.8M312.7 476.4l0.0 2.3M312.5 483.3l0.0 0.8M312.6 489.3l0.0 1.6M312.9 495.3l0.0 1.4M313.2 501.9l0.0 1.2M313.0 507.2l0.0 2.2M313.2 519.4l0.0 1.5M313.2 525.6l0.0 2.2M313.1 531.8l0.0 1.7M313.2 538.6l0.0 0.6M313.2 544.3l0.0 1.9M313.6 557.0l0.0 2.3M313.4 564.0l0.0 2.3M313.7 571.4l0.0 1.7M313.7 589.6l0.0 1.3M314.4 596.0l0.0 2.0M314.5 602.7l0.0 1.5M314.5 614.3l0.0 1.9M314.2 621.3l0.0 1.2M305.8 286.3l0.2 2.1M306.7 297.6l0.4 3.2M309.1 317.7l0.3 2.6M309.7 323.7l0.4 4.0M312.0 341.9l0.2 2.2M315.4 370.8l0.4 3.7M325.4 467.5l0.0 0.8M325.5 471.7l0.1 2.5M326.0 479.7l0.0 1.5M325.9 487.1l0.0 0.8M325.8 491.8l0.0 2.4M326.1 498.6l0.0 2.4M326.2 504.8l0.0 1.8M326.5 535.5l0.0 0.7M326.2 542.7l0.0 0.7M326.6 554.5l0.0 2.1M326.5 566.5l0.0 0.7M326.7 580.2l0.0 2.0M327.1 586.8l0.0 2.1M327.2 593.9l0.0 0.6M327.4 600.0l0.0 1.7M327.4 605.6l0.0 2.1M327.3 612.0l0.0 2.4M327.0 617.2l0.0 1.2M327.2 627.3l0.0 2.1M327.9 635.1l0.0 1.8M327.9 640.7l0.0 1.9M327.5 652.7l0.0 1.3M330.1 332.1l0.4 3.2M344.8 464.7l0.0 0.8M345.0 470.7l0.1 2.3M344.7 476.8l0.0 1.8M345.2 483.6l0.0 1.1M345.0 489.2l0.0 1.9M345.4 494.4l0.0 1.2M345.3 511.0l0.0 1.9M345.5 525.8l0.0 0.9M345.7 532.0l0.0 1.0M345.9 538.4l0.0 1.3M346.0 543.5l0.0 2.0M345.8 558.5l0.0 1.5M346.2 563.7l0.0 1.5M346.0 568.4l0.0 2.0M346.2 581.5l0.0 2.1M346.5 588.6l0.0 1.0M346.7 608.6l0.0 1.1M346.8 615.9l0.0 1.3M346.7 627.3l0.0 2.1M337.4 284.3l0.4 3.7M338.2 291.8l0.4 3.3M352.4 413.4l0.5 4.2M352.8 420.3l0.4 3.4M357.2 464.8l0.1 2.5M357.9 470.9l0.0 0.7M358.3 477.2l0.0 1.7M358.2 484.7l0.0 1.7M358.0 492.2l0.0 1.9M358.1 499.4l0.0 0.9M358.5 505.2l0.0 1.6M358.4 512.0l0.0 1.7M358.2 518.4l0.0 2.0M358.7 529.9l0.0 2.1M358.4 534.7l0.0 2.3M358.8 542.7l0.0 2.1M358.6 547.7l0.0 2.3M359.1 554.1l0.0 0.7M359.1 566.1l0.0 0.7M358.9 570.8l0.0 1.6M359.0 577.9l0.0 1.2M359.1 584.4l0.0 0.9M359.5 591.2l0.0 2.4M359.5 598.0l0.0 2.0M359.5 605.5l0.0 1.2M359.5 617.0l0.0 0.7M359.7 622.0l0.0 1.1M359.6 626.8l0.0 2.1M359.8 634.7l0.0 2.2M359.9 642.6l0.0 2.2M350.6 292.2l0.4 3.2M351.6 299.5l0.3 2.3M359.7 372.8l0.4 4.0M362.6 398.4l0.4 3.2M365.5 421.8l0.4 3.9M369.3 461.6l0.1 2.1M370.0 485.2l0.0 0.9M370.1 489.8l0.0 1.4M370.6 497.1l0.0 0.9M370.6 510.8l0.0 1.9M370.9 523.6l0.0 1.6M370.7 529.2l0.0 1.7M370.8 544.9l0.0 1.0M371.1 550.6l0.0 1.7M371.2 556.6l0.0 1.9M371.1 565.1l0.0 0.7M371.6 570.0l0.0 2.1M371.3 574.8l0.0 2.4M371.6 582.0l0.0 1.0M371.3 589.2l0.0 1.3M371.6 595.5l0.0 1.0M371.8 602.1l0.0 1.2M371.7 606.5l0.0 1.6M371.7 612.9l0.0 1.9M372.0 623.3l0.0 1.0M372.2 629.5l0.0 2.1M372.3 643.0l0.0 0.9M360.0 262.4l0.3 2.3M361.6 274.9l0.2 2.1M382.4 464.6l0.1 1.9M382.9 472.0l0.0 0.7M382.9 478.8l0.0 2.4M383.0 491.8l0.0 1.5M383.4 498.2l0.0 0.8M383.7 511.8l0.0 1.1M383.3 516.5l0.0 2.1M383.4 523.9l0.0 1.3M383.7 529.5l0.0 1.7M384.1 534.9l0.0 0.6M383.7 542.2l0.0 1.3M384.1 549.0l0.0 1.6M384.1 556.7l0.0 1.8M384.2 563.0l0.0 0.9M384.1 568.7l0.0 1.3M384.5 588.5l0.0 2.3M384.4 593.0l0.0 2.2M384.3 598.7l0.0 1.7M384.6 604.3l0.0 0.9M384.8 609.2l0.0 1.4M384.6 616.1l0.0 1.5M384.9 623.5l0.0 2.5M385.2 646.5l0.0 2.3M379.9 309.4l0.3 2.7M382.3 329.2l0.4 4.0M385.7 358.7l0.5 4.2M389.6 391.7l0.3 2.5M390.8 403.8l0.3 3.0M397.4 465.2l0.1 1.4M397.6 470.8l0.1 2.5M397.6 476.9l0.0 0.9M397.7 481.5l0.0 1.3M398.1 489.3l0.0 0.9M398.0 495.9l0.0 1.0M398.1 501.2l0.0 1.5M398.0 506.9l0.0 2.5M398.0 513.3l0.0 2.5M398.0 518.5l0.0 1.6M398.2 528.3l0.0 2.4M398.1 540.4l0.0 0.8M398.7 545.2l0.0 1.5M398.8 553.0l0.0 1.4M398.9 557.8l0.0 1.5M398.8 562.9l0.0 2.2M398.9 570.4l0.0 0.7M399.2 577.5l0.0 0.9M399.2 584.5l0.0 2.4M398.9 592.7l0.0 1.6M399.2 598.2l0.0 1.8M399.2 604.7l0.0 2.2M399.5 612.7l0.0 1.8M399.2 620.5l0.0 1.0M399.5 632.4l0.0 1.6M399.6 645.3l0.0 0.9M390.6 255.4l0.3 2.8M391.6 262.7l0.2 2.3M392.1 268.4l0.4 3.6M392.8 275.4l0.3 3.4M394.4 288.4l0.4 3.7M396.6 313.5l0.4 4.0M399.9 344.9l0.3 3.0M401.6 362.3l0.3 3.1M409.6 436.8l0.3 2.7M411.8 463.3l0.1 1.0M412.4 475.9l0.0 2.4M412.4 481.7l0.0 0.7M412.3 488.2l0.0 1.5M412.5 493.7l0.0 1.4M412.6 501.0l0.0 1.7M413.0 506.3l0.0 1.2M412.7 513.6l0.0 1.5M413.0 519.2l0.0 1.4M412.9 525.6l0.0 1.5M413.3 530.0l0.0 2.0M412.9 537.8l0.0 1.1M413.0 553.0l0.0 0.7M413.6 559.7l0.0 1.0M413.2 566.9l0.0 2.3M413.6 572.7l0.0 0.7M413.9 585.4l0.0 1.4M413.5 591.1l0.0 1.2M414.1 595.9l0.0 1.8M413.9 600.9l0.0 1.6M414.2 607.3l0.0 2.1M414.4 620.9l0.0 1.0M414.6 639.6l0.0 1.3M414.6 644.1l0.0 2.0M405.8 264.0l0.2 1.9M406.9 277.7l0.2 2.0M411.4 319.2l0.3 3.7M415.2 365.6l0.3 3.4M420.5 420.2l0.3 2.8M421.4 426.4l0.4 4.5M424.1 462.3l0.1 1.9M424.4 468.3l0.1 1.9M424.5 473.3l0.1 2.3M424.9 478.8l0.0 2.3M424.5 486.4l0.0 2.3M425.2 502.4l0.0 1.0M425.2 508.3l0.0 1.5M425.1 515.5l0.0 1.8M425.2 523.0l0.0 1.4M425.1 538.2l0.0 2.1M425.4 544.3l0.0 0.7M425.3 550.7l0.0 0.6M425.5 555.1l0.0 1.1M426.0 560.1l0.0 2.0M425.7 574.8l0.0 1.6M426.1 582.6l0.0 1.0M426.3 586.9l0.0 2.5M426.5 609.0l0.0 1.2M426.6 613.2l0.0 2.2M426.2 618.6l0.0 2.4M426.7 632.5l0.0 2.3M426.5 647.8l0.0 2.3M422.5 319.1l0.3 3.2M424.7 342.0l0.3 3.6M434.5 464.5l0.1 2.0M434.8 479.4l0.0 1.6M434.9 484.0l0.0 1.8M435.2 488.3l0.0 2.4M435.5 496.4l0.0 1.9M435.3 504.3l0.0 1.4M435.8 518.8l0.0 0.9M435.4 523.1l0.0 2.4M435.7 528.4l0.0 2.2M435.6 536.7l0.0 1.0M435.9 544.5l0.0 1.3M436.2 562.8l0.0 2.2M436.3 582.6l0.0 1.4M436.4 592.0l0.0 2.4M436.7 605.9l0.0 1.6M436.5 612.6l0.0 1.1M436.7 618.6l0.0 1.2M436.8 623.7l0.0 1.2M436.8 637.9l0.0 1.4M436.0 302.5l0.2 2.6M447.9 465.3l0.1 1.8M448.0 473.2l0.0 0.9M448.7 486.2l0.0 0.7M448.8 490.4l0.0 1.3M448.8 495.0l0.0 2.2M449.0 507.4l0.0 2.2M449.1 514.5l0.0 2.4M449.2 520.8l0.0 1.2M448.7 526.3l0.0 1.4M449.2 537.5l0.0 2.2M449.1 545.7l0.0 1.3M449.0 550.6l0.0 0.9M449.4 555.1l0.0 1.1M449.3 562.5l0.0 1.8M449.7 567.4l0.0 2.4M449.7 581.9l0.0 0.9M449.6 588.8l0.0 2.1M449.7 595.0l0.0 2.1M449.7 601.5l0.0 1.8M450.1 607.1l0.0 1.0M450.2 619.9l0.0 1.7M450.2 625.3l0.0 0.8M450.4 645.1l0.0 1.1M450.5 651.7l0.0 2.5M446.0 277.0l0.2 2.7M458.4 465.3l0.1 2.2M458.5 480.4l0.0 1.5M458.7 488.2l0.0 1.5M458.9 495.4l0.0 0.9M459.1 502.7l0.0 1.3M459.3 522.2l0.0 0.6M459.6 527.4l0.0 2.1M459.2 533.3l0.0 0.9M459.3 540.1l0.0 2.4M459.9 546.2l0.0 2.5M459.4 552.0l0.0 1.3M460.0 558.5l0.0 2.2M460.1 566.7l0.0 1.1M460.1 573.9l0.0 0.8M460.3 585.7l0.0 1.5M460.1 591.6l0.0 2.1M460.2 605.5l0.0 2.1M460.5 610.7l0.0 1.9M460.7 628.1l0.0 2.2M458.1 295.5l0.2 3.2M467.5 464.9l0.0 0.9M467.9 471.3l0.0 1.6M467.8 476.6l0.0 2.3M468.3 489.3l0.0 1.2M468.3 494.1l0.0 1.7M468.4 500.7l0.0 1.6M468.3 508.5l0.0 1.1M468.5 519.5l0.0 2.1M468.8 526.7l0.0 1.4M468.6 532.0l0.0 1.8M468.9 536.8l0.0 1.6M468.6 543.3l0.0 1.3M468.8 558.0l0.0 1.0M469.0 562.3l0.0 1.5M469.3 577.0l0.0 0.8M469.4 584.2l0.0 1.7M469.7 603.9l0.0 1.4M469.8 611.5l0.0 1.2M469.9 619.0l0.0 0.8M469.6 628.7l0.0 1.9M469.9 634.0l0.0 0.6M464.1 269.6l0.1 2.5M465.7 292.2l0.2 3.1M466.9 317.9l0.2 3.3M467.2 324.8l0.2 3.1M469.6 373.6l0.2 2.8M470.7 391.3l0.2 3.0M474.7 467.8l0.0 1.3M475.0 474.2l0.0 0.9M474.6 481.1l0.0 1.6M475.0 485.5l0.0 2.4M474.9 491.6l0.0 0.8M475.1 503.6l0.0 1.6M474.9 508.2l0.0 2.4M475.2 514.4l0.0 1.1M475.4 520.8l0.0 0.7M475.4 531.8l0.0 1.4M475.2 536.7l0.0 0.8M475.7 542.9l0.0 2.5M475.7 547.6l0.0 2.5M475.8 561.1l0.0 0.8M475.7 566.6l0.0 1.3M475.9 572.0l0.0 2.4M475.9 583.6l0.0 2.5M476.1 598.2l0.0 1.9M476.0 603.5l0.0 1.7M476.7 611.6l0.0 1.1M476.3 617.0l0.0 0.7M476.8 626.6l0.0 1.5M476.5 633.8l0.0 2.4M477.0 642.1l0.0 1.6M477.0 647.1l0.0 1.6M478.2 340.7l0.2 3.4M482.9 436.2l0.2 4.5M483.8 464.4l0.1 2.2M484.1 472.2l0.0 2.5M484.3 479.1l0.0 2.0M484.5 485.9l0.0 2.1M484.6 492.1l0.0 0.8M484.5 499.4l0.0 1.4M484.6 506.8l0.0 2.4M484.8 513.8l0.0 1.5M484.8 521.7l0.0 0.8M485.0 527.3l0.0 1.8M484.8 534.1l0.0 2.3M485.4 541.5l0.0 1.0M485.5 547.6l0.0 2.4M485.3 566.9l0.0 0.9M485.4 571.7l0.0 0.7M485.6 581.8l0.0 1.4M485.7 587.1l0.0 1.8M486.0 608.1l0.0 2.2M485.7 613.4l0.0 2.4M486.1 619.5l0.0 0.9M485.9 625.9l0.0 1.5M485.7 268.6l0.1 2.1M486.4 281.5l0.1 1.9M486.8 286.4l0.2 3.7M489.2 341.7l0.2 3.6M494.4 447.6l0.2 3.4M495.2 469.7l0.0 1.5M495.8 477.3l0.0 1.6M495.7 484.6l0.0 1.7M495.9 492.7l0.0 1.5M495.8 500.2l0.0 1.1M496.0 513.2l0.0 1.9M496.1 526.8l0.0 1.1M496.3 534.0l0.0 1.1M496.4 540.2l0.0 0.7M496.4 545.7l0.0 2.3M496.7 551.7l0.0 2.0M496.8 558.8l0.0 2.3M496.8 570.3l0.0 2.3M497.1 583.3l0.0 2.4M497.1 590.4l0.0 0.7M496.8 597.0l0.0 2.3M497.4 603.5l0.0 1.2M497.0 611.1l0.0 1.1M497.1 624.9l0.0 1.6M497.6 629.3l0.0 2.0M497.2 637.1l0.0 2.3M498.5 330.6l0.1 3.0M501.0 379.0l0.2 3.1M504.9 464.7l0.0 1.6M505.0 469.5l0.1 2.4M505.4 485.1l0.0 1.2M505.3 490.3l0.0 2.2M505.1 496.8l0.0 2.4M505.5 509.0l0.0 1.6M505.9 524.0l0.0 1.6M505.6 531.3l0.0 0.7M506.0 536.7l0.0 2.1M505.7 544.2l0.0 2.3M505.8 549.5l0.0 1.5M505.9 556.7l0.0 2.0M506.3 562.6l0.0 1.1M506.3 569.2l0.0 2.2M506.4 576.3l0.0 2.0M506.7 588.7l0.0 1.5M506.7 601.7l0.0 1.5M507.0 607.3l0.0 2.5M506.7 615.4l0.0 1.3M506.8 621.3l0.0 0.8M507.3 632.2l0.0 2.4M506.9 638.5l0.0 1.2M507.0 644.2l0.0 0.7M507.0 650.0l0.0 2.0M513.2 390.9l0.6 3.0M517.9 508.1l0.0 1.2M517.9 529.1l0.0 1.3M518.2 540.4l0.0 1.8M518.1 552.5l0.0 2.0M518.3 579.8l0.0 1.7M518.4 592.4l0.0 0.9M519.0 597.8l0.0 1.1M519.1 623.5l0.0 2.2M518.3 295.7l0.8 4.0M522.5 370.8l0.9 4.4M528.0 528.0l0.0 2.1M527.8 533.9l0.0 2.2M528.8 575.9l0.0 1.3M528.4 581.4l0.0 2.1M528.4 588.0l0.0 1.0M528.6 594.2l0.0 1.9M529.1 625.3l0.0 2.0M527.1 313.5l0.8 4.2M529.6 366.6l0.7 3.6M535.2 507.3l0.0 1.3M535.3 513.9l0.0 2.2M536.6 607.0l0.0 1.0M536.6 627.5l0.0 1.9M535.3 325.4l0.6 3.0M536.4 349.3l0.9 4.3M539.4 412.5l0.8 4.1M540.1 424.2l0.6 2.9M542.4 485.9l0.0 1.8M542.9 523.2l0.0 1.8M543.0 529.4l0.0 1.2M543.3 554.0l0.0 2.0M543.6 560.2l0.0 2.1M543.6 567.5l0.0 2.0M543.5 574.2l0.0 1.1M543.4 585.9l0.0 1.3M543.4 592.3l0.0 2.1M543.0 322.2l0.7 3.5M544.5 350.5l0.8 4.0M550.3 461.8l0.1 2.2M550.5 480.7l0.0 1.7M551.0 534.9l0.0 1.9M551.1 542.7l0.0 1.0M551.2 549.0l0.0 1.1M551.6 555.0l0.0 0.9M551.8 568.7l0.0 1.2M551.7 582.0l0.0 1.0M558.6 414.4l0.5 2.7M561.1 469.5l0.0 1.5M561.5 502.4l0.0 1.7M561.9 523.6l0.0 1.1M562.0 555.4l0.0 1.6M562.4 586.6l0.0 1.9M562.8 592.4l0.0 1.6M565.5 391.0l0.7 3.5M567.2 423.7l0.8 3.9M568.6 455.2l0.7 3.6M569.8 493.3l0.0 1.9M570.2 524.8l0.0 2.0M570.1 531.8l0.0 1.9M570.4 552.2l0.0 0.9M571.2 589.8l0.0 1.0M572.5 356.3l0.9 4.4M574.0 381.3l0.7 3.4M575.1 403.7l0.7 3.7M576.3 424.5l0.6 2.9M578.9 500.6l0.0 2.1M578.8 521.4l0.0 1.3M579.5 548.9l0.0 1.0M579.1 561.9l0.0 0.9M579.4 567.5l0.0 1.5M581.4 348.4l0.8 4.1M584.3 411.9l0.7 3.6M587.9 479.2l0.0 2.1M587.4 486.3l0.0 1.2M587.7 506.1l0.0 1.5M588.4 539.7l0.0 1.4M588.6 557.1l0.0 1.3M588.5 564.5l0.0 1.2M594.7 437.1l0.8 4.1M595.1 445.7l0.8 4.2M596.0 468.2l0.0 1.2M596.3 481.2l0.0 1.5M596.4 488.6l0.0 0.8M596.9 500.4l0.0 2.0M597.0 520.8l0.0 1.5M597.1 528.3l0.0 1.3M596.8 534.0l0.0 1.0M601.5 430.5l0.6 3.1M603.4 478.2l0.0 2.2M603.8 512.1l0.0 1.0M604.3 526.4l0.0 1.7M605.9 385.9l0.8 3.9M607.1 408.6l0.7 3.4M608.0 418.2l0.5 2.5M610.3 470.0l0.0 1.9M610.6 475.4l0.0 1.1M610.3 480.2l0.0 1.7M610.9 508.0l0.0 1.0M610.9 512.5l0.0 2.1M611.1 528.5l0.0 2.0M616.7 402.0l0.5 2.6M617.2 413.7l0.8 4.0M619.9 467.1l0.0 2.0M620.3 482.6l0.0 1.3M620.0 488.0l0.0 1.1M620.1 493.2l0.0 2.1M620.5 503.0l0.0 1.8M620.7 508.4l0.0 1.6M627.4 471.2l0.0 1.2M627.9 490.7l0.0 2.0M635.4 443.9l0.8 4.2M637.0 485.5l0.0 1.4M644.6 474.7l0.0 0.9" stroke="#ffff00" stroke-width="1.7" stroke-linecap="round" fill="none"/>
<path d="M116.3 464.4l0.1 2.3M118.4 601.3l0.1 4.4M118.5 641.3l0.0 2.2M135.8 600.0l0.1 5.4M136.4 642.5l0.0 3.9M149.8 474.0l0.1 2.7M149.9 493.3l0.0 3.6M150.2 501.0l0.0 2.7M150.1 518.2l0.0 2.2M150.6 537.7l0.1 4.8M169.3 633.5l0.0 3.9M185.3 462.3l0.2 3.3M186.4 525.2l0.1 5.8M187.0 597.3l0.1 5.2M187.5 610.2l0.1 5.6M187.1 617.3l0.1 5.7M206.3 616.1l0.0 3.0M206.4 638.5l0.1 5.2M221.2 542.1l0.0 3.7M221.4 549.2l0.1 5.0M222.1 611.4l0.0 2.6M236.2 480.8l0.1 4.7M237.4 555.2l0.1 5.5M238.2 641.2l0.0 3.0M253.9 495.4l0.1 5.3M253.7 506.7l0.1 5.3M254.7 581.7l0.0 2.6M269.1 623.5l0.1 4.9M286.2 491.5l0.0 2.2M287.2 542.1l0.0 4.1" stroke="#ffff00" stroke-width="1.6" stroke-linecap="round" fill="none"/>
<path d="M112.5 396.1l1.5 4.3M116.8 433.0l1.2 3.3M117.4 440.3l1.5 4.0M120.1 459.0l0.7 12.4M120.5 470.6l0.3 16.3M121.2 495.2l0.1 6.1M121.0 502.9l0.1 8.8M121.1 514.4l0.1 6.8M121.4 520.9l0.1 11.5M121.5 532.7l0.2 16.5M121.3 550.1l0.2 19.0M122.3 602.9l0.2 16.0M115.4 264.0l0.9 2.5M116.2 271.9l1.3 3.5M120.1 307.9l1.3 3.5M128.5 385.6l1.5 4.2M135.3 442.7l1.1 3.0M138.4 479.4l0.1 10.9M138.6 493.7l0.1 10.4M138.6 517.3l0.2 18.1M139.1 541.6l0.1 12.2M138.9 557.3l0.1 7.8M139.6 581.7l0.1 12.1M139.5 598.1l0.1 7.0M139.9 618.7l0.1 12.0M147.7 413.6l1.6 4.3M148.0 420.5l1.7 4.8M150.6 443.3l1.4 3.9M153.2 461.1l0.4 7.1M153.7 489.6l0.2 12.8M154.5 523.8l0.2 14.1M154.6 540.4l0.1 11.4M154.6 553.8l0.2 14.4M155.0 571.5l0.2 13.3M155.0 586.8l0.2 13.8M148.6 265.8l1.3 3.5M150.2 280.4l1.2 3.2M156.9 341.4l1.4 3.8M159.4 364.8l1.1 3.0M161.2 377.8l1.5 4.0M161.9 385.0l1.7 4.8M165.2 415.9l1.1 3.0M166.5 427.4l1.8 4.9M171.4 479.2l0.1 7.8M171.5 485.8l0.2 12.5M171.5 501.4l0.1 9.0M171.9 520.2l0.2 13.8M172.3 559.1l0.2 12.7M172.2 575.6l0.1 12.3M173.1 611.1l0.2 15.3M167.4 268.4l1.0 2.7M168.9 280.9l1.0 2.8M169.6 288.7l1.4 3.9M172.7 319.2l1.2 3.4M176.1 347.0l1.0 2.7M181.1 393.2l1.4 4.0M184.7 424.9l1.3 3.6M187.3 447.4l1.2 3.5M188.6 457.8l0.7 11.1M189.7 470.8l0.3 12.3M189.9 486.9l0.1 9.9M190.1 517.6l0.1 9.9M190.6 527.8l0.2 17.3M190.5 551.1l0.1 7.6M191.1 583.2l0.1 8.4M191.5 621.5l0.1 6.3M184.9 257.4l1.2 3.3M185.8 265.9l0.8 2.2M189.1 293.2l1.2 3.2M194.4 340.7l1.4 3.9M198.5 376.7l1.2 3.3M199.3 383.2l1.0 2.8M199.9 391.1l1.4 3.7M201.6 405.1l1.0 2.9M202.4 411.2l1.3 3.7M207.7 457.0l0.8 14.8M208.5 476.7l0.1 11.6M209.5 529.8l0.2 13.0M209.4 544.7l0.1 12.2M209.6 559.1l0.1 10.4M210.4 621.3l0.1 12.1M203.9 285.8l1.1 3.0M204.9 293.1l1.0 2.9M214.2 377.5l1.3 3.7M224.1 458.5l0.7 12.6M224.5 469.6l0.3 18.2M224.9 496.5l0.1 8.0M224.9 503.4l0.2 17.3M225.2 544.0l0.2 16.8M218.5 277.6l1.2 3.4M221.6 305.7l1.5 4.1M225.4 334.9l0.9 2.5M229.3 372.0l1.4 3.8M230.3 379.0l1.7 4.7M239.5 456.9l1.0 20.0M240.0 485.0l0.1 8.0M240.2 488.9l0.2 18.7M241.0 523.7l0.2 16.7M240.9 548.2l0.1 6.7M242.1 618.5l0.1 8.9M241.4 326.0l1.4 3.9M243.0 340.4l1.4 3.7M253.1 427.5l1.2 3.4M255.3 447.7l1.3 3.8M257.1 466.8l0.4 14.3M257.9 483.6l0.2 13.1M257.7 498.4l0.2 14.2M258.2 517.9l0.1 7.1M258.9 562.1l0.1 7.5M258.6 576.7l0.2 19.5M259.1 601.6l0.1 12.2M259.2 631.6l0.1 12.3M249.5 270.7l1.4 3.8M251.3 286.5l1.3 3.6M252.7 301.6l1.1 2.9M255.3 321.2l1.2 3.4M256.8 337.1l1.3 3.6M258.8 351.8l1.2 3.3M268.5 439.8l1.6 4.4M271.8 480.9l0.1 9.1M272.0 492.8l0.1 10.9M272.1 504.4l0.2 16.7M272.3 524.6l0.2 12.9M272.4 542.6l0.1 9.8M272.4 552.1l0.2 14.8M272.5 566.8l0.2 17.7M273.1 585.7l0.2 19.1M273.5 609.5l0.2 13.4M272.6 310.6l1.3 3.7M273.4 319.2l1.3 3.5M274.9 332.5l1.2 3.3M279.1 368.8l1.3 3.6M280.6 383.2l1.5 4.3M283.2 407.8l1.0 2.9M285.7 426.3l1.3 3.5M290.4 480.9l0.1 6.5M290.4 506.2l0.1 10.1M290.8 515.7l0.2 14.6M291.0 541.0l0.2 19.6M291.2 564.4l0.2 19.8M291.5 606.9l0.2 13.2M292.2 633.7l0.2 13.3M279.9 257.2l1.0 2.7M282.8 280.1l1.1 2.9M283.6 287.4l1.1 2.9M284.7 301.7l1.2 3.3M286.1 310.0l1.1 3.1M291.5 361.2l1.2 3.2M303.1 463.6l0.3 6.9M303.4 468.5l0.3 18.5M304.0 492.5l0.1 10.2M303.9 504.4l0.1 10.7M304.4 526.0l0.1 12.5M304.5 536.9l0.2 19.3M304.5 561.7l0.1 10.9M305.2 575.5l0.1 11.7M305.3 587.1l0.2 19.1M305.4 628.9l0.1 10.3M292.8 260.4l1.1 3.2M295.9 289.6l1.2 3.3M297.2 297.5l1.1 3.1M297.8 305.5l1.2 3.2M315.7 466.2l0.5 17.2M316.2 488.3l0.2 13.4M316.8 503.8l0.2 17.0M317.1 522.9l0.2 19.8M317.4 595.6l0.1 11.2M318.2 625.3l0.1 8.0M305.8 259.8l1.0 2.7M307.7 273.8l1.0 2.9M309.4 293.1l1.1 3.0M311.8 314.7l1.1 2.9M328.6 461.2l0.6 12.1M329.2 475.6l0.2 12.7M329.5 506.4l0.1 11.0M330.1 538.9l0.1 6.9M329.8 546.5l0.1 7.8M330.0 553.3l0.2 13.7M330.3 569.4l0.2 15.0M330.8 590.1l0.1 9.1M330.7 601.4l0.1 6.9M330.9 620.3l0.1 8.8M331.1 632.8l0.1 7.2M331.4 637.2l0.2 15.1M327.2 277.0l1.1 3.1M331.1 313.6l0.9 2.4M348.4 472.2l0.2 18.9M348.6 500.9l0.1 7.3M349.1 509.9l0.1 9.3M349.0 521.5l0.1 10.2M349.5 532.8l0.2 15.5M349.6 551.8l0.2 14.1M349.5 567.7l0.2 16.4M350.3 592.8l0.1 6.7M350.3 600.1l0.1 10.4M350.1 612.8l0.2 13.1M350.7 629.7l0.1 12.4M338.3 259.5l0.8 2.1M361.1 468.0l0.4 15.9M361.9 484.2l0.2 19.8M362.2 507.3l0.2 18.2M362.1 534.7l0.1 6.2M362.3 541.2l0.1 12.3M362.4 552.6l0.2 19.8M362.6 576.1l0.2 15.1M363.0 616.8l0.1 8.1M363.7 633.4l0.2 15.2M351.4 266.9l1.1 3.0M354.3 295.0l1.4 3.8M356.8 316.3l1.5 4.2M359.1 338.3l1.3 3.6M373.2 461.3l0.4 7.4M373.7 464.6l0.6 18.5M374.1 487.5l0.2 16.2M374.5 523.4l0.2 15.4M374.7 544.3l0.1 7.2M375.1 563.9l0.1 11.8M375.3 576.0l0.2 16.9M375.4 612.1l0.2 15.4M366.8 288.9l1.0 2.8M367.2 295.1l1.0 2.9M372.2 339.2l1.4 3.9M386.2 460.1l0.4 7.6M386.2 468.3l0.3 9.3M386.4 478.7l0.1 12.4M387.3 514.5l0.2 15.1M387.3 537.9l0.1 6.1M387.6 547.1l0.1 7.9M387.3 553.5l0.2 15.6M388.3 617.9l0.2 19.7M388.6 641.3l0.2 17.8M378.4 264.7l1.1 3.2M379.4 271.8l1.2 3.3M382.9 305.3l1.3 3.6M385.9 331.5l1.4 3.8M400.2 455.4l0.9 14.8M401.5 476.0l0.1 9.8M401.6 483.0l0.2 19.6M401.4 510.5l0.1 7.4M401.8 515.3l0.2 18.0M402.0 546.5l0.2 17.1M402.2 567.9l0.1 12.2M403.0 599.1l0.1 9.3M403.1 610.6l0.1 8.7M393.7 254.3l1.0 2.9M394.8 260.2l1.1 3.1M415.8 473.7l0.2 14.6M416.1 494.0l0.1 6.6M416.3 497.3l0.2 19.4M416.7 523.8l0.1 8.0M416.7 534.2l0.1 9.9M416.5 544.8l0.2 12.7M417.0 559.2l0.2 12.7M417.0 576.2l0.1 9.3M417.6 589.0l0.1 6.2M417.6 626.8l0.1 6.7M408.6 257.9l1.1 3.2M412.9 306.7l0.9 2.7M414.2 321.0l1.5 4.3M415.0 329.0l1.3 3.8M428.5 478.6l0.2 17.4M428.6 500.0l0.2 14.5M428.8 515.6l0.2 17.5M429.2 534.6l0.2 19.0M429.1 558.6l0.2 15.9M429.2 577.0l0.2 18.4M429.5 598.6l0.2 14.7M421.4 265.1l0.8 2.5M429.5 362.1l1.0 2.9M437.7 457.4l0.7 16.9M439.0 502.5l0.1 10.8M438.9 511.8l0.2 17.4M439.2 544.6l0.2 18.1M439.9 566.3l0.2 15.4M439.9 588.6l0.1 7.0M440.5 622.0l0.1 10.5M440.8 632.6l0.2 17.7M437.0 271.5l0.9 2.8M439.5 300.2l1.0 2.9M451.4 462.3l0.4 12.7M452.0 495.1l0.2 16.4M452.5 518.2l0.1 7.4M452.9 540.9l0.1 9.5M453.0 551.0l0.1 11.4M452.8 563.3l0.2 14.5M453.6 596.2l0.1 7.6M453.7 605.0l0.2 12.9M448.9 264.8l0.8 2.6M452.9 329.0l1.4 4.3M455.6 365.4l0.9 2.9M458.9 423.1l1.0 3.3M462.5 474.2l0.1 11.7M462.7 483.8l0.2 18.5M462.9 505.5l0.2 18.2M463.0 526.4l0.2 15.1M463.1 545.6l0.2 15.0M463.4 563.8l0.2 14.3M463.4 578.9l0.2 16.7M464.1 621.7l0.2 12.8M464.0 635.2l0.2 17.1M459.1 263.4l0.7 2.4M471.2 461.8l0.4 14.5M471.5 477.3l0.2 18.6M472.1 500.4l0.2 14.0M472.2 514.3l0.2 16.7M472.6 550.0l0.1 8.1M472.9 553.6l0.2 19.8M472.6 581.2l0.1 11.5M473.1 594.0l0.2 13.7M473.4 608.6l0.2 17.9M469.2 299.3l1.0 3.4M469.7 314.3l1.2 4.0M477.6 454.6l0.6 19.7M478.4 478.8l0.2 15.5M478.4 495.6l0.2 16.1M478.5 512.4l0.2 17.0M478.8 532.7l0.2 12.7M479.4 545.4l0.2 16.1M479.2 566.5l0.2 13.5M479.9 620.6l0.1 11.2M480.1 633.2l0.2 13.0M477.3 258.3l0.8 2.7M481.1 336.2l1.0 3.3M483.5 387.3l0.9 3.0M487.7 456.8l0.5 19.0M488.3 482.0l0.1 8.8M488.4 491.6l0.1 9.4M488.1 503.3l0.1 10.2M488.4 512.7l0.2 14.5M488.4 531.4l0.1 12.4M488.5 545.9l0.2 16.0M488.8 563.7l0.2 15.7M489.1 584.3l0.2 12.5M489.3 599.9l0.2 13.2M489.5 615.0l0.1 12.5M489.7 626.3l0.2 18.4M488.7 264.8l1.1 3.7M490.7 308.9l1.1 3.8M495.3 390.4l0.9 3.1M498.5 458.4l0.4 12.8M498.9 472.0l0.2 16.4M499.1 494.8l0.1 11.5M499.2 507.8l0.2 16.5M499.7 531.1l0.1 6.6M499.8 535.7l0.2 16.0M500.5 582.7l0.1 10.0M500.8 596.5l0.1 7.0M500.9 605.7l0.1 8.2M501.1 627.4l0.1 8.0M501.1 632.4l0.2 18.7M497.7 259.2l1.0 3.2M508.1 458.4l0.3 10.7M508.9 472.8l0.1 7.4M508.6 477.3l0.2 16.0M509.0 513.4l0.1 9.9M509.4 548.5l0.1 8.2M509.8 559.4l0.1 9.8M510.1 569.6l0.2 15.2M510.3 590.6l0.1 6.8M510.6 610.3l0.2 15.3M510.3 631.0l0.1 9.0" stroke="#ffff00" stroke-width="1.5" stroke-linecap="round" fill="none"/>
<path d="M107.9 384.5l0.0 0.3M112.6 426.9l0.0 0.3M111.7 263.8l0.0 0.2M113.1 276.1l0.1 0.6M113.7 284.7l0.1 0.5M115.2 296.6l0.1 0.7M115.6 301.5l0.0 0.4M116.6 309.8l0.0 0.2M117.6 318.5l0.0 0.3M119.4 330.6l0.1 0.7M121.2 348.3l0.1 0.8M124.3 377.5l0.1 0.8M125.6 386.5l0.1 0.6M127.2 404.1l0.1 0.7M127.9 408.2l0.0 0.4M134.7 333.8l0.1 0.7M137.9 359.2l0.0 0.2M138.5 363.4l0.1 0.7M140.4 380.1l0.1 0.8M145.0 266.3l0.1 0.5M145.9 275.0l0.1 0.5M150.7 317.4l0.1 0.5M154.2 351.4l0.0 0.4M156.7 372.1l0.1 0.5M157.9 380.1l0.0 0.3M165.1 446.9l0.1 0.7M164.8 278.7l0.0 0.4M177.2 390.8l0.0 0.4M178.6 399.2l0.0 0.4M181.5 425.0l0.1 0.6M183.5 277.5l0.0 0.2M184.0 281.7l0.1 0.7M186.2 302.6l0.1 0.5M187.4 310.4l0.1 0.5M188.1 314.5l0.0 0.4M191.2 347.4l0.1 0.6M191.8 351.3l0.1 0.6M193.1 359.8l0.1 0.7M194.0 372.0l0.1 0.7M195.2 380.6l0.0 0.3M196.9 396.6l0.0 0.3M198.5 408.7l0.1 0.5M199.3 417.6l0.0 0.4M202.5 443.1l0.0 0.3M203.2 450.4l0.1 0.5M198.5 269.5l0.0 0.4M201.6 295.4l0.1 0.6M202.9 307.7l0.1 0.5M204.0 315.5l0.0 0.4M206.3 335.5l0.1 0.6M207.3 345.0l0.1 0.5M210.9 378.1l0.0 0.4M211.6 382.4l0.1 0.8M214.2 406.9l0.1 0.5M216.2 424.5l0.0 0.4M218.6 443.9l0.1 0.7M219.6 457.0l0.0 0.2M219.0 309.7l0.1 0.6M219.4 314.0l0.0 0.4M219.6 317.7l0.1 0.6M220.3 321.6l0.0 0.4M223.3 347.2l0.1 0.7M223.4 352.1l0.0 0.2M224.8 365.1l0.0 0.3M226.6 380.7l0.1 0.7M227.0 385.4l0.1 0.7M228.4 393.4l0.1 0.8M230.3 411.4l0.0 0.2M234.5 451.8l0.0 0.4M237.5 322.0l0.0 0.3M238.4 329.5l0.1 0.7M239.1 333.8l0.1 0.5M240.5 346.6l0.0 0.3M241.1 350.9l0.1 0.7M241.2 354.9l0.0 0.4M243.3 371.8l0.0 0.3M250.4 435.3l0.1 0.7M251.6 444.5l0.1 0.5M252.4 452.9l0.0 0.4M247.4 282.7l0.1 0.5M251.5 319.2l0.0 0.3M253.5 338.8l0.0 0.2M253.9 343.5l0.0 0.4M260.6 398.7l0.1 0.7M260.5 403.3l0.0 0.2M262.0 411.9l0.1 0.8M263.7 429.7l0.0 0.4M265.5 446.7l0.1 0.6M263.7 265.2l0.1 0.6M265.2 277.7l0.0 0.4M267.8 299.4l0.1 0.5M268.6 307.3l0.1 0.6M270.4 324.5l0.1 0.6M271.6 336.4l0.1 0.6M274.2 357.3l0.0 0.3M277.0 383.7l0.0 0.4M279.2 400.8l0.0 0.3M283.6 441.1l0.0 0.3M284.3 448.9l0.1 0.7" stroke="#ffff00" stroke-width="1.4" stroke-linecap="round" fill="none"/>
<path d="M300.0 465.3l0.1 1.2M301.2 571.1l0.0 2.3M301.9 637.4l0.0 2.4M313.9 577.9l0.0 1.0M314.6 647.5l0.0 0.8M326.4 547.2l0.0 1.4M327.6 647.5l0.0 1.8M345.4 500.8l0.0 0.8M345.2 506.7l0.0 1.1M346.1 575.2l0.0 2.0M346.6 601.4l0.0 1.4M347.1 656.1l0.0 0.7M359.4 610.7l0.0 1.4M369.5 466.8l0.1 2.4M370.0 477.7l0.0 0.7M370.5 503.8l0.0 1.1M370.9 537.3l0.0 1.3M372.1 618.0l0.0 0.8M383.4 486.6l0.0 1.7M383.3 504.9l0.0 2.3M384.3 573.8l0.0 2.1M385.0 639.6l0.0 1.4M385.4 652.5l0.0 1.7M398.3 523.6l0.0 0.8M399.6 626.1l0.0 1.6M413.1 545.4l0.0 1.6M413.7 578.4l0.0 2.0M414.2 651.8l0.0 1.2M424.9 495.0l0.0 0.7M425.0 530.9l0.0 1.2M425.8 567.8l0.0 1.6M425.9 593.7l0.0 2.3M426.1 600.6l0.0 2.0M426.6 625.2l0.0 1.4M435.1 472.1l0.0 0.8M435.7 511.8l0.0 1.6M436.5 570.3l0.0 2.2M436.3 576.1l0.0 1.4M436.5 587.6l0.0 0.9M436.3 599.4l0.0 2.3M436.6 630.4l0.0 1.8M437.0 645.1l0.0 2.0M449.6 575.0l0.0 1.3M450.1 614.9l0.0 1.1M459.0 473.5l0.0 1.1M459.8 580.7l0.0 2.0M460.5 620.7l0.0 1.1M470.2 641.7l0.0 1.0M474.5 463.0l0.1 1.8M475.1 527.4l0.0 1.1M475.6 553.1l0.0 2.1M475.9 579.6l0.0 1.4M476.2 591.0l0.0 1.8M485.5 576.5l0.0 2.1M486.2 631.8l0.0 0.8M496.0 520.5l0.0 2.2M496.7 566.2l0.0 0.6M496.8 577.1l0.0 1.0M497.6 642.4l0.0 1.2M497.3 647.4l0.0 1.1M506.5 581.9l0.0 1.9M506.8 597.1l0.0 0.8" stroke="#ffff00" stroke-width="1.3" stroke-linecap="round" fill="none"/>
<path d="M121.7 575.0l0.1 10.3M122.0 585.6l0.2 15.6M137.7 460.1l0.7 14.9M138.5 506.1l0.1 11.1M139.2 566.6l0.1 12.3M139.9 604.4l0.2 12.8M140.3 634.6l0.1 8.7M153.1 464.8l0.5 19.9M155.7 643.7l0.1 6.4M170.8 466.0l0.4 9.9M172.0 553.5l0.1 7.2M172.6 588.3l0.2 17.8M173.4 647.2l0.1 9.1M190.0 494.5l0.2 17.9M190.4 554.4l0.2 19.7M191.2 592.1l0.1 11.0M191.5 605.0l0.1 11.6M208.8 510.8l0.2 14.4M209.8 595.0l0.1 9.0M210.2 631.7l0.2 19.9M225.4 562.5l0.2 18.1M240.9 513.3l0.1 11.6M241.2 574.7l0.1 7.6M241.7 629.2l0.1 11.9M256.7 460.2l0.4 7.2M258.8 545.7l0.1 11.0M258.8 572.6l0.1 7.7M259.2 618.6l0.1 10.3M270.5 458.2l0.6 10.1M290.6 487.9l0.2 13.4M291.0 535.8l0.1 8.2M291.7 624.5l0.1 8.1M305.5 612.5l0.2 13.1M317.0 545.5l0.2 19.6M317.1 568.9l0.2 19.1M317.7 606.8l0.2 13.5M318.0 630.2l0.2 18.4M329.2 491.6l0.1 11.0M329.5 517.0l0.2 15.8M330.8 608.0l0.1 10.3M363.0 591.0l0.2 17.6M386.6 490.3l0.2 18.9M387.9 570.3l0.2 18.3M387.9 594.1l0.2 13.8M402.8 616.4l0.2 17.3M403.0 638.4l0.1 11.9M417.5 593.2l0.2 15.5M430.0 619.1l0.1 6.1M429.9 623.6l0.2 16.6M438.7 477.4l0.2 18.0M439.6 536.0l0.1 9.8M440.2 608.4l0.1 11.1M452.3 490.3l0.1 6.8M452.3 526.3l0.1 12.0M453.5 619.3l0.2 15.3M464.1 599.4l0.2 17.0M472.1 535.9l0.1 9.7M473.7 635.0l0.1 7.7M479.6 595.2l0.2 19.5M500.9 616.1l0.1 9.0M509.3 521.6l0.2 19.5M510.1 595.6l0.2 13.7" stroke="#ffff00" stroke-width="1.1" stroke-linecap="round" fill="none"/>
<path d="M116.4 480.4l0.0 3.2M117.0 490.8l0.0 2.7M117.0 500.3l0.0 2.7M117.2 510.2l0.0 2.1M117.3 522.6l0.1 4.6M117.6 535.9l0.1 4.3M117.8 548.9l0.0 4.0M117.4 558.6l0.0 2.9M117.9 565.0l0.0 2.1M117.7 575.4l0.0 2.2M118.2 584.1l0.0 4.1M118.2 593.5l0.0 2.7M118.1 609.4l0.0 3.4M133.8 462.7l0.1 2.5M133.9 475.6l0.1 3.6M134.3 485.9l0.0 3.2M134.2 498.6l0.0 2.6M134.7 508.3l0.0 2.0M134.9 530.3l0.0 2.8M134.8 541.0l0.0 2.7M135.2 562.8l0.0 2.3M135.4 572.1l0.1 4.3M135.2 589.8l0.0 2.3M135.9 609.5l0.0 2.7M135.9 622.9l0.0 3.5M149.4 479.6l0.1 4.6M150.2 507.5l0.1 4.3M150.4 527.5l0.0 3.6M150.7 552.0l0.0 4.1M150.8 561.9l0.1 4.8M151.1 570.0l0.0 3.4M150.7 582.8l0.0 2.9M151.1 596.5l0.0 2.8M151.3 631.3l0.1 5.2M166.7 462.6l0.1 2.1M167.3 471.3l0.1 2.7M167.1 482.6l0.0 4.0M167.3 502.6l0.1 4.9M167.7 509.2l0.1 5.0M167.5 527.1l0.1 5.3M168.3 551.0l0.0 3.1M168.2 558.9l0.1 4.9M168.5 574.2l0.0 4.1M168.6 581.5l0.0 2.5M168.4 589.7l0.0 3.2M168.9 597.4l0.0 3.1M168.5 604.3l0.0 3.6M168.9 626.4l0.0 3.2M169.3 641.2l0.1 4.4M185.8 483.5l0.0 2.3M185.9 490.4l0.1 4.9M185.9 502.8l0.1 4.3M186.3 514.1l0.0 3.4M186.2 533.7l0.0 2.9M186.2 540.1l0.0 3.7M186.4 548.4l0.0 1.9M186.7 567.8l0.0 2.1M186.6 574.5l0.0 3.9M186.7 583.3l0.1 4.2M187.0 589.4l0.1 5.1M187.6 634.2l0.1 4.5M204.2 461.8l0.3 4.3M205.0 485.9l0.0 3.1M205.0 494.5l0.0 3.2M205.1 506.4l0.0 3.3M205.2 518.5l0.0 2.2M205.5 533.7l0.0 3.3M205.4 548.1l0.0 2.5M205.6 553.2l0.1 4.9M205.7 561.1l0.0 2.3M205.8 581.4l0.0 2.3M205.7 587.2l0.1 4.3M205.9 597.3l0.1 5.3M206.5 604.2l0.1 4.5M220.2 462.9l0.2 3.9M220.7 475.7l0.1 4.4M220.6 484.2l0.1 4.6M220.9 492.2l0.0 2.5M220.7 501.1l0.0 3.9M221.3 512.2l0.0 2.0M221.2 525.2l0.0 2.5M221.6 557.9l0.0 2.6M221.6 569.4l0.0 2.0M221.8 577.5l0.0 1.9M221.7 583.3l0.0 3.5M235.6 462.6l0.2 3.2M235.8 473.1l0.1 2.6M236.5 490.4l0.1 5.3M236.4 497.1l0.1 4.6M236.8 511.1l0.0 4.1M237.0 522.6l0.1 4.8M237.0 534.0l0.0 2.9M236.9 543.3l0.0 2.4M237.0 563.9l0.1 5.1M237.3 576.5l0.1 4.9M237.5 596.5l0.1 4.8M237.6 618.3l0.0 2.7M253.4 463.4l0.1 2.2M253.5 472.3l0.1 4.3M253.9 484.6l0.1 5.1M254.2 519.6l0.0 3.4M254.6 527.5l0.0 3.5M254.1 535.0l0.0 2.0M254.6 554.2l0.0 2.5M254.5 562.2l0.1 5.1M255.4 605.3l0.0 3.0M255.7 629.9l0.1 4.6M267.0 460.9l0.3 4.9M267.4 467.4l0.2 5.2M267.9 480.6l0.1 4.3M267.9 491.0l0.0 2.7M268.0 497.6l0.0 2.1M267.8 506.1l0.1 4.7M268.1 517.6l0.0 2.5M268.4 524.9l0.0 2.9M268.6 534.6l0.0 3.5M268.5 541.5l0.0 2.9M268.4 554.1l0.0 2.5M268.9 566.6l0.0 2.0M268.8 574.8l0.0 3.2M269.4 615.0l0.0 3.2M269.5 643.1l0.0 3.0M286.2 472.1l0.1 2.5M286.3 478.2l0.1 4.4M286.8 528.4l0.1 4.9M287.3 552.5l0.1 4.3M287.1 560.6l0.1 5.2M287.6 584.7l0.0 2.0M287.5 597.4l0.1 4.5M288.1 622.1l0.0 2.4M288.1 631.5l0.0 1.8M277.4 263.5l0.2 1.7M278.0 268.7l0.3 2.9M278.7 274.8l0.2 2.0M280.4 286.8l0.4 3.4M281.0 294.6l0.2 2.0M282.0 301.0l0.2 1.8M286.2 341.4l0.4 3.4M288.0 355.0l0.3 3.0M289.1 367.4l0.4 3.1M290.4 374.7l0.2 2.1M290.7 380.8l0.4 3.5M291.7 387.2l0.3 3.1M292.2 393.9l0.5 4.2M293.1 400.4l0.3 2.7M293.8 406.4l0.4 3.4M295.3 419.1l0.5 4.1M295.8 425.9l0.3 3.0M296.6 433.2l0.3 3.0M297.4 440.6l0.3 2.5M298.6 451.6l0.3 3.4M291.1 271.6l0.4 3.2M291.3 276.9l0.3 2.8M292.3 282.6l0.2 1.9M295.3 308.5l0.2 1.9M295.8 314.6l0.3 2.3M296.3 321.4l0.3 2.8M299.2 346.5l0.4 3.5M302.0 367.2l0.3 2.9M303.4 380.5l0.4 3.5M304.0 387.8l0.3 3.0M304.7 393.1l0.3 2.9M305.5 398.3l0.3 2.7M305.9 404.2l0.3 3.0M307.4 418.0l0.5 4.2M308.1 424.4l0.4 3.8M308.8 431.3l0.4 3.9M309.9 438.6l0.3 2.5M310.6 444.4l0.3 2.3M310.7 448.5l0.4 4.2M311.4 456.0l0.2 2.3M305.2 280.7l0.2 1.8M306.5 292.0l0.3 2.4M308.5 311.8l0.2 2.1M310.5 329.9l0.4 3.1M311.3 335.1l0.3 2.7M313.6 359.1l0.4 3.9M316.0 376.2l0.4 3.3M316.7 383.6l0.4 3.1M318.2 396.2l0.3 2.5M318.4 401.3l0.3 2.3M319.4 407.4l0.3 2.6M319.9 413.2l0.4 3.5M321.0 420.4l0.4 3.5M321.6 427.3l0.3 2.6M322.4 432.7l0.3 3.0M322.7 437.7l0.4 3.4M323.3 443.8l0.3 3.0M323.8 449.0l0.4 4.3M324.6 454.6l0.3 3.3M323.6 274.3l0.4 3.3M324.1 279.7l0.4 3.3M324.9 287.1l0.2 2.1M325.4 292.8l0.3 2.8M327.1 303.5l0.3 2.5M327.6 310.3l0.3 3.0M328.4 315.6l0.3 3.1M328.9 322.5l0.2 2.0M329.6 326.9l0.4 3.3M331.1 339.0l0.4 3.3M331.3 344.9l0.2 2.1M332.4 350.5l0.4 3.1M334.5 370.6l0.3 3.0M335.1 377.1l0.4 3.6M335.8 382.8l0.5 4.2M336.6 389.8l0.4 3.5M337.6 397.1l0.3 3.0M338.1 403.6l0.3 3.1M339.6 416.4l0.3 2.5M340.4 422.8l0.4 3.4M341.2 429.4l0.5 4.0M342.1 436.4l0.4 3.2M342.2 441.4l0.5 4.5M343.5 448.5l0.3 3.2M335.2 264.3l0.2 2.0M339.7 299.8l0.2 2.0M340.3 305.7l0.3 3.0M340.6 311.9l0.4 3.4M342.4 326.1l0.3 2.7M343.1 332.3l0.3 2.5M343.9 337.8l0.3 2.7M344.5 344.0l0.3 3.0M346.0 355.9l0.4 3.3M346.2 362.7l0.4 3.7M347.6 370.4l0.3 2.5M348.1 377.7l0.3 2.3M348.8 383.9l0.4 4.0M350.4 396.2l0.4 3.3M350.8 401.6l0.4 3.2M351.6 408.5l0.4 3.5M354.0 427.1l0.4 3.9M355.3 441.1l0.3 3.0M356.3 447.3l0.3 2.7M356.7 452.3l0.4 4.2M347.9 265.5l0.3 3.0M349.1 277.9l0.3 2.5M350.1 285.3l0.3 2.6M352.5 307.0l0.2 2.0M353.9 319.5l0.3 2.4M354.8 326.0l0.4 3.7M355.2 333.1l0.3 2.8M356.6 344.2l0.2 2.0M357.9 356.8l0.3 2.4M358.6 361.2l0.4 3.9M359.6 368.0l0.4 3.1M360.7 379.5l0.4 3.5M361.7 390.5l0.5 4.1M363.4 404.2l0.3 2.7M363.9 409.5l0.4 3.7M364.7 416.9l0.4 3.5M366.2 428.1l0.4 3.7M366.7 435.0l0.3 3.0M368.3 448.2l0.4 4.3M360.8 269.2l0.4 3.3M362.8 286.5l0.2 2.2M363.9 291.9l0.4 3.2M364.1 299.0l0.4 3.4M365.4 306.0l0.3 2.6M365.9 313.0l0.3 2.3M366.7 318.6l0.3 3.1M368.0 332.9l0.4 3.7M369.0 340.5l0.3 2.3M369.5 346.5l0.2 2.0M370.6 351.9l0.4 3.9M371.5 359.5l0.3 2.2M372.3 366.0l0.3 2.7M372.4 372.1l0.3 2.5M373.2 378.7l0.2 2.2M374.4 384.8l0.4 3.4M374.7 391.9l0.3 2.6M375.7 397.8l0.4 3.6M376.0 403.6l0.3 2.9M376.6 409.3l0.3 2.6M377.3 415.2l0.4 3.6M378.2 422.2l0.4 4.0M378.9 427.6l0.4 3.6M379.3 432.4l0.5 4.2M380.7 440.5l0.3 2.3M381.1 446.3l0.3 3.3M381.5 452.0l0.3 3.1M376.9 279.3l0.2 2.0M377.6 285.2l0.2 2.2M377.8 290.3l0.4 3.4M378.7 297.5l0.3 2.8M379.6 302.8l0.4 3.3M381.1 316.8l0.3 2.3M382.1 323.6l0.3 3.0M383.2 334.9l0.4 3.8M383.7 341.3l0.4 3.2M384.6 346.2l0.4 3.6M385.1 352.6l0.2 2.1M386.1 364.1l0.5 4.1M387.0 370.3l0.5 4.0M388.2 378.1l0.3 3.0M388.4 384.3l0.4 3.5M389.9 396.9l0.5 4.3M391.8 411.3l0.3 2.9M392.8 422.1l0.3 2.9M394.4 434.7l0.4 3.4M394.9 439.8l0.4 3.2M395.5 445.2l0.4 3.9M396.2 452.9l0.2 2.7M393.7 281.2l0.3 3.1M395.9 303.7l0.2 2.2M397.7 321.1l0.2 2.1M398.3 326.9l0.2 2.0M399.6 339.5l0.3 2.6M401.0 357.1l0.3 3.4M402.7 369.3l0.3 2.6M402.9 373.9l0.4 4.0M404.8 392.7l0.3 2.5M405.3 396.9l0.4 4.3M406.3 403.5l0.4 3.7M406.7 409.2l0.4 4.3M407.6 416.2l0.4 4.1M409.2 430.5l0.3 2.6M410.2 443.3l0.3 3.1M410.7 450.7l0.3 3.1M406.7 271.4l0.2 2.0M407.9 284.0l0.2 2.3M408.2 288.6l0.3 3.1M408.9 293.8l0.3 3.1M409.9 306.0l0.2 2.3M410.5 313.0l0.2 1.9M411.7 325.9l0.3 3.0M412.1 333.0l0.3 2.9M413.0 339.7l0.2 2.5M413.4 345.6l0.3 3.6M414.1 353.4l0.2 2.5M415.1 360.4l0.3 3.1M416.8 377.1l0.4 3.9M417.0 382.9l0.4 4.2M417.9 388.8l0.3 3.1M418.3 395.3l0.3 3.6M418.5 401.4l0.3 3.6M419.1 407.3l0.3 3.7M419.9 414.0l0.2 2.5M421.8 433.7l0.3 3.1M422.3 439.6l0.3 3.2M422.9 446.8l0.3 3.6M423.7 454.0l0.2 3.7M418.4 269.6l0.2 2.7M419.2 282.4l0.1 1.7M420.2 287.9l0.2 2.0M420.4 293.0l0.2 1.9M421.1 298.3l0.3 2.9M421.3 306.2l0.2 1.8M423.4 324.5l0.3 3.3M423.6 330.1l0.3 3.0M424.2 336.9l0.2 2.4M425.3 348.5l0.2 2.9M425.6 354.7l0.2 2.2M426.4 359.5l0.3 3.9M426.7 366.1l0.3 3.1M427.2 371.5l0.3 3.9M428.2 385.0l0.3 3.4M428.6 391.5l0.3 3.8M429.3 397.7l0.3 3.4M430.1 402.8l0.3 3.3M430.2 409.1l0.4 4.1M431.5 421.4l0.2 2.5M431.8 427.6l0.3 3.6M432.4 432.7l0.4 4.4M433.0 438.5l0.3 4.0M433.5 443.6l0.4 4.4M433.6 449.9l0.3 4.2M433.4 263.0l0.2 2.3M433.5 269.3l0.2 3.2M434.3 276.2l0.2 2.3M435.1 289.4l0.2 3.0M437.8 319.8l0.2 2.1M438.3 330.7l0.2 2.1M438.9 337.1l0.2 2.1M439.4 343.5l0.2 2.1M439.9 348.5l0.3 3.6M440.0 355.1l0.2 2.4M440.6 360.4l0.2 2.4M441.1 366.6l0.2 3.1M441.6 372.4l0.2 3.0M441.9 378.5l0.2 2.9M442.2 383.7l0.2 3.3M443.0 396.7l0.3 3.5M444.3 409.9l0.2 2.3M445.0 416.1l0.2 3.2M445.2 420.7l0.3 4.0M445.4 427.1l0.3 3.8M446.2 434.7l0.3 3.5M446.4 440.3l0.2 2.3M446.8 446.5l0.2 2.4M447.6 451.9l0.2 2.9M445.4 264.4l0.2 2.8M446.8 282.8l0.1 1.9M447.0 288.0l0.2 2.5M448.0 300.8l0.2 3.1M448.8 314.3l0.2 3.3M448.9 320.1l0.2 2.8M449.7 326.6l0.2 3.7M450.4 340.0l0.1 2.1M451.0 345.9l0.2 3.0M450.9 351.3l0.2 3.1M451.7 358.3l0.2 3.5M451.8 364.5l0.2 3.0M452.7 376.1l0.2 3.1M453.6 383.3l0.2 3.3M453.9 389.6l0.2 2.4M454.2 395.2l0.3 4.2M454.5 402.7l0.2 2.4M455.1 407.8l0.3 3.9M456.1 428.2l0.2 2.3M457.2 441.1l0.2 3.5M457.4 447.4l0.2 2.6M458.0 453.4l0.1 2.4M456.2 264.0l0.2 2.7M457.0 276.4l0.2 2.6M457.1 283.6l0.1 2.0M458.2 302.0l0.1 2.4M458.9 314.8l0.1 1.9M459.4 320.1l0.2 3.0M459.9 325.7l0.1 2.4M460.2 332.9l0.2 3.0M460.3 339.0l0.2 3.0M460.7 344.0l0.2 3.7M461.4 349.5l0.2 2.9M461.8 356.4l0.2 2.9M462.2 363.0l0.2 3.9M462.3 369.4l0.2 3.1M462.9 375.1l0.2 3.9M462.9 381.9l0.2 2.9M463.4 387.6l0.2 2.8M463.8 392.5l0.2 3.8M463.9 398.0l0.2 3.0M464.3 403.6l0.2 2.9M465.0 410.3l0.2 2.9M465.4 417.2l0.2 3.6M465.9 429.8l0.2 3.7M466.5 436.4l0.2 2.7M467.2 450.5l0.1 2.5M464.2 264.7l0.1 2.0M464.6 275.9l0.1 1.9M465.6 299.6l0.1 2.4M465.8 305.0l0.2 3.1M466.3 312.8l0.1 2.0M467.7 331.5l0.1 1.9M467.9 336.3l0.2 3.2M468.3 343.9l0.2 2.8M468.5 349.6l0.1 2.7M470.0 380.4l0.2 2.9M470.7 385.6l0.1 2.7M471.0 396.4l0.2 2.8M471.2 401.3l0.2 3.2M471.8 408.4l0.2 2.8M471.7 414.5l0.2 3.4M472.0 420.3l0.2 3.6M472.5 425.8l0.2 2.9M473.1 430.8l0.2 3.4M472.9 436.1l0.2 4.2M473.6 442.5l0.2 4.3M474.5 265.3l0.1 1.6M474.8 271.4l0.1 2.1M475.2 277.0l0.1 3.0M475.0 283.9l0.2 3.1M475.8 289.5l0.1 2.9M477.0 315.4l0.1 2.5M477.7 328.3l0.1 2.9M478.3 345.7l0.2 3.7M478.9 353.0l0.2 3.4M479.4 360.6l0.1 2.5M479.5 367.7l0.1 3.0M479.6 373.5l0.1 2.5M479.9 379.4l0.2 3.2M480.6 385.1l0.2 3.8M480.6 391.6l0.2 4.1M480.8 397.7l0.2 3.5M481.4 404.7l0.1 2.4M481.5 410.4l0.2 3.6M482.0 423.3l0.2 3.6M482.8 429.6l0.2 3.6M483.5 443.6l0.2 4.0M485.7 262.1l0.1 3.0M486.2 274.9l0.1 2.4M487.0 293.8l0.2 3.1M488.2 318.1l0.2 3.1M488.4 325.9l0.1 2.4M488.9 331.2l0.2 3.2M489.4 336.5l0.2 3.4M489.7 347.3l0.2 3.8M490.2 353.8l0.1 2.2M490.5 359.6l0.2 3.3M490.4 365.8l0.1 2.8M490.9 378.4l0.1 2.6M491.5 385.8l0.1 2.5M491.9 391.1l0.2 4.1M492.1 398.8l0.1 2.6M492.7 404.1l0.2 3.9M492.9 410.3l0.1 2.9M493.3 415.7l0.2 4.2M493.4 422.8l0.2 3.4M494.2 442.0l0.2 3.5M495.1 454.6l0.1 2.5M494.9 262.0l0.2 3.1M495.6 275.2l0.1 2.6M495.8 282.4l0.1 2.3M496.5 289.6l0.1 2.8M497.1 300.1l0.1 2.9M497.2 306.6l0.1 2.6M497.8 317.4l0.1 2.8M497.8 324.0l0.1 3.0M498.5 336.6l0.2 3.9M499.2 344.4l0.1 2.9M499.7 351.0l0.1 2.6M499.9 358.2l0.1 2.3M500.1 364.8l0.2 3.9M500.4 372.9l0.1 2.3M501.6 390.1l0.2 4.2M501.7 395.6l0.2 3.4M502.2 401.9l0.1 2.4M502.7 411.8l0.2 4.3M502.9 419.3l0.1 2.8M503.3 424.0l0.2 3.4M503.4 430.5l0.1 2.7M503.9 437.2l0.1 2.3M504.1 449.9l0.1 2.9M509.6 315.7l0.5 2.7M511.3 356.0l0.6 3.2M512.0 369.0l0.7 3.3M513.0 381.4l0.6 2.9M514.0 403.9l0.5 2.7M514.5 416.8l0.6 3.1M515.1 428.5l0.7 3.3M515.5 437.4l0.8 3.9M516.0 446.7l0.5 2.7M517.4 469.4l0.0 0.7M517.4 476.2l0.0 1.8M517.4 483.7l0.0 1.5M517.1 490.2l0.0 1.1M517.7 495.9l0.0 1.3M517.4 502.4l0.0 1.2M518.0 514.6l0.0 1.4M518.0 521.7l0.0 1.2M518.0 535.0l0.0 1.3M518.3 546.7l0.0 1.9M518.5 559.5l0.0 1.0M518.5 566.9l0.0 1.0M518.2 573.5l0.0 1.0M521.2 348.6l0.8 3.9M522.1 359.8l0.5 2.5M523.0 382.9l0.7 3.4M523.8 406.3l0.8 3.8M525.0 417.6l0.6 3.2M525.8 440.3l0.8 3.8M526.4 450.8l0.6 3.0M527.0 462.6l0.0 1.1M527.4 469.8l0.0 1.2M527.5 476.1l0.0 0.7M527.4 481.3l0.0 1.4M527.3 488.9l0.0 1.1M527.4 496.2l0.0 1.5M527.6 502.4l0.0 1.5M527.5 509.0l0.0 1.8M528.1 514.8l0.0 1.9M528.1 520.8l0.0 1.7M527.9 541.9l0.0 0.8M528.6 563.6l0.0 1.5M529.2 601.4l0.0 1.0M528.7 341.1l0.8 3.9M531.2 392.6l0.6 3.2M531.3 403.4l0.6 3.0M532.2 415.7l0.6 2.9M532.6 424.8l0.7 3.5M533.3 437.6l0.5 2.6M534.1 455.3l0.7 3.9M534.9 468.4l0.0 0.8M534.9 474.0l0.0 0.9M534.7 481.1l0.0 1.2M535.3 487.0l0.0 1.9M535.4 494.3l0.0 1.7M535.2 501.1l0.0 1.1M535.5 528.3l0.0 1.0M535.7 535.1l0.0 1.9M536.0 548.6l0.0 1.1M535.6 554.5l0.0 1.5M536.0 561.3l0.0 1.3M536.1 567.4l0.0 1.7M536.1 574.5l0.0 1.2M536.1 587.7l0.0 1.0M536.3 594.8l0.0 1.4M538.1 387.3l0.6 2.9M539.0 400.2l0.6 2.9M541.0 437.1l0.5 2.4M541.2 449.2l0.6 3.0M542.3 468.1l0.0 1.9M542.6 479.9l0.0 1.8M542.4 492.8l0.0 1.4M542.7 505.2l0.0 1.1M542.9 511.7l0.0 1.4M543.3 541.0l0.0 1.8M543.1 546.8l0.0 1.8M543.4 580.1l0.0 1.1M546.3 386.2l0.6 3.2M546.7 398.8l0.5 2.7M547.2 408.8l0.5 2.6M548.3 429.3l0.6 3.2M548.9 440.4l0.6 2.8M549.3 452.3l0.5 2.6M550.1 468.2l0.0 0.8M550.2 474.0l0.0 1.1M550.7 493.8l0.0 0.9M550.8 501.1l0.0 0.9M551.0 507.3l0.0 0.9M550.9 514.8l0.0 0.9M551.1 528.7l0.0 0.7M551.3 561.5l0.0 1.3M551.5 575.7l0.0 1.8M557.5 391.7l0.7 3.5M559.1 425.9l0.6 3.1M559.6 435.5l0.7 3.4M559.9 445.1l0.7 3.4M560.5 453.8l0.6 3.3M560.9 463.6l0.0 0.7M561.3 476.8l0.0 1.1M561.4 482.7l0.0 2.0M561.8 489.1l0.0 1.0M561.5 495.9l0.0 1.6M562.0 509.9l0.0 1.1M561.8 515.7l0.0 1.8M561.8 529.4l0.0 1.2M562.2 535.0l0.0 1.3M562.3 541.9l0.0 1.1M562.0 548.9l0.0 1.7M566.1 402.0l0.6 2.8M566.7 411.6l0.8 3.9M569.5 467.2l0.0 1.9M569.6 474.2l0.0 1.1M569.9 507.8l0.0 0.9M570.0 519.1l0.0 1.8M574.5 392.8l0.7 3.7M577.4 447.3l0.5 2.4M578.4 469.7l0.0 0.8M578.3 482.9l0.0 1.1M578.7 489.0l0.0 0.9M578.7 508.3l0.0 1.0M585.0 423.0l0.5 2.4M586.2 444.0l0.7 3.7M587.6 472.7l0.0 1.5M587.8 513.2l0.0 1.2M593.8 426.0l0.8 3.9M597.1 514.5l0.0 0.9M602.2 441.2l0.8 3.8M603.5 473.3l0.0 1.2" stroke="#ffffff" stroke-width="1.6" stroke-linecap="round" fill="none"/>
<path d="M105.5 335.5l1.2 3.4M106.7 342.9l1.2 3.2M107.4 351.6l0.9 2.4M108.4 358.5l1.2 3.3M109.5 365.7l1.0 2.7M110.0 372.8l1.0 2.8M110.9 379.8l1.6 4.4M111.9 389.0l0.9 2.5M113.7 404.6l1.1 3.0M114.2 412.1l1.6 4.4M115.0 420.3l1.3 3.7M118.2 448.5l1.5 4.2M116.8 278.8l1.0 2.7M119.4 300.6l1.0 2.8M120.9 315.3l1.1 2.9M123.2 334.4l1.3 3.5M123.9 341.2l1.3 3.5M124.7 348.1l1.4 3.8M126.0 357.2l0.9 2.4M126.7 363.7l1.2 3.4M127.4 372.0l1.1 3.1M128.1 378.2l1.1 3.1M132.3 414.4l1.0 2.7M132.8 419.8l1.4 4.0M133.2 425.8l1.7 4.6M134.7 434.6l1.2 3.2M136.1 450.6l1.1 3.1M130.8 266.2l0.9 2.4M133.0 281.5l0.7 1.9M133.3 287.5l0.8 2.3M136.2 310.2l0.9 2.4M137.0 318.1l0.8 2.1M137.4 324.0l1.0 2.8M138.0 330.5l0.8 2.2M139.4 342.6l1.2 3.4M140.1 349.8l1.3 3.7M140.9 356.7l1.5 4.0M142.0 364.0l1.4 3.8M142.7 370.9l1.2 3.4M144.2 384.6l1.6 4.4M145.2 391.6l1.3 3.6M146.0 398.6l1.3 3.7M146.5 406.1l1.0 2.8M149.1 428.6l1.6 4.4M149.6 435.4l1.7 4.6M151.5 449.6l1.4 4.1M151.1 288.3l1.0 2.8M151.5 295.1l0.9 2.5M152.8 303.0l1.0 2.8M153.4 310.5l1.2 3.4M157.5 348.5l1.2 3.4M158.4 356.5l1.0 2.8M160.4 371.6l1.1 2.9M162.7 394.0l1.1 3.1M163.4 400.6l1.2 3.2M164.3 408.2l1.3 3.5M166.0 422.6l0.9 2.6M167.6 436.3l1.1 3.1M168.7 443.9l1.4 3.8M169.4 452.6l0.9 2.6M167.9 274.7l1.0 2.7M170.3 296.4l1.3 3.6M171.3 305.4l0.8 2.2M174.8 334.1l1.3 3.5M175.4 340.6l1.1 3.0M176.5 353.5l1.5 4.1M177.7 360.3l1.5 4.1M180.0 385.2l1.5 4.2M181.8 400.9l1.5 4.0M183.4 409.5l0.9 2.5M183.7 416.7l1.7 4.6M185.4 430.7l1.6 4.4M187.9 454.8l1.4 4.2M187.6 280.7l1.0 2.7M188.7 287.4l0.9 2.5M189.9 300.7l0.9 2.5M191.7 314.4l0.9 2.6M192.0 320.2l1.3 3.7M193.8 334.7l1.2 3.3M195.3 349.3l0.8 2.3M195.8 355.3l1.0 2.8M200.7 397.9l1.0 2.8M203.2 417.6l1.5 4.3M203.9 425.5l1.2 3.2M204.8 432.1l1.0 2.7M205.5 439.0l1.6 4.3M206.2 447.4l1.4 4.1M205.7 299.3l1.0 2.7M206.8 307.2l1.3 3.5M208.8 328.8l1.1 3.1M209.7 335.3l1.0 2.7M210.3 342.4l1.5 4.1M211.3 349.4l0.9 2.6M213.0 364.1l1.1 3.1M214.0 371.3l1.2 3.4M215.1 384.9l1.3 3.7M216.9 398.0l1.2 3.3M217.6 404.6l1.6 4.3M218.6 413.1l1.2 3.3M219.3 419.4l1.0 2.7M220.0 425.8l1.5 4.2M220.5 433.0l1.3 3.7M221.4 441.3l1.1 3.0M216.9 262.9l1.2 3.3M218.1 271.3l1.0 2.9M220.7 292.4l1.0 2.7M223.2 315.0l0.8 2.2M223.9 321.2l1.2 3.2M224.2 328.1l0.8 2.2M226.7 348.5l1.2 3.3M228.9 364.6l0.9 2.4M230.8 386.9l1.1 3.0M231.6 393.9l1.4 3.8M232.7 401.0l1.0 2.8M233.3 409.2l1.2 3.2M234.1 416.6l1.4 3.9M235.5 424.2l1.2 3.3M235.8 430.8l1.7 4.6M237.0 438.1l1.2 3.2M238.3 451.2l1.4 4.1M235.3 270.3l1.0 2.7M238.8 300.3l1.2 3.4M239.8 307.7l0.8 2.2M240.8 319.3l1.3 3.6M243.8 348.0l1.2 3.3M244.8 355.3l1.3 3.6M246.8 369.6l1.2 3.3M247.4 377.5l1.0 2.8M248.4 383.9l0.9 2.6M249.1 391.1l1.3 3.6M250.7 405.5l1.6 4.5M251.7 414.1l0.9 2.6M252.6 420.0l1.1 3.0M253.9 434.2l1.4 3.7M255.0 441.3l1.0 2.8M248.8 264.6l1.2 3.2M250.3 279.7l1.0 2.9M252.1 294.3l1.1 3.0M254.4 315.1l1.1 3.0M256.1 330.2l0.8 2.2M257.7 344.2l1.3 3.6M261.2 374.1l1.0 2.8M261.5 380.9l1.4 4.0M262.9 388.5l1.3 3.7M263.3 396.1l1.4 3.9M264.1 402.3l1.3 3.7M266.9 425.3l1.2 3.3M267.8 433.0l1.4 3.9M269.3 447.8l1.5 4.3M270.1 454.9l1.3 3.8M267.5 267.2l0.9 2.4M268.2 274.7l1.0 2.7M270.3 289.9l1.1 3.0M271.3 298.1l1.1 2.9M271.7 304.2l1.2 3.3M274.4 326.4l0.9 2.4M275.5 339.7l1.1 3.0M276.3 346.9l1.2 3.4M278.3 360.6l1.1 3.0M279.8 376.6l1.5 4.1M281.9 391.8l1.1 3.1M282.5 400.3l1.2 3.2M283.7 413.0l1.7 4.6M286.4 434.2l1.7 4.6M287.2 440.9l1.6 4.4M288.3 449.5l1.1 3.3M280.5 263.8l1.1 3.1M284.5 294.0l0.7 2.0M287.1 317.2l0.8 2.2M287.4 324.5l1.3 3.6M289.1 339.2l0.9 2.5M290.2 345.9l0.9 2.5M290.5 352.5l1.4 3.9M292.4 367.6l0.9 2.4M293.3 373.9l1.0 2.7M293.9 379.6l1.4 3.9M294.6 387.9l1.1 3.1M295.9 396.4l1.1 3.1M296.6 402.7l1.2 3.2M297.3 410.5l1.0 2.7M297.9 416.3l1.2 3.2M299.5 429.6l1.6 4.4M299.9 436.4l1.5 4.0M300.7 444.1l1.6 4.4M302.0 450.5l1.3 3.9M294.5 276.9l1.0 2.7M295.7 283.4l0.8 2.1M299.3 314.2l0.8 2.3M299.5 320.6l1.2 3.3M300.4 327.5l1.4 3.7M301.6 335.3l1.0 2.8M302.0 342.3l0.9 2.4M302.8 350.0l1.3 3.7M303.7 356.7l1.4 4.0M304.4 364.4l1.0 2.9M305.6 372.1l1.4 3.9M306.3 379.4l1.6 4.3M307.1 387.3l0.9 2.5M307.6 393.8l1.4 3.8M308.8 401.9l1.0 2.8M309.5 409.6l1.4 3.8M311.2 424.2l1.6 4.3M312.2 432.4l1.2 3.2M312.9 439.8l1.3 3.6M313.6 447.2l1.4 4.1M314.5 453.6l1.1 3.3M306.6 266.6l0.9 2.6M308.3 280.3l1.2 3.3M308.6 287.0l1.1 3.1M310.4 300.3l1.1 3.0M313.0 322.9l0.9 2.4M314.8 336.8l1.1 2.9M315.6 344.1l1.1 2.9M315.8 349.8l1.4 3.7M316.7 357.9l1.2 3.2M317.9 364.2l1.0 2.8M318.2 371.8l1.3 3.6M319.3 380.3l0.9 2.6M320.1 386.8l1.3 3.5M321.0 394.7l1.4 3.7M321.7 401.9l0.9 2.5M322.4 407.4l1.6 4.4M323.1 414.4l1.6 4.4M323.9 421.9l1.0 2.6M324.9 429.3l1.7 4.6M326.0 437.7l1.5 4.2M326.8 445.3l1.4 3.9M327.5 453.2l1.0 2.8M325.6 262.6l0.7 1.8M326.6 270.1l0.8 2.3M328.1 285.4l1.0 2.9M328.9 293.1l1.1 3.1M329.5 299.4l1.2 3.4M330.3 305.8l1.3 3.7M332.2 321.6l0.9 2.5M334.5 341.8l1.0 2.8M335.4 350.2l1.0 2.6M335.8 356.0l1.4 3.8M336.8 363.4l1.5 4.0M337.8 372.4l0.9 2.6M338.9 379.2l1.0 2.9M340.1 393.1l1.4 3.8M340.5 399.4l1.5 4.2M341.6 407.8l1.1 2.9M342.8 415.9l1.3 3.6M343.7 423.7l1.1 3.0M345.3 437.3l1.0 2.7M345.7 444.9l1.1 3.0M347.1 452.7l1.2 3.5M342.1 295.6l0.8 2.3M343.2 303.4l1.0 2.7M344.1 311.3l1.3 3.6M344.9 319.2l1.0 2.8M345.5 326.7l1.1 3.1M346.3 335.1l1.1 2.9M348.3 349.0l0.8 2.3M349.2 356.3l1.0 2.8M350.0 363.8l0.8 2.3M350.4 371.4l1.1 3.1M353.1 393.9l1.4 3.7M355.2 409.1l1.3 3.5M355.9 415.6l1.0 2.7M356.4 422.4l1.0 2.7M357.4 430.0l1.6 4.5M358.5 438.5l1.4 3.8M359.1 446.6l1.3 3.6M360.0 454.1l0.9 2.7M352.6 280.4l1.1 2.9M353.8 287.6l0.8 2.1M354.8 302.0l1.0 2.7M357.6 323.8l1.2 3.2M358.4 331.4l1.3 3.6M359.9 344.3l1.3 3.6M360.8 352.2l1.5 4.0M362.6 367.2l1.2 3.4M363.3 375.6l1.0 2.7M364.3 381.9l1.3 3.6M364.9 390.4l1.0 2.7M366.0 396.7l1.3 3.7M366.9 404.8l1.0 2.7M367.4 411.1l0.9 2.6M368.1 416.5l1.4 3.9M368.4 422.7l1.4 3.8M369.2 429.2l1.5 4.0M370.0 437.3l1.5 4.0M371.2 444.8l1.0 2.9M371.4 450.5l1.5 4.4M363.8 262.5l1.0 2.7M364.6 270.3l1.1 3.0M365.9 283.2l0.7 2.1M367.9 302.6l0.9 2.4M368.7 308.8l1.1 2.9M370.0 317.0l0.9 2.5M370.6 325.3l1.0 2.7M371.1 332.5l1.2 3.3M373.7 351.7l1.5 4.1M374.9 360.9l0.9 2.5M375.5 368.4l1.1 3.2M376.2 375.0l1.6 4.4M377.1 381.8l1.1 3.1M377.9 388.3l1.0 2.6M378.8 396.0l1.5 4.0M379.7 404.1l1.1 3.0M379.9 410.0l1.2 3.3M381.4 418.1l1.1 3.0M381.4 425.4l1.7 4.6M382.7 432.1l1.5 4.0M383.2 440.4l1.4 3.8M384.6 448.0l1.2 3.5M384.7 454.1l1.1 3.3M380.1 279.4l0.8 2.2M381.1 286.3l0.8 2.2M381.7 293.1l0.8 2.2M382.6 299.5l0.8 2.2M383.5 312.0l1.3 3.6M384.3 318.4l1.2 3.3M386.8 339.7l0.9 2.5M387.4 345.4l1.2 3.2M388.4 352.0l1.0 2.6M389.1 359.6l1.3 3.5M390.0 366.2l1.3 3.6M390.8 373.0l1.0 2.9M391.8 380.8l1.0 2.8M391.9 387.3l1.5 4.1M393.0 394.8l0.9 2.5M394.2 402.7l1.1 3.1M394.3 408.7l1.5 4.0M395.7 417.6l1.2 3.2M396.6 424.6l1.0 2.9M397.2 431.2l1.2 3.3M397.6 438.4l1.6 4.4M399.4 452.8l1.5 4.4M395.5 267.3l0.9 2.5M395.6 273.4l1.1 3.0M397.3 286.9l1.1 3.1M398.1 294.5l1.2 3.3M400.2 311.6l0.7 2.1M400.2 317.2l1.3 3.5M401.3 325.2l1.3 3.6M401.9 332.9l0.9 2.6M402.8 339.5l1.4 3.9M403.6 348.0l1.1 3.2M404.3 355.0l1.2 3.5M405.1 363.6l1.0 2.7M405.8 370.1l1.3 3.7M407.4 385.0l1.1 3.0M408.1 393.3l1.1 3.1M408.8 400.7l1.3 3.7M409.4 407.3l1.6 4.6M411.0 419.8l1.5 4.3M411.9 428.5l1.2 3.4M412.7 435.1l1.1 3.0M413.1 442.0l1.0 2.9M413.8 447.5l1.3 3.9M414.4 454.0l1.0 3.1M409.3 266.0l1.0 3.0M409.9 272.3l1.0 2.9M410.4 278.8l0.9 2.5M412.2 293.3l0.9 2.5M412.9 300.5l0.7 2.1M413.8 313.5l0.8 2.4M416.0 335.5l1.0 3.0M416.5 343.6l1.0 2.8M417.8 357.9l1.4 4.1M418.9 366.0l1.0 2.9M419.2 371.8l1.2 3.5M419.9 378.9l1.3 3.8M420.3 385.8l1.4 4.2M421.4 393.5l1.4 4.0M421.8 400.8l0.9 2.8M422.5 407.9l1.3 3.7M423.2 414.8l1.5 4.5M423.9 423.6l1.2 3.4M425.0 430.8l0.9 2.6M425.2 438.2l1.3 3.7M426.4 446.4l1.0 2.9M426.8 453.5l1.3 4.2M422.2 273.3l0.7 1.9M422.5 279.7l0.6 1.9M423.4 287.7l0.8 2.3M424.5 301.4l1.2 3.6M425.2 308.3l1.0 2.9M426.4 323.0l1.2 3.5M426.9 331.1l1.0 3.0M427.9 339.5l0.8 2.3M428.2 347.1l1.3 4.0M429.3 354.9l0.8 2.4M430.0 370.2l1.0 3.1M430.9 376.4l1.4 4.3M431.3 385.0l0.9 2.8M432.3 392.1l1.2 3.4M432.8 398.6l0.9 2.6M432.7 405.2l1.5 4.5M433.8 412.4l1.0 3.1M434.2 418.1l1.4 4.1M434.7 424.8l0.9 2.7M435.4 432.0l1.3 3.9M436.3 438.9l1.0 2.8M436.6 444.4l1.3 3.8M437.2 450.9l1.1 3.3M436.9 264.3l0.6 2.0M437.6 279.4l0.8 2.4M438.4 286.4l1.1 3.3M439.2 293.7l0.7 2.1M439.6 307.4l1.0 3.1M440.7 315.7l0.9 2.7M440.9 324.3l0.7 2.2M442.2 339.0l0.8 2.4M442.6 346.0l1.2 3.7M443.6 353.7l0.8 2.5M443.5 359.2l1.4 4.2M443.8 365.6l1.3 4.1M444.9 373.7l1.0 3.2M445.4 381.9l0.9 2.7M445.7 389.1l1.0 3.0M446.2 395.9l1.1 3.5M446.6 402.2l1.1 3.5M447.3 409.6l1.2 3.8M448.0 416.3l1.5 4.7M448.6 423.2l1.1 3.4M448.8 430.6l1.5 4.7M449.6 438.0l0.9 2.8M450.1 445.0l0.9 2.7M450.4 451.4l0.9 2.9M449.8 286.1l1.1 3.4M450.7 293.8l0.8 2.6M451.3 300.8l0.8 2.7M451.6 308.7l0.9 3.0M451.9 316.9l0.9 2.7M452.6 323.6l0.8 2.6M453.3 336.8l1.2 3.9M454.9 358.4l0.9 2.9M456.4 379.3l1.4 4.3M456.6 388.2l0.9 2.9M457.6 395.0l0.8 2.6M457.9 402.7l0.8 2.7M458.0 407.9l1.4 4.5M458.5 416.7l0.9 2.8M459.5 430.2l1.3 4.0M460.3 438.5l1.0 3.1M460.9 446.6l1.2 3.7M461.3 453.1l0.9 3.1M459.8 269.7l0.6 2.1M460.4 276.7l0.6 2.0M460.7 283.3l0.7 2.1M460.9 291.0l0.9 2.8M461.3 298.6l0.7 2.1M461.5 305.5l1.1 3.6M462.4 313.9l0.7 2.3M463.1 321.2l0.7 2.4M462.7 326.9l1.1 3.7M463.9 343.2l0.8 2.7M464.9 356.6l1.0 3.4M465.6 364.2l0.7 2.4M465.6 371.9l1.1 3.4M466.1 378.1l1.1 3.5M466.8 386.5l1.0 3.2M467.0 393.4l1.4 4.4M467.1 401.7l1.3 4.3M468.1 409.5l1.2 3.8M468.1 417.2l1.2 3.9M468.8 425.4l1.0 3.3M469.3 431.5l1.1 3.7M470.0 443.8l1.3 4.3M470.4 451.4l1.3 4.3M467.0 265.0l0.7 2.2M467.9 272.6l0.6 2.0M467.8 279.0l0.7 2.4M468.2 286.9l0.6 2.1M469.0 293.1l0.7 2.3M469.7 307.6l0.9 2.9M470.3 321.3l0.9 3.0M470.9 329.2l0.8 2.7M471.1 336.6l1.2 3.9M471.3 343.5l0.9 2.9M472.2 359.0l1.2 3.9M472.4 367.3l1.2 3.8M473.2 374.3l1.0 3.2M473.7 382.1l1.1 3.5M473.8 390.7l1.0 3.4M474.2 397.5l0.9 3.0M474.5 405.2l1.1 3.6M474.8 412.8l1.3 4.4M475.4 419.8l0.8 2.6M476.1 428.2l0.8 2.6M476.6 442.0l1.2 4.1M477.0 448.2l1.3 4.5M477.5 264.9l0.6 2.1M478.2 280.1l0.8 2.5M479.6 309.2l0.9 3.1M480.4 317.1l0.9 3.0M480.5 323.9l1.1 3.6M480.9 330.5l0.8 2.7M481.5 343.3l1.1 3.8M481.6 351.6l0.9 2.9M482.7 365.3l1.0 3.2M483.4 379.3l1.0 3.5M484.0 393.2l1.4 4.6M484.5 400.5l1.0 3.4M484.6 406.6l1.0 3.3M484.7 413.6l1.3 4.2M485.1 420.3l1.2 4.1M485.6 426.8l1.4 4.6M486.0 435.3l1.1 3.6M486.5 443.0l1.4 4.6M486.7 450.7l1.0 3.3M489.0 273.5l0.7 2.3M489.4 280.3l0.8 2.6M490.4 294.9l0.9 3.1M490.6 302.4l0.8 2.8M491.8 323.3l0.9 2.9M492.3 330.5l0.8 2.5M492.6 337.4l0.8 2.8M492.6 345.4l0.8 2.8M493.0 351.6l1.1 3.7M493.6 359.7l1.1 3.7M493.9 368.1l1.0 3.3M494.5 382.2l0.9 3.1M495.2 398.8l0.9 3.0M495.9 405.4l1.3 4.4M496.2 420.4l1.2 4.0M496.6 426.5l1.1 3.7M496.7 433.1l1.3 4.3M497.8 442.3l0.8 2.8M497.5 448.3l1.4 4.6M498.5 266.9l0.8 2.5M499.2 274.4l0.6 1.9M499.3 280.1l0.9 3.0M499.5 288.5l0.9 2.9M500.3 297.2l0.7 2.2M500.8 318.4l1.0 3.4M501.6 326.9l0.8 2.6M502.0 338.8l1.0 3.3M502.1 346.2l1.2 4.1M502.7 355.0l0.7 2.4M502.9 360.9l1.1 3.7M503.5 368.8l1.3 4.3M503.7 377.2l0.9 3.0M504.4 384.3l1.3 4.2M504.8 392.2l0.8 2.6M504.8 398.1l1.3 4.2M505.5 406.3l1.1 3.5M505.7 413.2l0.9 2.9M505.7 420.0l1.4 4.6M506.6 427.9l0.8 2.8M506.9 433.7l1.1 3.7M507.7 448.5l0.8 2.8M507.4 454.4l1.2 4.3" stroke="#ffffff" stroke-width="1.4" stroke-linecap="round" fill="none"/>
<path d="M104.1 354.0l0.0 0.3M105.2 362.0l0.1 0.6M105.9 366.5l0.1 0.7M106.0 371.2l0.1 0.7M108.4 388.5l0.1 0.6M109.2 397.4l0.1 0.7M109.8 402.2l0.0 0.4M110.4 410.3l0.1 0.6M110.8 414.5l0.1 0.8M111.8 418.9l0.0 0.2M112.0 422.5l0.0 0.3M113.1 430.8l0.0 0.2M114.0 439.6l0.0 0.3M114.7 444.2l0.0 0.2M114.6 448.0l0.1 0.5M115.1 451.9l0.0 0.5M113.7 281.0l0.0 0.4M114.1 288.6l0.0 0.2M114.6 292.8l0.0 0.2M118.2 322.1l0.1 0.5M118.8 326.7l0.1 0.5M119.9 339.3l0.0 0.4M121.4 352.4l0.1 0.5M121.9 356.6l0.0 0.4M123.1 365.1l0.1 0.5M123.2 369.0l0.1 0.4M123.7 373.7l0.0 0.4M125.0 382.1l0.0 0.3M125.8 391.0l0.1 0.7M127.2 399.8l0.1 0.6M128.8 416.2l0.0 0.4M129.0 420.7l0.0 0.4M129.9 424.5l0.1 0.6M130.5 433.1l0.1 0.6M131.4 437.7l0.1 0.4M131.5 442.3l0.0 0.4M132.1 446.2l0.1 0.7M132.8 450.5l0.0 0.2M132.9 455.1l0.0 0.5M127.6 266.9l0.0 0.3M127.8 271.7l0.0 0.3M128.3 275.7l0.1 0.5M129.6 287.8l0.0 0.3M132.0 308.9l0.0 0.2M132.8 317.5l0.1 0.7M133.8 325.4l0.1 0.6M134.7 329.7l0.1 0.5M135.7 337.8l0.1 0.7M136.7 351.4l0.1 0.6M137.2 355.2l0.1 0.7M138.9 371.7l0.0 0.4M139.9 376.5l0.0 0.2M140.7 384.9l0.0 0.3M141.1 389.0l0.0 0.3M141.9 393.0l0.0 0.4M142.2 397.7l0.0 0.4M143.5 406.9l0.1 0.5M144.8 419.1l0.1 0.6M144.8 422.8l0.1 0.7M145.3 426.9l0.1 0.8M145.7 431.0l0.1 0.6M146.3 435.5l0.1 0.5M147.2 440.0l0.1 0.5M147.2 444.3l0.0 0.3M148.1 448.3l0.1 0.7M148.3 452.7l0.0 0.3M146.7 283.8l0.0 0.4M147.4 288.0l0.1 0.6M148.4 296.3l0.0 0.4M150.1 313.2l0.1 0.6M151.1 322.1l0.0 0.2M151.5 325.8l0.0 0.2M152.1 329.9l0.1 0.5M153.6 346.8l0.0 0.4M154.8 355.0l0.1 0.7M155.1 359.4l0.1 0.5M155.9 363.8l0.0 0.2M156.3 367.7l0.1 0.5M159.5 393.7l0.1 0.5M160.1 401.0l0.1 0.6M160.4 405.6l0.1 0.7M161.1 410.2l0.1 0.7M161.7 414.5l0.1 0.7M162.0 419.3l0.1 0.6M162.6 423.2l0.1 0.6M163.1 428.2l0.0 0.2M163.7 432.1l0.0 0.3M164.2 436.0l0.0 0.2M164.5 439.6l0.1 0.5M166.3 291.7l0.1 0.5M166.9 300.8l0.0 0.2M167.8 305.4l0.1 0.5M168.7 314.5l0.0 0.2M169.8 326.3l0.0 0.3M170.7 330.2l0.0 0.4M171.6 338.8l0.0 0.3M172.8 348.1l0.0 0.3M172.8 352.4l0.0 0.3M174.3 361.1l0.1 0.5M174.2 364.9l0.0 0.2M175.2 368.9l0.0 0.3M175.5 372.7l0.1 0.6M175.9 377.1l0.0 0.2M176.4 381.6l0.1 0.7M177.1 386.3l0.0 0.4M177.8 394.8l0.1 0.8M179.1 403.6l0.0 0.2M179.8 412.0l0.1 0.7M180.0 416.0l0.1 0.5M180.5 420.4l0.0 0.3M182.3 433.9l0.1 0.7M182.9 438.7l0.1 0.4M183.8 447.2l0.0 0.3M184.1 452.0l0.0 0.2M184.5 455.8l0.0 0.5M182.1 264.4l0.0 0.2M185.2 290.3l0.0 0.4M185.5 295.0l0.0 0.4M185.7 298.6l0.1 0.5M186.6 306.5l0.1 0.4M188.0 318.4l0.0 0.2M188.5 322.3l0.0 0.4M189.9 330.6l0.0 0.3M190.8 342.9l0.0 0.4M193.8 367.4l0.1 0.5M194.9 376.9l0.0 0.2M195.4 384.2l0.0 0.3M196.0 388.4l0.0 0.4M196.8 392.7l0.1 0.5M197.7 401.1l0.1 0.6M198.1 404.8l0.1 0.7M198.9 413.0l0.0 0.4M200.0 422.0l0.1 0.6M200.3 426.2l0.0 0.2M200.6 430.5l0.1 0.8M201.3 434.7l0.0 0.3M202.4 446.5l0.1 0.6M203.5 455.1l0.1 0.6M197.9 262.0l0.0 0.2M198.3 265.8l0.0 0.2M199.4 278.4l0.0 0.2M200.8 290.9l0.0 0.4M203.4 311.5l0.1 0.6M206.7 340.3l0.1 0.6M209.6 365.9l0.1 0.7M209.9 370.0l0.1 0.7M213.1 395.6l0.0 0.3M213.5 399.6l0.0 0.3M213.8 403.4l0.0 0.2M214.6 411.4l0.1 0.5M215.2 415.1l0.1 0.6M215.7 419.7l0.1 0.7M216.8 431.8l0.1 0.8M217.7 436.2l0.1 0.7M218.2 440.4l0.0 0.4M219.4 452.5l0.1 0.6M213.7 263.0l0.1 0.5M213.7 267.3l0.0 0.3M214.6 271.8l0.0 0.3M214.8 276.0l0.0 0.2M215.6 284.3l0.0 0.2M217.6 300.4l0.0 0.4M218.2 305.0l0.1 0.5M220.7 325.4l0.0 0.2M221.1 329.4l0.0 0.4M221.2 334.1l0.0 0.4M222.8 343.0l0.0 0.4M223.8 356.4l0.1 0.5M224.3 360.9l0.0 0.3M226.3 377.0l0.0 0.4M227.6 389.9l0.0 0.4M228.7 398.0l0.1 0.8M229.2 402.8l0.1 0.6M229.7 406.6l0.0 0.4M230.7 415.6l0.0 0.3M231.0 419.2l0.1 0.6M231.9 427.0l0.0 0.3M232.8 435.5l0.0 0.4M233.5 439.2l0.0 0.4M233.7 443.8l0.1 0.5M234.5 447.8l0.0 0.2M235.0 455.5l0.0 0.4M231.4 267.8l0.0 0.4M233.2 284.8l0.0 0.2M235.4 301.2l0.1 0.5M235.7 305.1l0.0 0.1M236.5 309.9l0.0 0.2M236.9 317.8l0.0 0.1M238.2 325.6l0.0 0.4M239.9 342.5l0.1 0.7M241.7 358.9l0.0 0.2M242.7 367.1l0.1 0.5M243.9 380.3l0.0 0.3M244.6 384.6l0.1 0.5M245.0 388.7l0.1 0.5M245.6 392.9l0.0 0.3M246.8 404.5l0.1 0.7M247.3 409.2l0.1 0.7M247.7 413.3l0.0 0.3M248.3 417.5l0.0 0.4M249.0 421.5l0.0 0.3M249.1 426.0l0.1 0.6M249.9 430.7l0.1 0.5M251.0 439.9l0.1 0.7M252.0 448.5l0.1 0.6M252.7 456.7l0.0 0.4M245.1 262.0l0.0 0.3M245.1 266.7l0.0 0.4M248.7 295.1l0.1 0.5M249.2 302.5l0.0 0.4M251.8 322.8l0.0 0.4M255.6 354.6l0.1 0.5M256.0 359.3l0.0 0.4M256.0 363.3l0.1 0.7M256.7 367.9l0.1 0.6M257.2 372.7l0.0 0.3M257.8 376.9l0.0 0.4M258.9 386.1l0.1 0.4M259.4 390.3l0.1 0.5M259.5 394.3l0.1 0.7M261.3 407.5l0.0 0.4M262.2 416.8l0.0 0.4M262.8 420.8l0.1 0.6M263.4 425.7l0.0 0.2M264.2 434.3l0.1 0.7M265.2 442.5l0.1 0.7M266.4 451.0l0.0 0.4M266.3 455.5l0.0 0.2M264.2 269.6l0.0 0.4M266.2 286.9l0.0 0.4M267.1 295.3l0.1 0.5M267.8 303.4l0.1 0.6M269.5 315.6l0.1 0.6M270.2 320.1l0.1 0.6M271.3 332.2l0.1 0.5M272.0 340.9l0.0 0.2M273.1 349.2l0.0 0.2M274.7 361.4l0.1 0.6M275.0 366.2l0.1 0.7M275.6 370.6l0.1 0.6M276.0 375.0l0.0 0.3M276.8 379.1l0.0 0.3M277.6 388.0l0.1 0.5M277.7 391.7l0.1 0.6M278.2 395.9l0.1 0.7M279.4 405.4l0.0 0.3M280.3 409.4l0.1 0.5M280.9 417.1l0.0 0.3M281.3 421.2l0.1 0.5M281.7 424.9l0.0 0.3M282.8 433.1l0.1 0.5M283.2 437.0l0.1 0.6M283.8 444.9l0.1 0.5M284.7 452.7l0.0 0.4" stroke="#ffffff" stroke-width="1.3" stroke-linecap="round" fill="none"/>
<path d="M300.0 469.8l0.1 2.1M300.3 476.5l0.0 2.1M300.5 499.4l0.0 0.7M300.3 503.9l0.0 0.7M300.7 509.7l0.0 1.4M300.8 515.7l0.0 1.7M300.5 520.8l0.0 1.8M300.7 525.7l0.0 1.1M301.0 533.3l0.0 1.7M300.6 540.2l0.0 1.6M301.3 548.0l0.0 2.1M301.2 560.3l0.0 2.2M301.3 565.1l0.0 1.9M301.5 576.6l0.0 0.8M301.2 582.4l0.0 1.7M301.3 588.1l0.0 0.9M301.8 594.1l0.0 1.7M301.6 599.2l0.0 1.9M301.6 607.2l0.0 1.1M302.0 614.7l0.0 0.7M302.1 619.7l0.0 0.7M302.0 644.1l0.0 1.6M311.9 463.4l0.0 0.7M312.7 476.5l0.0 2.1M312.5 483.3l0.0 0.7M312.6 489.3l0.0 1.5M312.9 495.4l0.0 1.3M313.2 502.0l0.0 1.0M313.0 507.4l0.0 2.0M313.2 519.5l0.0 1.4M313.2 525.7l0.0 2.0M313.1 531.9l0.0 1.5M313.2 538.6l0.0 0.6M313.2 544.4l0.0 1.7M313.6 557.1l0.0 2.0M313.4 564.1l0.0 2.1M313.7 571.5l0.0 1.5M313.7 589.6l0.0 1.2M314.4 596.1l0.0 1.8M314.5 602.8l0.0 1.4M314.5 614.4l0.0 1.7M314.2 621.3l0.0 1.1M325.4 467.5l0.0 0.7M325.5 471.8l0.1 2.2M326.0 479.8l0.0 1.4M325.9 487.1l0.0 0.7M325.8 491.9l0.0 2.1M326.1 498.7l0.0 2.2M326.2 504.9l0.0 1.6M326.5 535.6l0.0 0.6M326.2 542.7l0.0 0.7M326.6 554.6l0.0 1.9M326.5 566.5l0.0 0.6M326.7 580.3l0.0 1.8M327.1 586.9l0.0 1.9M327.2 594.0l0.0 0.6M327.4 600.1l0.0 1.6M327.4 605.7l0.0 1.9M327.3 612.1l0.0 2.1M327.0 617.2l0.0 1.1M327.2 627.4l0.0 1.9M327.9 635.2l0.0 1.6M327.9 640.8l0.0 1.7M327.5 652.8l0.0 1.2M344.8 464.7l0.0 0.7M345.1 470.8l0.1 2.0M344.7 476.9l0.0 1.6M345.2 483.7l0.0 1.0M345.0 489.3l0.0 1.7M345.4 494.5l0.0 1.0M345.3 511.1l0.0 1.7M345.5 525.8l0.0 0.8M345.7 532.1l0.0 0.9M345.9 538.4l0.0 1.2M346.0 543.6l0.0 1.8M345.8 558.6l0.0 1.3M346.2 563.7l0.0 1.4M346.0 568.5l0.0 1.8M346.2 581.6l0.0 1.9M346.5 588.7l0.0 0.9M346.7 608.7l0.0 1.0M346.8 616.0l0.0 1.1M346.8 627.4l0.0 1.9M357.2 465.0l0.1 2.2M357.9 470.9l0.0 0.6M358.3 477.2l0.0 1.5M358.2 484.8l0.0 1.5M358.0 492.3l0.0 1.7M358.1 499.5l0.0 0.8M358.5 505.2l0.0 1.4M358.4 512.1l0.0 1.5M358.2 518.5l0.0 1.8M358.7 530.0l0.0 1.9M358.4 534.8l0.0 2.1M358.8 542.8l0.0 1.9M358.6 547.8l0.0 2.1M359.1 554.2l0.0 0.7M359.1 566.1l0.0 0.6M358.9 570.9l0.0 1.5M359.0 577.9l0.0 1.1M359.1 584.4l0.0 0.8M359.5 591.3l0.0 2.1M359.5 598.1l0.0 1.8M359.5 605.5l0.0 1.1M359.5 617.0l0.0 0.6M359.7 622.0l0.0 1.0M359.6 626.9l0.0 1.9M359.8 634.8l0.0 1.9M359.9 642.7l0.0 2.0M369.3 461.7l0.1 1.9M370.0 485.3l0.0 0.8M370.1 489.9l0.0 1.3M370.6 497.1l0.0 0.8M370.6 510.9l0.0 1.7M370.9 523.7l0.0 1.4M370.7 529.3l0.0 1.6M370.8 544.9l0.0 0.9M371.1 550.7l0.0 1.5M371.2 556.7l0.0 1.7M371.1 565.2l0.0 0.6M371.6 570.1l0.0 1.9M371.3 574.9l0.0 2.1M371.6 582.0l0.0 0.9M371.3 589.3l0.0 1.2M371.6 595.5l0.0 0.9M371.9 602.1l0.0 1.0M371.7 606.6l0.0 1.5M371.7 613.0l0.0 1.7M372.0 623.3l0.0 0.9M372.2 629.6l0.0 1.9M372.3 643.0l0.0 0.8M382.4 464.7l0.1 1.7M382.9 472.1l0.0 0.6M382.9 478.9l0.0 2.1M383.0 491.9l0.0 1.4M383.4 498.3l0.0 0.8M383.7 511.9l0.0 1.0M383.3 516.6l0.0 1.9M383.4 524.0l0.0 1.2M383.7 529.6l0.0 1.5M384.1 535.0l0.0 0.6M383.7 542.3l0.0 1.2M384.1 549.1l0.0 1.4M384.1 556.8l0.0 1.6M384.2 563.1l0.0 0.8M384.1 568.7l0.0 1.2M384.5 588.6l0.0 2.1M384.4 593.1l0.0 2.0M384.3 598.8l0.0 1.5M384.6 604.3l0.0 0.8M384.8 609.3l0.0 1.2M384.6 616.2l0.0 1.4M384.9 623.6l0.0 2.2M385.2 646.6l0.0 2.1M397.4 465.2l0.1 1.3M397.6 471.0l0.1 2.2M397.6 477.0l0.0 0.8M397.7 481.6l0.0 1.2M398.1 489.4l0.0 0.8M398.0 495.9l0.0 0.9M398.1 501.3l0.0 1.3M398.0 507.0l0.0 2.2M398.0 513.4l0.0 2.2M398.0 518.5l0.0 1.4M398.2 528.5l0.0 2.2M398.1 540.4l0.0 0.7M398.7 545.3l0.0 1.3M398.8 553.0l0.0 1.2M398.9 557.9l0.0 1.4M398.8 563.0l0.0 1.9M398.9 570.4l0.0 0.6M399.2 577.5l0.0 0.8M399.2 584.6l0.0 2.1M398.9 592.8l0.0 1.5M399.2 598.3l0.0 1.6M399.2 604.8l0.0 2.0M399.5 612.8l0.0 1.6M399.2 620.5l0.0 0.9M399.5 632.4l0.0 1.4M399.6 645.4l0.0 0.8M411.8 463.4l0.0 0.9M412.4 476.0l0.0 2.2M412.4 481.7l0.0 0.6M412.3 488.3l0.0 1.4M412.5 493.7l0.0 1.3M412.6 501.1l0.0 1.6M413.0 506.3l0.0 1.1M412.7 513.7l0.0 1.3M413.0 519.3l0.0 1.3M412.9 525.7l0.0 1.3M413.3 530.1l0.0 1.8M412.9 537.8l0.0 1.0M413.0 553.1l0.0 0.7M413.6 559.8l0.0 0.9M413.2 567.0l0.0 2.0M413.6 572.7l0.0 0.7M413.9 585.5l0.0 1.3M413.5 591.2l0.0 1.1M414.1 596.0l0.0 1.6M413.9 601.0l0.0 1.5M414.2 607.4l0.0 1.8M414.4 620.9l0.0 0.9M414.6 639.7l0.0 1.2M414.6 644.2l0.0 1.8M424.1 462.3l0.1 1.7M424.4 468.4l0.1 1.7M424.5 473.4l0.1 2.0M424.9 478.9l0.0 2.0M424.5 486.5l0.0 2.0M425.2 502.4l0.0 0.9M425.2 508.4l0.0 1.3M425.1 515.6l0.0 1.6M425.2 523.1l0.0 1.3M425.1 538.3l0.0 1.9M425.4 544.4l0.0 0.7M425.3 550.7l0.0 0.6M425.5 555.2l0.0 1.0M426.0 560.2l0.0 1.8M425.7 574.9l0.0 1.4M426.1 582.7l0.0 0.9M426.3 587.0l0.0 2.2M426.5 609.0l0.0 1.1M426.6 613.3l0.0 2.0M426.2 618.8l0.0 2.2M426.7 632.7l0.0 2.1M426.5 648.0l0.0 2.1M434.5 464.6l0.1 1.8M434.8 479.5l0.0 1.5M434.9 484.1l0.0 1.7M435.2 488.4l0.0 2.2M435.5 496.5l0.0 1.7M435.3 504.4l0.0 1.2M435.8 518.9l0.0 0.8M435.4 523.2l0.0 2.1M435.7 528.5l0.0 2.0M435.6 536.8l0.0 0.9M435.9 544.5l0.0 1.1M436.2 562.9l0.0 1.9M436.3 582.7l0.0 1.3M436.4 592.1l0.0 2.2M436.7 606.0l0.0 1.4M436.5 612.7l0.0 0.9M436.7 618.6l0.0 1.0M436.8 623.7l0.0 1.1M436.8 638.0l0.0 1.3M447.9 465.4l0.1 1.6M448.0 473.2l0.0 0.8M448.7 486.2l0.0 0.6M448.8 490.4l0.0 1.2M448.8 495.1l0.0 2.0M449.0 507.5l0.0 2.0M449.1 514.6l0.0 2.1M449.2 520.9l0.0 1.1M448.7 526.4l0.0 1.2M449.2 537.6l0.0 2.0M449.1 545.7l0.0 1.2M449.0 550.6l0.0 0.8M449.4 555.1l0.0 1.0M449.3 562.5l0.0 1.6M449.7 567.5l0.0 2.2M449.7 582.0l0.0 0.9M449.6 588.9l0.0 1.9M449.7 595.1l0.0 1.9M449.7 601.6l0.0 1.6M450.1 607.1l0.0 0.9M450.2 620.0l0.0 1.5M450.2 625.4l0.0 0.8M450.4 645.2l0.0 1.0M450.5 651.8l0.0 2.2M458.4 465.4l0.1 2.0M458.5 480.5l0.0 1.3M458.7 488.3l0.0 1.4M458.9 495.4l0.0 0.8M459.1 502.7l0.0 1.1M459.3 522.2l0.0 0.5M459.6 527.5l0.0 1.9M459.2 533.4l0.0 0.8M459.3 540.2l0.0 2.2M459.9 546.3l0.0 2.2M459.4 552.1l0.0 1.2M460.0 558.7l0.0 2.0M460.1 566.7l0.0 1.0M460.1 573.9l0.0 0.7M460.3 585.8l0.0 1.4M460.1 591.7l0.0 1.8M460.2 605.6l0.0 1.9M460.5 610.8l0.0 1.7M460.7 628.2l0.0 2.0M467.5 464.9l0.0 0.8M467.9 471.4l0.0 1.4M467.8 476.8l0.0 2.1M468.3 489.3l0.0 1.1M468.3 494.2l0.0 1.5M468.4 500.8l0.0 1.5M468.3 508.6l0.0 1.0M468.5 519.6l0.0 1.9M468.8 526.8l0.0 1.2M468.6 532.1l0.0 1.6M468.9 536.9l0.0 1.4M468.6 543.3l0.0 1.1M468.8 558.0l0.0 0.9M469.0 562.4l0.0 1.3M469.3 577.0l0.0 0.7M469.4 584.2l0.0 1.6M469.7 604.0l0.0 1.3M469.8 611.5l0.0 1.1M469.9 619.1l0.0 0.7M469.6 628.8l0.0 1.7M469.9 634.0l0.0 0.6M474.7 467.8l0.0 1.2M475.0 474.3l0.0 0.8M474.6 481.2l0.0 1.5M475.0 485.6l0.0 2.1M474.9 491.6l0.0 0.8M475.1 503.7l0.0 1.5M474.9 508.4l0.0 2.2M475.2 514.5l0.0 1.0M475.4 520.8l0.0 0.7M475.4 531.9l0.0 1.2M475.2 536.7l0.0 0.7M475.7 543.0l0.0 2.2M475.7 547.7l0.0 2.2M475.8 561.1l0.0 0.7M475.7 566.7l0.0 1.2M475.9 572.1l0.0 2.2M475.9 583.8l0.0 2.2M476.1 598.3l0.0 1.7M476.0 603.6l0.0 1.5M476.7 611.7l0.0 1.0M476.3 617.1l0.0 0.6M476.8 626.6l0.0 1.3M476.5 633.9l0.0 2.2M477.0 642.2l0.0 1.4M477.0 647.2l0.0 1.4M483.8 464.6l0.1 2.0M484.1 472.4l0.0 2.2M484.3 479.2l0.0 1.8M484.5 486.0l0.0 1.9M484.6 492.1l0.0 0.7M484.5 499.5l0.0 1.3M484.6 506.9l0.0 2.2M484.8 513.9l0.0 1.4M484.8 521.8l0.0 0.8M485.0 527.4l0.0 1.6M484.8 534.2l0.0 2.1M485.4 541.6l0.0 0.9M485.5 547.7l0.0 2.1M485.3 566.9l0.0 0.8M485.4 571.7l0.0 0.6M485.6 581.9l0.0 1.2M485.7 587.2l0.0 1.6M486.0 608.2l0.0 2.0M485.7 613.5l0.0 2.2M486.1 619.5l0.0 0.8M485.9 626.0l0.0 1.3M495.2 469.8l0.0 1.4M495.8 477.4l0.0 1.5M495.7 484.7l0.0 1.5M495.9 492.8l0.0 1.3M495.8 500.2l0.0 1.0M496.0 513.3l0.0 1.8M496.1 526.9l0.0 1.0M496.3 534.0l0.0 1.0M496.4 540.3l0.0 0.6M496.4 545.9l0.0 2.1M496.7 551.8l0.0 1.8M496.8 558.9l0.0 2.1M496.8 570.5l0.0 2.1M497.1 583.5l0.0 2.2M497.1 590.5l0.0 0.6M496.8 597.1l0.0 2.0M497.4 603.6l0.0 1.1M497.0 611.2l0.0 1.0M497.1 625.0l0.0 1.4M497.6 629.4l0.0 1.8M497.2 637.2l0.0 2.0M504.9 464.8l0.0 1.4M505.0 469.6l0.0 2.2M505.4 485.1l0.0 1.1M505.3 490.4l0.0 2.0M505.1 497.0l0.0 2.1M505.5 509.1l0.0 1.4M505.9 524.1l0.0 1.4M505.6 531.3l0.0 0.7M506.0 536.8l0.0 1.9M505.7 544.3l0.0 2.0M505.8 549.5l0.0 1.4M505.9 556.8l0.0 1.8M506.3 562.6l0.0 1.0M506.3 569.3l0.0 1.9M506.4 576.4l0.0 1.8M506.7 588.8l0.0 1.4M506.7 601.8l0.0 1.4M507.0 607.4l0.0 2.2M506.7 615.5l0.0 1.2M506.8 621.4l0.0 0.8M507.3 632.3l0.0 2.2M506.9 638.5l0.0 1.1M507.0 644.2l0.0 0.6M507.0 650.1l0.0 1.8" stroke="#ffffff" stroke-width="1.2" stroke-linecap="round" fill="none"/>
<path d="M120.1 459.7l0.6 11.2M120.5 471.4l0.2 14.7M121.2 495.5l0.1 5.4M121.0 503.4l0.1 7.9M121.1 514.7l0.1 6.1M121.4 521.5l0.1 10.3M121.5 533.5l0.2 14.9M121.3 551.1l0.2 17.1M122.3 603.7l0.2 14.4M138.4 480.0l0.1 9.8M138.6 494.2l0.1 9.3M138.6 518.2l0.2 16.3M139.1 542.2l0.1 11.0M138.9 557.7l0.1 7.0M139.6 582.3l0.1 10.9M139.5 598.5l0.1 6.3M139.9 619.3l0.1 10.8M153.2 461.5l0.4 6.4M153.7 490.2l0.1 11.5M154.5 524.5l0.2 12.7M154.6 540.9l0.1 10.3M154.6 554.5l0.2 13.0M155.1 572.2l0.1 11.9M155.0 587.5l0.1 12.4M171.4 479.6l0.1 7.1M171.5 486.5l0.1 11.3M171.5 501.8l0.1 8.1M171.9 520.9l0.1 12.4M172.3 559.7l0.1 11.5M172.2 576.2l0.1 11.1M173.1 611.8l0.2 13.8M188.7 458.4l0.6 10.0M189.7 471.5l0.2 11.1M189.9 487.4l0.1 8.9M190.1 518.1l0.1 8.9M190.6 528.6l0.2 15.6M190.5 551.5l0.1 6.8M191.1 583.6l0.1 7.6M191.5 621.8l0.1 5.7M207.8 457.8l0.8 13.3M208.5 477.3l0.1 10.4M209.5 530.4l0.1 11.7M209.4 545.3l0.1 11.0M209.6 559.6l0.1 9.3M210.4 621.9l0.1 10.9M224.1 459.1l0.6 11.4M224.5 470.5l0.3 16.4M224.9 496.9l0.1 7.2M224.9 504.3l0.2 15.5M225.2 544.9l0.2 15.1M239.6 457.9l0.9 18.0M240.0 485.4l0.1 7.2M240.2 489.9l0.2 16.8M241.0 524.5l0.2 15.0M240.9 548.5l0.1 6.0M242.1 619.0l0.1 8.0M257.1 467.5l0.4 12.8M257.9 484.2l0.1 11.8M257.7 499.1l0.2 12.7M258.2 518.3l0.1 6.4M258.9 562.4l0.1 6.8M258.6 577.7l0.2 17.6M259.1 602.2l0.1 11.0M259.3 632.2l0.1 11.1M271.8 481.3l0.1 8.2M272.0 493.3l0.1 9.8M272.1 505.2l0.2 15.0M272.3 525.2l0.1 11.6M272.4 543.1l0.1 8.8M272.5 552.8l0.2 13.3M272.5 567.7l0.2 15.9M273.1 586.7l0.2 17.2M273.5 610.2l0.1 12.0M290.4 481.2l0.1 5.8M290.4 506.7l0.1 9.1M290.8 516.4l0.2 13.1M291.0 542.0l0.2 17.6M291.2 565.4l0.2 17.8M291.5 607.6l0.1 11.9M292.2 634.3l0.1 11.9M303.1 464.0l0.3 6.2M303.4 469.5l0.3 16.6M304.0 493.0l0.1 9.2M303.9 505.0l0.1 9.6M304.4 526.7l0.1 11.2M304.6 537.9l0.2 17.4M304.5 562.3l0.1 9.9M305.2 576.1l0.1 10.5M305.3 588.0l0.2 17.2M305.4 629.4l0.1 9.2M315.7 467.1l0.4 15.4M316.2 488.9l0.1 12.1M316.8 504.6l0.2 15.3M317.1 523.9l0.2 17.8M317.4 596.2l0.1 10.1M318.2 625.7l0.1 7.2M328.6 461.8l0.5 10.9M329.2 476.2l0.1 11.4M329.6 506.9l0.1 9.9M330.1 539.2l0.1 6.2M329.8 546.9l0.1 7.0M330.0 554.0l0.1 12.3M330.3 570.1l0.2 13.5M330.8 590.5l0.1 8.2M330.7 601.7l0.1 6.2M331.0 620.7l0.1 8.0M331.1 633.2l0.1 6.5M331.4 638.0l0.2 13.6M348.4 473.1l0.2 17.0M348.6 501.2l0.1 6.6M349.1 510.3l0.1 8.4M349.0 522.1l0.1 9.2M349.5 533.6l0.2 14.0M349.6 552.5l0.2 12.7M349.5 568.6l0.2 14.8M350.3 593.2l0.1 6.0M350.3 600.6l0.1 9.4M350.1 613.5l0.1 11.7M350.7 630.3l0.1 11.1M361.1 468.8l0.3 14.3M361.9 485.2l0.2 17.9M362.2 508.2l0.2 16.4M362.1 535.0l0.1 5.6M362.3 541.8l0.1 11.1M362.4 553.6l0.2 17.8M362.6 576.9l0.2 13.6M363.0 617.2l0.1 7.3M363.7 634.2l0.2 13.7M373.2 461.7l0.4 6.7M373.7 465.5l0.5 16.7M374.1 488.3l0.2 14.6M374.5 524.1l0.2 13.8M374.7 544.7l0.1 6.5M375.1 564.5l0.1 10.6M375.3 576.8l0.2 15.2M375.4 612.8l0.2 13.9M386.2 460.4l0.4 6.8M386.3 468.8l0.3 8.3M386.4 479.3l0.1 11.2M387.3 515.3l0.2 13.6M387.3 538.2l0.1 5.5M387.6 547.5l0.1 7.1M387.3 554.3l0.2 14.0M388.3 618.9l0.2 17.7M388.7 642.2l0.2 16.0M400.2 456.1l0.8 13.3M401.5 476.5l0.1 8.8M401.6 483.9l0.2 17.6M401.4 510.8l0.1 6.6M401.8 516.2l0.2 16.2M402.1 547.3l0.2 15.4M402.3 568.5l0.1 11.0M403.0 599.6l0.1 8.4M403.2 611.0l0.1 7.8M415.8 474.4l0.2 13.1M416.1 494.3l0.1 5.9M416.3 498.2l0.2 17.5M416.7 524.2l0.1 7.2M416.7 534.7l0.1 8.9M416.5 545.4l0.1 11.4M417.0 559.8l0.1 11.4M417.0 576.7l0.1 8.4M417.6 589.3l0.1 5.6M417.6 627.1l0.1 6.0M428.5 479.4l0.2 15.7M428.6 500.7l0.2 13.0M428.8 516.5l0.2 15.7M429.2 535.5l0.2 17.1M429.1 559.4l0.2 14.3M429.2 578.0l0.2 16.6M429.5 599.3l0.2 13.2M437.7 458.3l0.6 15.2M439.0 503.0l0.1 9.7M438.9 512.7l0.2 15.6M439.3 545.5l0.2 16.3M439.9 567.0l0.2 13.8M439.9 588.9l0.1 6.3M440.5 622.5l0.1 9.5M440.8 633.5l0.2 15.9M451.4 462.9l0.4 11.4M452.0 495.9l0.2 14.8M452.5 518.6l0.1 6.6M452.9 541.4l0.1 8.5M453.0 551.5l0.1 10.2M452.8 564.1l0.2 13.1M453.6 596.5l0.1 6.8M453.8 605.7l0.1 11.6M462.5 474.8l0.1 10.5M462.7 484.7l0.2 16.6M462.9 506.4l0.2 16.4M463.0 527.2l0.2 13.6M463.1 546.3l0.2 13.5M463.4 564.6l0.2 12.8M463.4 579.8l0.2 15.1M464.2 622.3l0.1 11.5M464.0 636.1l0.2 15.4M471.2 462.5l0.4 13.1M471.5 478.3l0.2 16.8M472.1 501.1l0.2 12.6M472.2 515.1l0.2 15.1M472.6 550.4l0.1 7.3M472.9 554.6l0.2 17.8M472.6 581.8l0.1 10.4M473.1 594.6l0.1 12.3M473.4 609.5l0.2 16.1M477.6 455.5l0.5 17.7M478.4 479.6l0.2 13.9M478.4 496.4l0.2 14.5M478.5 513.2l0.2 15.3M478.8 533.3l0.1 11.4M479.4 546.3l0.2 14.5M479.2 567.2l0.1 12.2M479.9 621.2l0.1 10.1M480.1 633.9l0.1 11.7M487.7 457.7l0.5 17.1M488.3 482.5l0.1 7.9M488.4 492.1l0.1 8.5M488.1 503.8l0.1 9.2M488.4 513.4l0.2 13.1M488.4 532.0l0.1 11.2M488.5 546.7l0.2 14.4M488.8 564.5l0.2 14.1M489.1 585.0l0.1 11.3M489.3 600.5l0.1 11.9M489.5 615.7l0.1 11.2M489.7 627.2l0.2 16.6M498.5 459.0l0.3 11.5M498.9 472.8l0.2 14.8M499.1 495.4l0.1 10.3M499.2 508.6l0.2 14.8M499.7 531.4l0.1 5.9M499.9 536.5l0.2 14.4M500.5 583.2l0.1 9.0M500.8 596.9l0.1 6.3M500.9 606.1l0.1 7.4M501.1 627.8l0.1 7.2M501.1 633.4l0.2 16.8M508.2 458.9l0.3 9.6M508.9 473.1l0.1 6.7M508.6 478.1l0.2 14.4M509.0 513.9l0.1 8.9M509.4 548.9l0.1 7.3M509.8 559.9l0.1 8.8M510.2 570.4l0.2 13.7M510.3 590.9l0.1 6.1M510.6 611.0l0.2 13.7M510.4 631.4l0.1 8.1" stroke="#ffffff" stroke-width="1.1" stroke-linecap="round" fill="none"/>
<rect x="460.5" y="257" width="7" height="201" fill="#e90000"/>
</g>
<rect x="712" y="113" width="35" height="696" fill="url(#hot)"/>
<path d="M911 233H992V181.8H997V119.2H1002.8V122.8H1008.9V137.8H1013.9V141.6H1019.7V143.8H1025V145.8H1031.6V146.9H1037.3V147.9H1042.7V149H1048.4V149.8H1053.7V151.1H1063.9V152.2H1070.6V152.9H1081.2V153.9H1092.3V154.5H1108.8V155.6H1126.1V156.9H1143V157.8H1165.2V158.7H1182V137.8H1185" fill="none" stroke="#0000ff" stroke-width="1.6"/>
<path d="M911 405H925.2V299.9H930V290.8H935.9V313.6H941.2V319.9H947.1V323.8H952.8V327.8H958V331.9H964V333.5H969.1V336.8H975.2V340.8H980.8V349.8H986V362.7H992V382.1H996.9V405H1185" fill="none" stroke="#0000ff" stroke-width="1.6"/>
<path d="M106 194H676V728H106Z M712 113H747V809H712Z M911 113H1185V233H911Z M911 285H1185V405H911Z" fill="none" stroke="#000" stroke-width="2" stroke-linejoin="miter" stroke-linecap="square"/>
<path d="M99 728.0H106M99 613.0H106M99 498.0H106M99 383.0H106M99 268.0H106M106.0 728V735M221.0 728V735M336.0 728V735M451.0 728V735M566.0 728V735M747 809H754M747 693H754M747 577H754M747 461H754M747 345H754M747 229H754M747 113H754M904 232.8H911M904 203.1H911M904 173.4H911M904 143.7H911M904 114.0H911M911.0 233V240M957.5 233V240M1004.1 233V240M1050.7 233V240M1097.2 233V240M1143.8 233V240M904 404.8H911M904 375.8H911M904 346.8H911M904 317.8H911M904 288.8H911M929.1 405V412M966.4 405V412M1003.7 405V412M1041.1 405V412M1078.4 405V412M1115.7 405V412M1153.0 405V412" fill="none" stroke="#000" stroke-width="2"/>
<text x="6.7" y="22.9" font-size="16.8" textLength="194.3" lengthAdjust="spacingAndGlyphs">2025-01-15: ESPRESSO</text>
<text x="336.2" y="23.3" font-size="12.2" textLength="54.5" lengthAdjust="spacingAndGlyphs">type info</text>
<text x="629.3" y="23.3" font-size="12.2" textLength="66.2" lengthAdjust="spacingAndGlyphs">set-up info</text>
<text x="7.5" y="45.3" font-size="12.2" textLength="59.3" lengthAdjust="spacingAndGlyphs">ORIGFILE:</text>
<text x="75.0" y="45.3" font-size="12.2" textLength="240.3" lengthAdjust="spacingAndGlyphs">ESPRESSO_SINGLEHR_WAVE016_0010</text>
<text x="6.4" y="61.7" font-size="12.2" textLength="53.4" lengthAdjust="spacingAndGlyphs">ARCFILE:</text>
<text x="75.0" y="61.7" font-size="12.2" textLength="229.6" lengthAdjust="spacingAndGlyphs">ESPRE.2025-01-16T11:00:49.179.fits</text>
<text x="6.4" y="80.6" font-size="12.2" textLength="59.2" lengthAdjust="spacingAndGlyphs">raw_type:</text>
<text x="75.0" y="80.6" font-size="12.2" textLength="86.2" lengthAdjust="spacingAndGlyphs">WAVE_LFC_FP</text>
<text x="7.7" y="97.6" font-size="12.2" textLength="54.6" lengthAdjust="spacingAndGlyphs">do_class:</text>
<text x="75.0" y="97.6" font-size="12.2" textLength="43.3" lengthAdjust="spacingAndGlyphs">LFC_FP</text>
<text x="7.7" y="113.5" font-size="12.2" textLength="62.3" lengthAdjust="spacingAndGlyphs">extension:</text>
<text x="75.0" y="113.5" font-size="12.2" textLength="6.6" lengthAdjust="spacingAndGlyphs">1</text>
<text x="336.4" y="44.8" font-size="12.2" textLength="66.2" lengthAdjust="spacingAndGlyphs">DPR.CATG:</text>
<text x="405.0" y="44.8" font-size="12.2" textLength="34.9" lengthAdjust="spacingAndGlyphs">CALIB</text>
<text x="336.4" y="61.8" font-size="12.2" textLength="62.4" lengthAdjust="spacingAndGlyphs">DPR.TYPE:</text>
<text x="405.0" y="61.8" font-size="12.2" textLength="82.5" lengthAdjust="spacingAndGlyphs">WAVE,LFC,FP</text>
<text x="336.4" y="79.8" font-size="12.2" textLength="65.6" lengthAdjust="spacingAndGlyphs">DPR.TECH:</text>
<text x="405.0" y="79.8" font-size="12.2" textLength="55.5" lengthAdjust="spacingAndGlyphs">ECHELLE</text>
<text x="336.4" y="96.8" font-size="12.2" textLength="42.4" lengthAdjust="spacingAndGlyphs">TPL.ID:</text>
<text x="405.0" y="96.8" font-size="12.2" textLength="190.9" lengthAdjust="spacingAndGlyphs">ESPRESSO_singleHR_cal_wave</text>
<text x="629.3" y="42.7" font-size="10.3" textLength="55.3" lengthAdjust="spacingAndGlyphs">INS.MODE:</text>
<text x="760.5" y="42.7" font-size="10.3" textLength="50.6" lengthAdjust="spacingAndGlyphs">SINGLEHR</text>
<text x="629.3" y="55.8" font-size="10.3" textLength="52.1" lengthAdjust="spacingAndGlyphs">DET.BINX:</text>
<text x="760.5" y="55.8" font-size="10.3">1</text>
<text x="629.3" y="68.9" font-size="10.3" textLength="50.8" lengthAdjust="spacingAndGlyphs">DET.BINY:</text>
<text x="760.5" y="68.9" font-size="10.3">1</text>
<text x="6.7" y="863.7" font-size="10.4" textLength="172.1" lengthAdjust="spacingAndGlyphs">powered by QC: www.eso.org/HC</text>
<text x="936.6" y="863.7" font-size="10.4" textLength="301.5" lengthAdjust="spacingAndGlyphs">created by qc_rawdisp.py v1.2.3 on 2025-01-16T11:36:02</text>
<text x="987.3" y="576.9" font-size="10.4" textLength="117.8" lengthAdjust="spacingAndGlyphs">cut in x not configured</text>
<text x="987.3" y="750.7" font-size="10.4" textLength="117.8" lengthAdjust="spacingAndGlyphs">cut in y not configured</text>
<text x="91.6" y="731.9" font-size="10.4" textLength="6.3" lengthAdjust="spacingAndGlyphs" text-anchor="end">0</text>
<text x="91.6" y="616.9" font-size="10.4" textLength="25.2" lengthAdjust="spacingAndGlyphs" text-anchor="end">2000</text>
<text x="91.6" y="501.9" font-size="10.4" textLength="25.2" lengthAdjust="spacingAndGlyphs" text-anchor="end">4000</text>
<text x="91.6" y="386.9" font-size="10.4" textLength="25.2" lengthAdjust="spacingAndGlyphs" text-anchor="end">6000</text>
<text x="91.6" y="271.9" font-size="10.4" textLength="25.2" lengthAdjust="spacingAndGlyphs" text-anchor="end">8000</text>
<text x="106.0" y="750.8" font-size="10.4" textLength="6.3" lengthAdjust="spacingAndGlyphs" text-anchor="middle">0</text>
<text x="221.0" y="750.8" font-size="10.4" textLength="25.2" lengthAdjust="spacingAndGlyphs" text-anchor="middle">2000</text>
<text x="336.0" y="750.8" font-size="10.4" textLength="25.2" lengthAdjust="spacingAndGlyphs" text-anchor="middle">4000</text>
<text x="451.0" y="750.8" font-size="10.4" textLength="25.2" lengthAdjust="spacingAndGlyphs" text-anchor="middle">6000</text>
<text x="566.0" y="750.8" font-size="10.4" textLength="25.2" lengthAdjust="spacingAndGlyphs" text-anchor="middle">8000</text>
<text x="391.6" y="769.0" font-size="10.4" text-anchor="middle">X</text>
<text x="0" y="0" font-size="10.4" text-anchor="middle" transform="translate(53.9 461) rotate(-90)">Y</text>
<text x="762.0" y="813.0" font-size="10.4" textLength="6.3" lengthAdjust="spacingAndGlyphs">0</text>
<text x="762.0" y="697.0" font-size="10.4" textLength="18.9" lengthAdjust="spacingAndGlyphs">500</text>
<text x="762.0" y="581.0" font-size="10.4" textLength="25.2" lengthAdjust="spacingAndGlyphs">1000</text>
<text x="762.0" y="465.0" font-size="10.4" textLength="25.2" lengthAdjust="spacingAndGlyphs">1500</text>
<text x="762.0" y="349.0" font-size="10.4" textLength="25.2" lengthAdjust="spacingAndGlyphs">2000</text>
<text x="762.0" y="233.0" font-size="10.4" textLength="25.2" lengthAdjust="spacingAndGlyphs">2500</text>
<text x="762.0" y="117.0" font-size="10.4" textLength="25.2" lengthAdjust="spacingAndGlyphs">3000</text>
<text x="896.8" y="236.8" font-size="10.4" textLength="6.3" lengthAdjust="spacingAndGlyphs" text-anchor="end">0</text>
<text x="896.8" y="207.1" font-size="10.4" textLength="6.3" lengthAdjust="spacingAndGlyphs" text-anchor="end">2</text>
<text x="896.8" y="177.4" font-size="10.4" textLength="6.3" lengthAdjust="spacingAndGlyphs" text-anchor="end">4</text>
<text x="896.8" y="147.7" font-size="10.4" textLength="6.3" lengthAdjust="spacingAndGlyphs" text-anchor="end">6</text>
<text x="896.8" y="118.0" font-size="10.4" textLength="6.3" lengthAdjust="spacingAndGlyphs" text-anchor="end">8</text>
<text x="911.0" y="256.0" font-size="10.4" textLength="6.3" lengthAdjust="spacingAndGlyphs" text-anchor="middle">0</text>
<text x="1004.1" y="256.0" font-size="10.4" textLength="25.2" lengthAdjust="spacingAndGlyphs" text-anchor="middle">1000</text>
<text x="1097.2" y="256.0" font-size="10.4" textLength="25.2" lengthAdjust="spacingAndGlyphs" text-anchor="middle">2000</text>
<text x="1048.0" y="273.6" font-size="10.4" textLength="34.0" lengthAdjust="spacingAndGlyphs" text-anchor="middle">counts</text>
<text x="0" y="0" font-size="10.4" text-anchor="middle" transform="translate(878 173.6) rotate(-90)" textLength="72" lengthAdjust="spacingAndGlyphs">log frequency</text>
<text x="0" y="0" font-size="10.4" text-anchor="middle" transform="translate(1194.6 175) rotate(90)" textLength="93" lengthAdjust="spacingAndGlyphs">histogram (detail)</text>
<text x="896.8" y="408.8" font-size="10.4" textLength="6.3" lengthAdjust="spacingAndGlyphs" text-anchor="end">0</text>
<text x="896.8" y="379.8" font-size="10.4" textLength="6.3" lengthAdjust="spacingAndGlyphs" text-anchor="end">2</text>
<text x="896.8" y="350.8" font-size="10.4" textLength="6.3" lengthAdjust="spacingAndGlyphs" text-anchor="end">4</text>
<text x="896.8" y="321.8" font-size="10.4" textLength="6.3" lengthAdjust="spacingAndGlyphs" text-anchor="end">6</text>
<text x="896.8" y="292.8" font-size="10.4" textLength="6.3" lengthAdjust="spacingAndGlyphs" text-anchor="end">8</text>
<text x="929.1" y="428.0" font-size="10.4" textLength="6.3" lengthAdjust="spacingAndGlyphs" text-anchor="middle">0</text>
<text x="1003.7" y="428.0" font-size="10.4" textLength="31.5" lengthAdjust="spacingAndGlyphs" text-anchor="middle">20000</text>
<text x="1078.4" y="428.0" font-size="10.4" textLength="31.5" lengthAdjust="spacingAndGlyphs" text-anchor="middle">40000</text>
<text x="1153.0" y="428.0" font-size="10.4" textLength="31.5" lengthAdjust="spacingAndGlyphs" text-anchor="middle">60000</text>
<text x="1048.0" y="446.0" font-size="10.4" textLength="34.0" lengthAdjust="spacingAndGlyphs" text-anchor="middle">counts</text>
<text x="0" y="0" font-size="10.4" text-anchor="middle" transform="translate(878 345.7) rotate(-90)" textLength="72" lengthAdjust="spacingAndGlyphs">log frequency</text>
<text x="0" y="0" font-size="10.4" text-anchor="middle" transform="translate(1194.6 349) rotate(90)" textLength="80.5" lengthAdjust="spacingAndGlyphs">histogram (full)</text>
</svg></body></html>
